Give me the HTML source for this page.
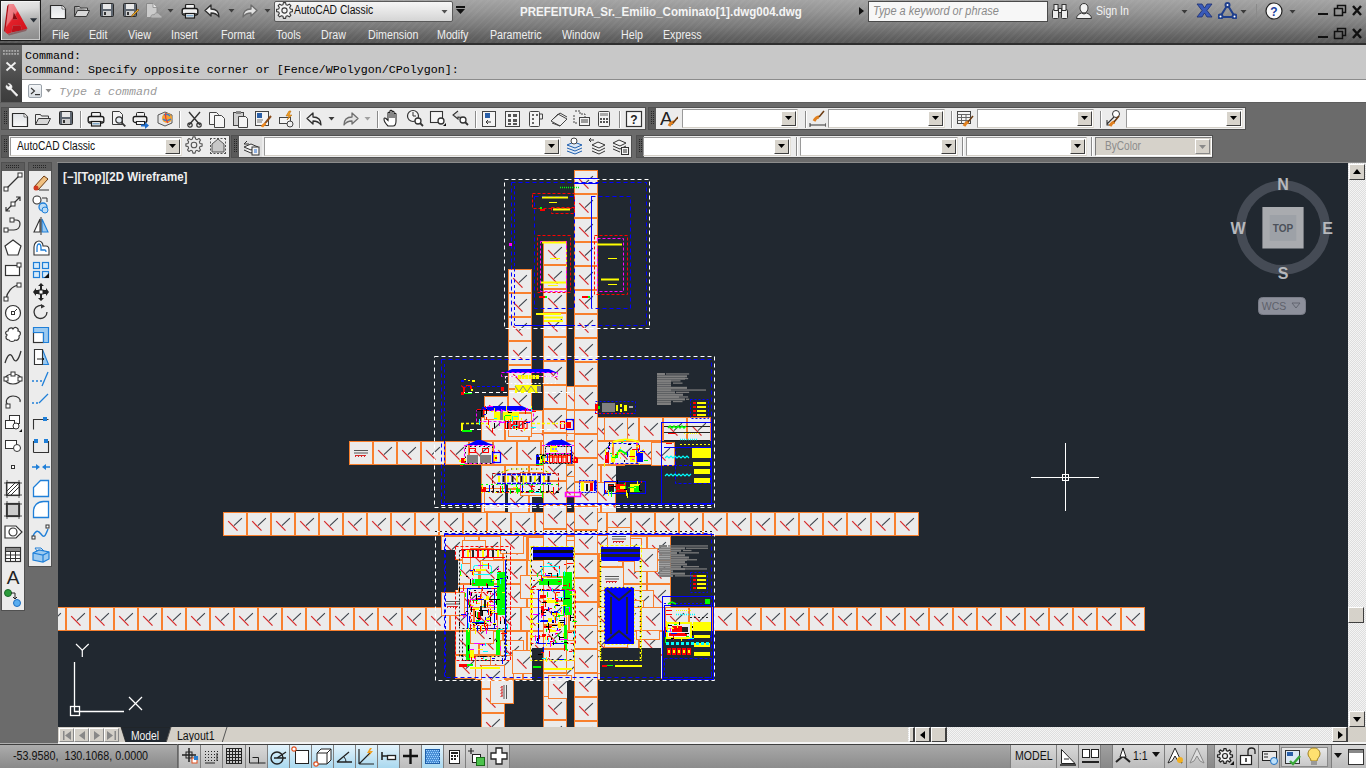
<!DOCTYPE html><html><head><meta charset="utf-8"><style>
*{margin:0;padding:0;box-sizing:border-box}
html,body{width:1366px;height:768px;overflow:hidden;background:#6b6b6b;font-family:"Liberation Sans",sans-serif;position:relative}
.a{position:absolute;display:block}
.t{position:absolute;white-space:nowrap;line-height:1}
</style></head><body>

<div class="a" style="left:0px;top:0px;width:1366px;height:45px;background:linear-gradient(#a4a4a4 0px,#939393 12px,#7a7a7a 26px,#606060 38px,#565656 44px);"></div>
<div class="a" style="left:0px;top:0px;width:1366px;height:45px;background:repeating-linear-gradient(135deg,rgba(255,255,255,0.035) 0 2px,rgba(0,0,0,0) 2px 5px);"></div>
<div class="a" style="left:0px;top:43px;width:1366px;height:2px;background:#2f2f2f;"></div>
<div class="a" style="left:0px;top:0px;width:41px;height:41px;background:linear-gradient(172deg,#ececec 0%,#dcdcdc 25%,#b4b4b4 50%,#9a9a9a 75%,#8a8a8a 100%);border:1px solid #1c1c1c;box-shadow:inset 1px 1px 0 #f4f4f4,inset -1px -1px 0 #c8c8c8"></div>
<svg class="a" style="left:0px;top:0px" width="41" height="41" viewBox="0 0 41 41"><defs><linearGradient id="ag" x1="0" y1="0" x2="1" y2="1"><stop offset="0" stop-color="#f39aa0"/><stop offset=".38" stop-color="#ee7078"/><stop offset=".42" stop-color="#e3202a"/><stop offset="1" stop-color="#d0101a"/></linearGradient></defs>
<path d="M8.8 4.1H13.8L27.5 28.4 22 30.3 20.5 25.2 12.9 25.5 11.5 32.6 7.6 34 5.3 32.2Z M12.8 19.5 17.6 19.3 13.6 12Z" fill="url(#ag)" fill-rule="evenodd"/>
<path d="M5.3 32.2L8.8 4.1 7.2 6 4 31z" fill="#b00c14"/>
<path d="M12.9 25.5L20.5 25.2 22 30.3 11.5 32.6z" fill="#c0101a"/>
<path d="M7.6 34L27.5 28.4 26 31 9 35.5z" fill="#7a2a30" opacity=".5"/>
<path d="M12.8 19.5 17.6 19.3 13.6 12Z" fill="#8a0a10"/><path d="M30 18.2h7.2l-3.6 4.4z" fill="#2a3038"/></svg>
<svg class="a" style="left:49px;top:3px" width="18" height="16" viewBox="0 0 18 16"><defs><linearGradient id="ng" x1="0" y1="0" x2="0" y2="1"><stop offset="0" stop-color="#dfe2e6"/><stop offset="1" stop-color="#f8f8f8"/></linearGradient></defs><path d="M1.5 2.5h11.5l3.5 3.5v9.5h-15z" fill="url(#ng)" stroke="#2a2a2a" stroke-width="1.2" stroke-linejoin="round"/><path d="M13 2.5v3.5h3.5" fill="#fff" stroke="#555" stroke-width=".8"/></svg>
<svg class="a" style="left:73px;top:3px" width="18" height="16" viewBox="0 0 18 16"><path d="M1.5 3.5h5l1 1.5h7v2" fill="#e8e8e8" stroke="#3a3a3a"/><path d="M1.5 13.5l3-6h12l-3 6z" fill="#d8d8d8" stroke="#3a3a3a"/><path d="M1.5 3.5v10" stroke="#3a3a3a"/></svg>
<svg class="a" style="left:99px;top:2px" width="18" height="17" viewBox="0 0 18 17"><rect x="1.5" y="1.5" width="13" height="13" rx="1" fill="#5e6670" stroke="#2a2a2a"/><rect x="4" y="2" width="8" height="5" fill="#e8e8e8"/><rect x="4" y="9" width="8" height="5" fill="#cfcfcf"/><rect x="5" y="10" width="2" height="3" fill="#333"/></svg>
<svg class="a" style="left:122px;top:2px" width="18" height="17" viewBox="0 0 18 17"><rect x="1.5" y="1.5" width="13" height="13" rx="1" fill="#5e6670" stroke="#2a2a2a"/><rect x="4" y="2" width="8" height="5" fill="#e8e8e8"/><rect x="4" y="9" width="8" height="5" fill="#cfcfcf"/><rect x="5" y="10" width="2" height="3" fill="#333"/><path d="M9 15l2-1 6-6-1-1-6 6z" fill="#f0b020" stroke="#704010" stroke-width=".6"/></svg>
<svg class="a" style="left:145px;top:2px" width="18" height="17" viewBox="0 0 18 17"><path d="M1.5 1.5h6.5l4 4v10h-10.5z" fill="#cbcbcb" stroke="#8a8a8a"/><path d="M8 1.5v4h4" fill="#e8e8e8" stroke="#8a8a8a" stroke-width=".8"/><path d="M6 16c-1-3 2-4 3-3 1-3 5-3 6 0 2 0 3 3 1 3z" fill="#b8b8b8" stroke="#8a8a8a" stroke-width=".8"/></svg>
<svg class="a" style="left:167px;top:9px" width="7" height="4" viewBox="0 0 7 4"><path d="M.5 0h6L3.5 3.5z" fill="#3e3e3e"/></svg>
<svg class="a" style="left:181px;top:3px" width="18" height="16" viewBox="0 0 18 16"><rect x="4.5" y="1.5" width="9" height="4" rx="1" fill="#f4f4f4" stroke="#222" stroke-width="1.2"/><rect x="1.2" y="5.5" width="15.6" height="6.5" rx="2" fill="#f0f0f0" stroke="#1a1a1a" stroke-width="1.4"/><path d="M1.5 10.5h15" stroke="#555"/><rect x="4.5" y="10.5" width="9" height="4.5" fill="#f6f6f6" stroke="#1a1a1a" stroke-width="1.2"/><rect x="5.5" y="12" width="7" height="1.5" fill="#80a8c8"/></svg>
<svg class="a" style="left:204px;top:4px" width="18" height="14" viewBox="0 0 18 14"><path d="M7 1L1 6.5 7 12V9c4 0 6 1 8 4 0-5-3-8-8-8z" fill="#f0f0f0" stroke="#2e2e2e" stroke-width="1.3" stroke-linejoin="round"/></svg>
<svg class="a" style="left:228px;top:9px" width="7" height="4" viewBox="0 0 7 4"><path d="M.5 0h6L3.5 3.5z" fill="#3e3e3e"/></svg>
<svg class="a" style="left:240px;top:4px" width="18" height="14" viewBox="0 0 18 14"><path d="M11 1l6 5.5-6 5.5V9c-4 0-6 1-8 4 0-5 3-8 8-8z" fill="#e2e2e2" stroke="#6e6e6e" stroke-width="1.3" stroke-linejoin="round"/></svg>
<svg class="a" style="left:264px;top:9px" width="7" height="4" viewBox="0 0 7 4"><path d="M.5 0h6L3.5 3.5z" fill="#3e3e3e"/></svg>
<div class="a" style="left:274px;top:1px;width:179px;height:21px;background:linear-gradient(#f6f6f6,#e2e2e2 60%,#d4d4d4);border:1px solid #5a5a5a;border-radius:2px"></div>
<svg class="a" style="left:276px;top:2px" width="17" height="17" viewBox="0 0 17 17"><path d="M14.31 6.99 L16.42 7.40 L16.42 9.60 L14.31 10.01 L13.68 11.53 L14.88 13.33 L13.33 14.88 L11.53 13.68 L10.01 14.31 L9.60 16.42 L7.40 16.42 L6.99 14.31 L5.47 13.68 L3.67 14.88 L2.12 13.33 L3.32 11.53 L2.69 10.01 L0.58 9.60 L0.58 7.40 L2.69 6.99 L3.32 5.47 L2.12 3.67 L3.67 2.12 L5.47 3.32 L6.99 2.69 L7.40 0.58 L9.60 0.58 L10.01 2.69 L11.53 3.32 L13.33 2.12 L14.88 3.67 L13.68 5.47Z" fill="#f4f4f4" stroke="#3a3a3a" stroke-width="1.1" stroke-linejoin="round"/><circle cx="8.5" cy="8.5" r="2.6" fill="#f4f4f4" stroke="#3a3a3a" stroke-width="1.1"/></svg>
<div class="t" style="left:294px;top:4px;font-size:12px;color:#101010;font-weight:normal;font-family:'Liberation Sans',sans-serif;font-style:normal;transform:scaleX(0.86);transform-origin:0 0;">AutoCAD Classic</div>
<svg class="a" style="left:441px;top:10px" width="7" height="4" viewBox="0 0 7 4"><path d="M.5 0h6L3.5 3.5z" fill="#505050"/></svg>
<svg class="a" style="left:456px;top:6px" width="9" height="8" viewBox="0 0 9 8"><rect x="0" y="0" width="9" height="2" fill="#111"/><path d="M0 3h9L4.5 8z" fill="#111"/></svg>
<div class="t" style="left:520px;top:6px;font-size:12px;color:#f4f4f4;font-weight:bold;font-family:'Liberation Sans',sans-serif;font-style:normal;transform:scaleX(0.963);transform-origin:0 0;">PREFEITURA_Sr._Emilio_Cominato[1].dwg004.dwg</div>
<svg class="a" style="left:859px;top:7px" width="5" height="8" viewBox="0 0 5 8"><path d="M0 0l5 4L0 8z" fill="#111"/></svg>
<div class="a" style="left:868px;top:1px;width:180px;height:21px;background:#f7f7f7;border:1px solid #4a4a4a"></div>
<div class="t" style="left:873px;top:5px;font-size:12px;color:#8a8a8a;font-weight:normal;font-family:'Liberation Sans',sans-serif;font-style:italic;transform:scaleX(0.913);transform-origin:0 0;">Type a keyword or phrase</div>
<svg class="a" style="left:1051px;top:3px" width="18" height="17" viewBox="0 0 18 17"><g fill="#eee" stroke="#333" stroke-width="1"><rect x="1.5" y="6.5" width="6" height="9" rx="1"/><rect x="10.5" y="6.5" width="6" height="9" rx="1"/><rect x="3" y="1.5" width="4" height="6"/><rect x="11" y="1.5" width="4" height="6"/><rect x="7.5" y="5.5" width="3" height="4"/></g></svg>
<svg class="a" style="left:1075px;top:2px" width="18" height="17" viewBox="0 0 18 17"><path d="M9 1.5c-2.6 0-4 2-4 4.5s1.5 5 4 5 4-2.5 4-5-1.4-4.5-4-4.5zM1.5 16.5c0-3 3-5 5-5.5l2.5 1 2.5-1c2 .5 5 2.5 5 5.5z" fill="#f2f2f2" stroke="#333"/></svg>
<div class="t" style="left:1096px;top:5px;font-size:12px;color:#f2f2f2;font-weight:normal;font-family:'Liberation Sans',sans-serif;font-style:normal;transform:scaleX(0.88);transform-origin:0 0;">Sign In</div>
<svg class="a" style="left:1181px;top:10px" width="7" height="4" viewBox="0 0 7 4"><path d="M.5 0h6L3.5 3.5z" fill="#3a3a3a"/></svg>
<svg class="a" style="left:1196px;top:3px" width="17" height="15" viewBox="0 0 17 15"><path d="M1 1h5l2.5 4L11 1h5l-5 6.5 5 6.5h-5L8.5 10 6 14H1l5-6.5z" fill="#3a5ab8" stroke="#1c2f70" stroke-width=".8"/></svg>
<svg class="a" style="left:1218px;top:2px" width="19" height="17" viewBox="0 0 19 17"><g fill="none" stroke="#1f3f8c" stroke-width="2"><path d="M9.5 3L2 15h15z"/><circle cx="9.5" cy="3" r="2" fill="#fff"/><circle cx="2.5" cy="14.5" r="2" fill="#fff"/><circle cx="16.5" cy="14.5" r="2" fill="#fff"/></g></svg>
<svg class="a" style="left:1240px;top:10px" width="7" height="4" viewBox="0 0 7 4"><path d="M.5 0h6L3.5 3.5z" fill="#3a3a3a"/></svg>
<div class="a" style="left:1256px;top:4px;width:1px;height:16px;background:#8a8a8a;"></div>
<svg class="a" style="left:1265px;top:2px" width="18" height="18" viewBox="0 0 18 18"><circle cx="9" cy="9" r="8" fill="#fafafa" stroke="#222" stroke-width="1.2"/><text x="9" y="13.5" font-size="12" font-weight="bold" text-anchor="middle" fill="#1a3fa0" font-family="Liberation Sans">?</text></svg>
<svg class="a" style="left:1289px;top:10px" width="7" height="4" viewBox="0 0 7 4"><path d="M.5 0h6L3.5 3.5z" fill="#3a3a3a"/></svg>
<svg class="a" style="left:1317px;top:4px" width="48" height="13" viewBox="0 0 48 13"><rect x="1" y="9" width="10" height="2" fill="#111"/><g fill="none" stroke="#111" stroke-width="1.5"><rect x="17.5" y="4.5" width="8" height="7"/><path d="M20.5 4.5v-3h8v7h-3"/></g><path d="M36 2l8 9M44 2l-8 9" stroke="#111" stroke-width="2.4"/></svg>
<svg class="a" style="left:1317px;top:27px" width="48" height="13" viewBox="0 0 48 13"><rect x="1" y="9" width="10" height="2" fill="#111"/><g fill="none" stroke="#111" stroke-width="1.5"><rect x="17.5" y="4.5" width="8" height="7"/><path d="M20.5 4.5v-3h8v7h-3"/></g><path d="M36 2l8 9M44 2l-8 9" stroke="#111" stroke-width="2.4"/></svg>
<div class="t" style="left:52px;top:29px;font-size:12px;color:#eeeeee;font-weight:normal;font-family:'Liberation Sans',sans-serif;font-style:normal;transform:scaleX(0.89);transform-origin:0 0;">File</div>
<div class="t" style="left:89px;top:29px;font-size:12px;color:#eeeeee;font-weight:normal;font-family:'Liberation Sans',sans-serif;font-style:normal;transform:scaleX(0.89);transform-origin:0 0;">Edit</div>
<div class="t" style="left:128px;top:29px;font-size:12px;color:#eeeeee;font-weight:normal;font-family:'Liberation Sans',sans-serif;font-style:normal;transform:scaleX(0.89);transform-origin:0 0;">View</div>
<div class="t" style="left:171px;top:29px;font-size:12px;color:#eeeeee;font-weight:normal;font-family:'Liberation Sans',sans-serif;font-style:normal;transform:scaleX(0.89);transform-origin:0 0;">Insert</div>
<div class="t" style="left:221px;top:29px;font-size:12px;color:#eeeeee;font-weight:normal;font-family:'Liberation Sans',sans-serif;font-style:normal;transform:scaleX(0.89);transform-origin:0 0;">Format</div>
<div class="t" style="left:276px;top:29px;font-size:12px;color:#eeeeee;font-weight:normal;font-family:'Liberation Sans',sans-serif;font-style:normal;transform:scaleX(0.89);transform-origin:0 0;">Tools</div>
<div class="t" style="left:321px;top:29px;font-size:12px;color:#eeeeee;font-weight:normal;font-family:'Liberation Sans',sans-serif;font-style:normal;transform:scaleX(0.89);transform-origin:0 0;">Draw</div>
<div class="t" style="left:368px;top:29px;font-size:12px;color:#eeeeee;font-weight:normal;font-family:'Liberation Sans',sans-serif;font-style:normal;transform:scaleX(0.89);transform-origin:0 0;">Dimension</div>
<div class="t" style="left:437px;top:29px;font-size:12px;color:#eeeeee;font-weight:normal;font-family:'Liberation Sans',sans-serif;font-style:normal;transform:scaleX(0.89);transform-origin:0 0;">Modify</div>
<div class="t" style="left:490px;top:29px;font-size:12px;color:#eeeeee;font-weight:normal;font-family:'Liberation Sans',sans-serif;font-style:normal;transform:scaleX(0.89);transform-origin:0 0;">Parametric</div>
<div class="t" style="left:562px;top:29px;font-size:12px;color:#eeeeee;font-weight:normal;font-family:'Liberation Sans',sans-serif;font-style:normal;transform:scaleX(0.89);transform-origin:0 0;">Window</div>
<div class="t" style="left:621px;top:29px;font-size:12px;color:#eeeeee;font-weight:normal;font-family:'Liberation Sans',sans-serif;font-style:normal;transform:scaleX(0.89);transform-origin:0 0;">Help</div>
<div class="t" style="left:663px;top:29px;font-size:12px;color:#eeeeee;font-weight:normal;font-family:'Liberation Sans',sans-serif;font-style:normal;transform:scaleX(0.89);transform-origin:0 0;">Express</div>
<div class="a" style="left:0px;top:45px;width:1366px;height:63px;background:#6b6b6b;"></div>
<div class="a" style="left:1px;top:45px;width:21px;height:57px;background:linear-gradient(#6a6a6a,#4a4a4a 60%,#3c3c3c);"></div>
<svg class="a" style="left:3px;top:50px" width="18" height="6" viewBox="0 0 18 6"><rect x="0.0" y="0" width="1.8" height="1.8" fill="#a8a8a8"/><rect x="0.0" y="3" width="1.8" height="1.8" fill="#a8a8a8"/><rect x="2.8" y="0" width="1.8" height="1.8" fill="#a8a8a8"/><rect x="2.8" y="3" width="1.8" height="1.8" fill="#a8a8a8"/><rect x="5.6" y="0" width="1.8" height="1.8" fill="#a8a8a8"/><rect x="5.6" y="3" width="1.8" height="1.8" fill="#a8a8a8"/><rect x="8.4" y="0" width="1.8" height="1.8" fill="#a8a8a8"/><rect x="8.4" y="3" width="1.8" height="1.8" fill="#a8a8a8"/><rect x="11.2" y="0" width="1.8" height="1.8" fill="#a8a8a8"/><rect x="11.2" y="3" width="1.8" height="1.8" fill="#a8a8a8"/><rect x="14.0" y="0" width="1.8" height="1.8" fill="#a8a8a8"/><rect x="14.0" y="3" width="1.8" height="1.8" fill="#a8a8a8"/></svg>
<svg class="a" style="left:5px;top:61px" width="12" height="11" viewBox="0 0 12 11"><path d="M1.5 1.5l9 8M10.5 1.5l-9 8" stroke="#f0f0f0" stroke-width="1.8"/></svg>
<svg class="a" style="left:4px;top:82px" width="15" height="15" viewBox="0 0 15 15"><path d="M2 4.5a3.5 3.5 0 0 0 4.6 3.3l6 6.5 1.3-1.3-6.3-6.3A3.5 3.5 0 0 0 4.2 1.5L6 3.5 4.5 5 2.5 3.2z" fill="#f4f4f4" stroke="#f4f4f4" stroke-width=".6"/></svg>
<div class="a" style="left:22px;top:45px;width:1344px;height:34px;background:#c8c8c8;"></div>
<div class="t" style="left:25px;top:50.5px;font-size:11.67px;color:#000;font-weight:normal;font-family:'Liberation Mono',monospace;font-style:normal;">Command:</div>
<div class="t" style="left:25px;top:65px;font-size:11.67px;color:#000;font-weight:normal;font-family:'Liberation Mono',monospace;font-style:normal;">Command: Specify opposite corner or [Fence/WPolygon/CPolygon]:</div>
<div class="a" style="left:22px;top:79px;width:1344px;height:23px;background:#ffffff;border-top:1px solid #8c8c8c"></div>
<div class="a" style="left:28px;top:84px;width:14px;height:14px;background:linear-gradient(#f4f6f8,#d8dde2);border:1px solid #9aa2aa;border-radius:2px"></div>
<svg class="a" style="left:30px;top:87px" width="11" height="9" viewBox="0 0 11 9"><path d="M1 1l3.5 3L1 7" fill="none" stroke="#333" stroke-width="1.1"/><rect x="5" y="7" width="5" height="1.2" fill="#333"/></svg>
<svg class="a" style="left:45px;top:89px" width="7" height="4" viewBox="0 0 7 4"><path d="M.5 0h6L3.5 3.5z" fill="#8a8a8a"/></svg>
<div class="t" style="left:59px;top:86.5px;font-size:11.67px;color:#9a9a9a;font-weight:normal;font-family:'Liberation Mono',monospace;font-style:italic;">Type a command</div>
<div class="a" style="left:0px;top:102px;width:1366px;height:1px;background:#5e5e5e;"></div>
<div class="a" style="left:1px;top:107px;width:645px;height:23px;background:#ececec;border:1px solid #505050"></div>
<div class="a" style="left:2px;top:108px;width:7px;height:21px;background:#5a5a5a;"></div>
<svg class="a" style="left:4px;top:111px" width="4" height="15" viewBox="0 0 4 15"><rect x="0" y="0" width="1" height="1" fill="#262626"/><rect x="0" y="2" width="1" height="1" fill="#262626"/><rect x="0" y="4" width="1" height="1" fill="#262626"/><rect x="0" y="6" width="1" height="1" fill="#262626"/><rect x="0" y="8" width="1" height="1" fill="#262626"/><rect x="0" y="10" width="1" height="1" fill="#262626"/><rect x="0" y="12" width="1" height="1" fill="#262626"/><rect x="2" y="0" width="1" height="1" fill="#262626"/><rect x="2" y="2" width="1" height="1" fill="#262626"/><rect x="2" y="4" width="1" height="1" fill="#262626"/><rect x="2" y="6" width="1" height="1" fill="#262626"/><rect x="2" y="8" width="1" height="1" fill="#262626"/><rect x="2" y="10" width="1" height="1" fill="#262626"/><rect x="2" y="12" width="1" height="1" fill="#262626"/></svg>
<svg class="a" style="left:11px;top:111px" width="18" height="16" viewBox="0 0 18 16"><defs><linearGradient id="ng" x1="0" y1="0" x2="0" y2="1"><stop offset="0" stop-color="#dfe2e6"/><stop offset="1" stop-color="#f8f8f8"/></linearGradient></defs><path d="M1.5 2.5h11.5l3.5 3.5v9.5h-15z" fill="url(#ng)" stroke="#2a2a2a" stroke-width="1.2" stroke-linejoin="round"/><path d="M13 2.5v3.5h3.5" fill="#fff" stroke="#555" stroke-width=".8"/></svg>
<svg class="a" style="left:34px;top:111px" width="18" height="16" viewBox="0 0 18 16"><path d="M1.5 3.5h5l1 1.5h7v2" fill="#e8e8e8" stroke="#3a3a3a"/><path d="M1.5 13.5l3-6h12l-3 6z" fill="#d8d8d8" stroke="#3a3a3a"/><path d="M1.5 3.5v10" stroke="#3a3a3a"/></svg>
<svg class="a" style="left:58px;top:110px" width="18" height="17" viewBox="0 0 18 17"><rect x="1.5" y="1.5" width="13" height="13" rx="1" fill="#5e6670" stroke="#2a2a2a"/><rect x="4" y="2" width="8" height="5" fill="#e8e8e8"/><rect x="4" y="9" width="8" height="5" fill="#cfcfcf"/><rect x="5" y="10" width="2" height="3" fill="#333"/></svg>
<div class="a" style="left:80px;top:111px;width:1px;height:17px;background:#8a8a8a;"></div>
<div class="a" style="left:81px;top:111px;width:1px;height:17px;background:#ffffff;"></div>
<svg class="a" style="left:87px;top:111px" width="18" height="16" viewBox="0 0 18 16"><rect x="4.5" y="1.5" width="9" height="4" rx="1" fill="#f4f4f4" stroke="#222" stroke-width="1.2"/><rect x="1.2" y="5.5" width="15.6" height="6.5" rx="2" fill="#f0f0f0" stroke="#1a1a1a" stroke-width="1.4"/><path d="M1.5 10.5h15" stroke="#555"/><rect x="4.5" y="10.5" width="9" height="4.5" fill="#f6f6f6" stroke="#1a1a1a" stroke-width="1.2"/><rect x="5.5" y="12" width="7" height="1.5" fill="#80a8c8"/></svg>
<svg class="a" style="left:110px;top:110px" width="18" height="18" viewBox="0 0 18 18"><path d="M2.5 1.5h7l3 3v10h-10z" fill="#f4f4f4" stroke="#3a3a3a"/><circle cx="9" cy="10" r="3.2" fill="#e8eef4" stroke="#333" stroke-width="1.2"/><path d="M11.3 12.3l4 4" stroke="#333" stroke-width="1.8"/></svg>
<svg class="a" style="left:132px;top:111px" width="18" height="18" viewBox="0 0 18 18"><rect x="4.5" y="1.5" width="8" height="4" rx="1" fill="#f4f4f4" stroke="#222"/><rect x="1.2" y="5.5" width="13.6" height="6" rx="2" fill="#f0f0f0" stroke="#1a1a1a" stroke-width="1.3"/><rect x="4.5" y="10.5" width="8" height="3" fill="#f6f6f6" stroke="#222"/><path d="M9 14.5h5" stroke="#1f6fd0" stroke-width="2"/><path d="M13 11l4 3.5-4 3.5z" fill="#1f6fd0"/></svg>
<svg class="a" style="left:156px;top:110px" width="18" height="18" viewBox="0 0 18 18"><path d="M2 5l7-3 7 3v8l-7 3-7-3z" fill="#e6e6e6" stroke="#555"/><circle cx="11" cy="8" r="5" fill="#f4a030"/><path d="M8 5a5 5 0 0 1 6 1M7 9c2 2 5 2 8 0" stroke="#2d7fd6" stroke-width="1.4" fill="none"/><path d="M10 3c-1 3 0 7 2 10" stroke="#e23a3a" stroke-width="1.2" fill="none"/></svg>
<div class="a" style="left:179px;top:111px;width:1px;height:17px;background:#8a8a8a;"></div>
<div class="a" style="left:180px;top:111px;width:1px;height:17px;background:#ffffff;"></div>
<svg class="a" style="left:186px;top:110px" width="18" height="18" viewBox="0 0 18 18"><path d="M3 2l11 13M14 2L3 15" stroke="#333" stroke-width="1.4"/><circle cx="4" cy="15" r="2.2" fill="none" stroke="#333" stroke-width="1.2"/><circle cx="13" cy="15" r="2.2" fill="none" stroke="#333" stroke-width="1.2"/></svg>
<svg class="a" style="left:208px;top:110px" width="18" height="18" viewBox="0 0 18 18"><path d="M1.5 2.5h7l2 2v10h-9z" fill="#f6f6f6" stroke="#444"/><path d="M6.5 5.5h7l3 3v9h-10z" fill="#f6f6f6" stroke="#444"/></svg>
<svg class="a" style="left:231px;top:110px" width="18" height="18" viewBox="0 0 18 18"><rect x="2.5" y="2.5" width="10" height="13" fill="#cfcfcf" stroke="#444"/><rect x="5" y="1" width="5" height="3" fill="#888"/><path d="M7.5 6.5h7l2 2v9h-9z" fill="#f4f4f4" stroke="#444"/></svg>
<svg class="a" style="left:254px;top:110px" width="18" height="18" viewBox="0 0 18 18"><rect x="1.5" y="1.5" width="13" height="14" fill="#f4f4f4" stroke="#444"/><rect x="3" y="3" width="5" height="5" fill="#2a5fa8"/><path d="M3 10h6M3 12h5" stroke="#777"/><path d="M9 16l3-4 5-6" stroke="#8a4b1a" stroke-width="2"/><path d="M8 17c1-2 2-3 4-3" stroke="#f08a20" stroke-width="2.5" fill="none"/></svg>
<svg class="a" style="left:277px;top:110px" width="18" height="18" viewBox="0 0 18 18"><rect x="2.5" y="7.5" width="11" height="6" fill="#f4f4f4" stroke="#444"/><circle cx="13" cy="14" r="3" fill="#f0f0f0" stroke="#444"/><path d="M12 1l-3 5h3l-2 4 5-5h-3l2-4z" fill="#f2a020" stroke="#b06000" stroke-width=".5"/></svg>
<div class="a" style="left:299px;top:111px;width:1px;height:17px;background:#8a8a8a;"></div>
<div class="a" style="left:300px;top:111px;width:1px;height:17px;background:#ffffff;"></div>
<svg class="a" style="left:306px;top:112px" width="18" height="14" viewBox="0 0 18 14"><path d="M7 1L1 6.5 7 12V9c4 0 6 1 8 4 0-5-3-8-8-8z" fill="#f0f0f0" stroke="#2e2e2e" stroke-width="1.3" stroke-linejoin="round"/></svg>
<svg class="a" style="left:328px;top:117px" width="7" height="4" viewBox="0 0 7 4"><path d="M.5 0h6L3.5 3.5z" fill="#3a3a3a"/></svg>
<svg class="a" style="left:341px;top:112px" width="18" height="14" viewBox="0 0 18 14"><path d="M11 1l6 5.5-6 5.5V9c-4 0-6 1-8 4 0-5 3-8 8-8z" fill="#e2e2e2" stroke="#6e6e6e" stroke-width="1.3" stroke-linejoin="round"/></svg>
<svg class="a" style="left:364px;top:117px" width="7" height="4" viewBox="0 0 7 4"><path d="M.5 0h6L3.5 3.5z" fill="#a0a0a0"/></svg>
<div class="a" style="left:377px;top:111px;width:1px;height:17px;background:#8a8a8a;"></div>
<div class="a" style="left:378px;top:111px;width:1px;height:17px;background:#ffffff;"></div>
<svg class="a" style="left:383px;top:109px" width="18" height="18" viewBox="0 0 18 18"><path d="M5 17c-2-2-4-5-4-7 0-1 1-1.5 2-.5l2 2V4c0-1 2-1 2 0v5V2c0-1 2-1 2 0v7V3c0-1 2-1 2 0v6V5c0-1 2-1 2 0v7c0 3-1 5-3 5z" fill="#fff" stroke="#222" stroke-width="1.1"/></svg>
<svg class="a" style="left:406px;top:109px" width="18" height="18" viewBox="0 0 18 18"><circle cx="7" cy="7" r="5.5" fill="#f4f4f4" stroke="#333" stroke-width="1.2"/><path d="M7 3v4h3" stroke="#333" fill="none"/><circle cx="12" cy="12" r="3" fill="#fff" stroke="#333" stroke-width="1.3"/><path d="M14 14l3 3" stroke="#333" stroke-width="1.8"/></svg>
<svg class="a" style="left:429px;top:109px" width="18" height="18" viewBox="0 0 18 18"><rect x="1.5" y="2.5" width="12" height="11" fill="#f4f4f4" stroke="#333" stroke-width="1.1"/><circle cx="12" cy="12" r="3" fill="#fff" stroke="#333" stroke-width="1.3"/><path d="M14 17h3v-3z" fill="#111"/></svg>
<svg class="a" style="left:452px;top:109px" width="18" height="18" viewBox="0 0 18 18"><path d="M6 2L1 6l5 4V8c3 0 5 1 6 2" fill="#ddd" stroke="#333" stroke-width="1.1"/><circle cx="11" cy="11" r="3" fill="#fff" stroke="#333" stroke-width="1.3"/><path d="M13 13l3 3" stroke="#333" stroke-width="1.8"/></svg>
<div class="a" style="left:475px;top:111px;width:1px;height:17px;background:#8a8a8a;"></div>
<div class="a" style="left:476px;top:111px;width:1px;height:17px;background:#ffffff;"></div>
<svg class="a" style="left:481px;top:110px" width="18" height="18" viewBox="0 0 18 18"><rect x="1.5" y="1.5" width="13" height="15" fill="#f4f4f4" stroke="#444"/><rect x="4" y="3" width="5" height="5" fill="#2a5fa8"/><path d="M10 12H5M7 10l-2 2 2 2" stroke="#333" fill="none"/></svg>
<svg class="a" style="left:504px;top:110px" width="18" height="18" viewBox="0 0 18 18"><rect x="1.5" y="1.5" width="14" height="15" fill="#f4f4f4" stroke="#444"/><g fill="#555"><rect x="4" y="4" width="3" height="3"/><rect x="9" y="4" width="4" height="3"/><rect x="4" y="9" width="3" height="3"/><rect x="9" y="9" width="4" height="3"/><rect x="4" y="13" width="3" height="2"/><rect x="9" y="13" width="4" height="2"/></g></svg>
<svg class="a" style="left:527px;top:110px" width="18" height="18" viewBox="0 0 18 18"><rect x="2.5" y="1.5" width="10" height="15" rx="1" fill="#f4f4f4" stroke="#444"/><g fill="#666"><rect x="5" y="4" width="2" height="2"/><rect x="5" y="8" width="2" height="2"/><rect x="5" y="12" width="2" height="2"/><rect x="9" y="4" width="2" height="2"/></g><path d="M12.5 4h3v5h-3" fill="none" stroke="#444"/></svg>
<svg class="a" style="left:550px;top:110px" width="18" height="18" viewBox="0 0 18 18"><path d="M1 11l7-7 9 5-7 7z" fill="#eee" stroke="#444"/><path d="M2 13l8 3M3 9l7-6 7 4" fill="none" stroke="#444"/></svg>
<svg class="a" style="left:573px;top:109px" width="18" height="18" viewBox="0 0 18 18"><path d="M2 2h5v3h5v3" fill="none" stroke="#444" stroke-dasharray="2 1"/><rect x="6.5" y="8.5" width="10" height="8" fill="#f4f4f4" stroke="#444"/><path d="M8 11h7M8 13h7" stroke="#444"/><path d="M1 6v8h4" fill="none" stroke="#444" stroke-dasharray="2 1"/></svg>
<svg class="a" style="left:596px;top:110px" width="18" height="18" viewBox="0 0 18 18"><rect x="2.5" y="1.5" width="11" height="15" rx="1" fill="#f4f4f4" stroke="#444"/><rect x="4" y="3" width="8" height="3" fill="#aaa"/><g fill="#555"><rect x="4" y="8" width="2" height="2"/><rect x="7" y="8" width="2" height="2"/><rect x="10" y="8" width="2" height="2"/><rect x="4" y="11" width="2" height="2"/><rect x="7" y="11" width="2" height="2"/><rect x="10" y="11" width="2" height="2"/></g></svg>
<div class="a" style="left:619px;top:111px;width:1px;height:17px;background:#8a8a8a;"></div>
<div class="a" style="left:620px;top:111px;width:1px;height:17px;background:#ffffff;"></div>
<svg class="a" style="left:625px;top:110px" width="18" height="18" viewBox="0 0 18 18"><rect x="1.5" y="1.5" width="15" height="15" fill="#f8f8f8" stroke="#333" stroke-width="1.2"/><text x="9" y="14" font-size="12" font-weight="bold" text-anchor="middle" fill="#222" font-family="Liberation Sans">?</text></svg>
<div class="a" style="left:648px;top:107px;width:598px;height:23px;background:#ececec;border:1px solid #505050"></div>
<div class="a" style="left:649px;top:108px;width:7px;height:21px;background:#5a5a5a;"></div>
<svg class="a" style="left:651px;top:111px" width="4" height="15" viewBox="0 0 4 15"><rect x="0" y="0" width="1" height="1" fill="#262626"/><rect x="0" y="2" width="1" height="1" fill="#262626"/><rect x="0" y="4" width="1" height="1" fill="#262626"/><rect x="0" y="6" width="1" height="1" fill="#262626"/><rect x="0" y="8" width="1" height="1" fill="#262626"/><rect x="0" y="10" width="1" height="1" fill="#262626"/><rect x="0" y="12" width="1" height="1" fill="#262626"/><rect x="2" y="0" width="1" height="1" fill="#262626"/><rect x="2" y="2" width="1" height="1" fill="#262626"/><rect x="2" y="4" width="1" height="1" fill="#262626"/><rect x="2" y="6" width="1" height="1" fill="#262626"/><rect x="2" y="8" width="1" height="1" fill="#262626"/><rect x="2" y="10" width="1" height="1" fill="#262626"/><rect x="2" y="12" width="1" height="1" fill="#262626"/></svg>
<svg class="a" style="left:660px;top:109px" width="18" height="18" viewBox="0 0 18 18"><text x="0" y="16" font-size="19" fill="#222" font-family="Liberation Sans">A</text><path d="M9 17c1-2 3-4 5-4" stroke="#e08020" stroke-width="3" fill="none"/><path d="M13 14l5-6" stroke="#6a3a10" stroke-width="1.5"/></svg>
<div class="a" style="left:682px;top:109px;width:116px;height:19px;background:#fff;border:1px solid #9a9a9a;border-right-color:#e4e0d8;border-bottom-color:#d4d0c8"></div>
<div class="a" style="left:781px;top:111px;width:15px;height:15px;background:#d8d4cc;border:1px solid #fff;border-right-color:#404040;border-bottom-color:#404040"></div>
<svg class="a" style="left:785px;top:116px" width="7" height="4" viewBox="0 0 7 4"><path d="M0 0h7L3.5 4z" fill="#000"/></svg>
<div class="a" style="left:805px;top:111px;width:1px;height:17px;background:#8a8a8a;"></div>
<div class="a" style="left:806px;top:111px;width:1px;height:17px;background:#ffffff;"></div>
<svg class="a" style="left:808px;top:109px" width="18" height="18" viewBox="0 0 18 18"><path d="M2 14v4M18 14v4M2 16h16" stroke="#333" fill="none"/><path d="M6 12c1-2 3-4 5-4" stroke="#e08020" stroke-width="3" fill="none"/><path d="M11 8l5-6" stroke="#6a3a10" stroke-width="1.5"/></svg>
<div class="a" style="left:828px;top:109px;width:117px;height:19px;background:#fff;border:1px solid #9a9a9a;border-right-color:#e4e0d8;border-bottom-color:#d4d0c8"></div>
<div class="a" style="left:928px;top:111px;width:15px;height:15px;background:#d8d4cc;border:1px solid #fff;border-right-color:#404040;border-bottom-color:#404040"></div>
<svg class="a" style="left:932px;top:116px" width="7" height="4" viewBox="0 0 7 4"><path d="M0 0h7L3.5 4z" fill="#000"/></svg>
<div class="a" style="left:951px;top:111px;width:1px;height:17px;background:#8a8a8a;"></div>
<div class="a" style="left:952px;top:111px;width:1px;height:17px;background:#ffffff;"></div>
<svg class="a" style="left:956px;top:109px" width="18" height="18" viewBox="0 0 18 18"><rect x="1.5" y="2.5" width="13" height="12" fill="#f4f4f4" stroke="#444"/><path d="M1.5 5.5h13M1.5 8.5h13M1.5 11.5h13M5.5 5.5v9M10 5.5v9" stroke="#666"/><path d="M8 17c1-2 3-4 5-4" stroke="#e08020" stroke-width="3" fill="none"/><path d="M12 13l5-6" stroke="#6a3a10" stroke-width="1.5"/></svg>
<div class="a" style="left:977px;top:109px;width:117px;height:19px;background:#fff;border:1px solid #9a9a9a;border-right-color:#e4e0d8;border-bottom-color:#d4d0c8"></div>
<div class="a" style="left:1077px;top:111px;width:15px;height:15px;background:#d8d4cc;border:1px solid #fff;border-right-color:#404040;border-bottom-color:#404040"></div>
<svg class="a" style="left:1081px;top:116px" width="7" height="4" viewBox="0 0 7 4"><path d="M0 0h7L3.5 4z" fill="#000"/></svg>
<div class="a" style="left:1100px;top:111px;width:1px;height:17px;background:#8a8a8a;"></div>
<div class="a" style="left:1101px;top:111px;width:1px;height:17px;background:#ffffff;"></div>
<svg class="a" style="left:1104px;top:109px" width="18" height="18" viewBox="0 0 18 18"><circle cx="12" cy="5" r="3.5" fill="#fff" stroke="#333"/><path d="M10 8L3 15M3 11v5h4" fill="none" stroke="#333" stroke-width="1.1"/><path d="M6 17c1-2 3-4 5-4" stroke="#e08020" stroke-width="3" fill="none"/><path d="M10 13l5-6" stroke="#6a3a10" stroke-width="1.5"/></svg>
<div class="a" style="left:1126px;top:109px;width:117px;height:19px;background:#fff;border:1px solid #9a9a9a;border-right-color:#e4e0d8;border-bottom-color:#d4d0c8"></div>
<div class="a" style="left:1226px;top:111px;width:15px;height:15px;background:#d8d4cc;border:1px solid #fff;border-right-color:#404040;border-bottom-color:#404040"></div>
<svg class="a" style="left:1230px;top:116px" width="7" height="4" viewBox="0 0 7 4"><path d="M0 0h7L3.5 4z" fill="#000"/></svg>
<div class="a" style="left:1px;top:135px;width:229px;height:23px;background:#ececec;border:1px solid #505050"></div>
<div class="a" style="left:2px;top:136px;width:7px;height:21px;background:#5a5a5a;"></div>
<svg class="a" style="left:4px;top:139px" width="4" height="15" viewBox="0 0 4 15"><rect x="0" y="0" width="1" height="1" fill="#262626"/><rect x="0" y="2" width="1" height="1" fill="#262626"/><rect x="0" y="4" width="1" height="1" fill="#262626"/><rect x="0" y="6" width="1" height="1" fill="#262626"/><rect x="0" y="8" width="1" height="1" fill="#262626"/><rect x="0" y="10" width="1" height="1" fill="#262626"/><rect x="0" y="12" width="1" height="1" fill="#262626"/><rect x="2" y="0" width="1" height="1" fill="#262626"/><rect x="2" y="2" width="1" height="1" fill="#262626"/><rect x="2" y="4" width="1" height="1" fill="#262626"/><rect x="2" y="6" width="1" height="1" fill="#262626"/><rect x="2" y="8" width="1" height="1" fill="#262626"/><rect x="2" y="10" width="1" height="1" fill="#262626"/><rect x="2" y="12" width="1" height="1" fill="#262626"/></svg>
<div class="a" style="left:10px;top:137px;width:172px;height:19px;background:#fff;border:1px solid #9a9a9a;border-right-color:#e4e0d8;border-bottom-color:#d4d0c8"></div>
<div class="a" style="left:165px;top:139px;width:15px;height:15px;background:#d8d4cc;border:1px solid #fff;border-right-color:#404040;border-bottom-color:#404040"></div>
<svg class="a" style="left:169px;top:144px" width="7" height="4" viewBox="0 0 7 4"><path d="M0 0h7L3.5 4z" fill="#000"/></svg>
<div class="t" style="left:17px;top:140px;font-size:12px;color:#111;font-weight:normal;font-family:'Liberation Sans',sans-serif;font-style:normal;transform:scaleX(0.85);transform-origin:0 0;">AutoCAD Classic</div>
<svg class="a" style="left:185px;top:136px" width="18" height="18" viewBox="0 0 18 18"><path d="M15.00 7.43 L17.12 7.88 L17.12 10.12 L15.00 10.57 L14.35 12.14 L15.54 13.95 L13.95 15.54 L12.14 14.35 L10.57 15.00 L10.12 17.12 L7.88 17.12 L7.43 15.00 L5.86 14.35 L4.05 15.54 L2.46 13.95 L3.65 12.14 L3.00 10.57 L0.88 10.12 L0.88 7.88 L3.00 7.43 L3.65 5.86 L2.46 4.05 L4.05 2.46 L5.86 3.65 L7.43 3.00 L7.88 0.88 L10.12 0.88 L10.57 3.00 L12.14 3.65 L13.95 2.46 L15.54 4.05 L14.35 5.86Z" fill="#ececec" stroke="#555" stroke-width="1.1" stroke-linejoin="round"/><circle cx="9" cy="9" r="2.8" fill="#ececec" stroke="#555" stroke-width="1.1"/></svg>
<svg class="a" style="left:209px;top:137px" width="18" height="18" viewBox="0 0 18 18"><path d="M3 7l6-5 6 5v8H3z" fill="#c8c8c8" stroke="#555"/><path d="M1 1.5h16M1 16.5h16M1.5 1v16M16.5 1v16" stroke="#555" stroke-dasharray="2 1.5"/></svg>
<div class="a" style="left:231px;top:135px;width:401px;height:23px;background:#ececec;border:1px solid #505050"></div>
<div class="a" style="left:232px;top:136px;width:7px;height:21px;background:#5a5a5a;"></div>
<svg class="a" style="left:234px;top:139px" width="4" height="15" viewBox="0 0 4 15"><rect x="0" y="0" width="1" height="1" fill="#262626"/><rect x="0" y="2" width="1" height="1" fill="#262626"/><rect x="0" y="4" width="1" height="1" fill="#262626"/><rect x="0" y="6" width="1" height="1" fill="#262626"/><rect x="0" y="8" width="1" height="1" fill="#262626"/><rect x="0" y="10" width="1" height="1" fill="#262626"/><rect x="0" y="12" width="1" height="1" fill="#262626"/><rect x="2" y="0" width="1" height="1" fill="#262626"/><rect x="2" y="2" width="1" height="1" fill="#262626"/><rect x="2" y="4" width="1" height="1" fill="#262626"/><rect x="2" y="6" width="1" height="1" fill="#262626"/><rect x="2" y="8" width="1" height="1" fill="#262626"/><rect x="2" y="10" width="1" height="1" fill="#262626"/><rect x="2" y="12" width="1" height="1" fill="#262626"/></svg>
<div class="a" style="left:240px;top:136px;width:22px;height:21px;background:#e0e0e0;"></div>
<svg class="a" style="left:242px;top:138px" width="18" height="18" viewBox="0 0 18 18"><path d="M5 3l-3 3h5" fill="none" stroke="#333"/><path d="M2 9l7-3 7 3-7 3zM2 12l7 3 7-3" fill="#f4f4f4" stroke="#333"/><rect x="10" y="9" width="7" height="8" fill="#f4f4f4" stroke="#333"/><path d="M12 12h3M12 14h3" stroke="#2a6fd0"/></svg>
<div class="a" style="left:264px;top:137px;width:297px;height:19px;background:#fff;border:1px solid #9a9a9a;border-right-color:#e4e0d8;border-bottom-color:#d4d0c8"></div>
<div class="a" style="left:544px;top:139px;width:15px;height:15px;background:#d8d4cc;border:1px solid #fff;border-right-color:#404040;border-bottom-color:#404040"></div>
<svg class="a" style="left:548px;top:144px" width="7" height="4" viewBox="0 0 7 4"><path d="M0 0h7L3.5 4z" fill="#000"/></svg>
<svg class="a" style="left:565px;top:137px" width="18" height="18" viewBox="0 0 18 18"><path d="M2 8l7-3 8 3-7 3zM2 11l8 3 7-3M2 14l8 3 7-3" fill="#dbe8f6" stroke="#2060b0"/><circle cx="9" cy="4" r="3" fill="#fff" stroke="#444"/></svg>
<svg class="a" style="left:588px;top:137px" width="18" height="18" viewBox="0 0 18 18"><path d="M6 3H1M3 1l-2 2 2 2" fill="none" stroke="#333"/><path d="M4 8l6-3 7 3-6 3zM4 11l7 3 6-3M4 14l7 3 6-3" fill="#f4f4f4" stroke="#333"/></svg>
<svg class="a" style="left:611px;top:137px" width="18" height="18" viewBox="0 0 18 18"><path d="M2 6l6-3 7 3-6 3zM2 9l7 3 6-3M2 12l7 3" fill="#f4f4f4" stroke="#333"/><rect x="10.5" y="10.5" width="7" height="7" fill="#f4f4f4" stroke="#333"/><path d="M12 13h4M12 15h4" stroke="#333"/></svg>
<div class="a" style="left:636px;top:135px;width:577px;height:23px;background:#ececec;border:1px solid #505050"></div>
<div class="a" style="left:637px;top:136px;width:7px;height:21px;background:#5a5a5a;"></div>
<svg class="a" style="left:639px;top:139px" width="4" height="15" viewBox="0 0 4 15"><rect x="0" y="0" width="1" height="1" fill="#262626"/><rect x="0" y="2" width="1" height="1" fill="#262626"/><rect x="0" y="4" width="1" height="1" fill="#262626"/><rect x="0" y="6" width="1" height="1" fill="#262626"/><rect x="0" y="8" width="1" height="1" fill="#262626"/><rect x="0" y="10" width="1" height="1" fill="#262626"/><rect x="0" y="12" width="1" height="1" fill="#262626"/><rect x="2" y="0" width="1" height="1" fill="#262626"/><rect x="2" y="2" width="1" height="1" fill="#262626"/><rect x="2" y="4" width="1" height="1" fill="#262626"/><rect x="2" y="6" width="1" height="1" fill="#262626"/><rect x="2" y="8" width="1" height="1" fill="#262626"/><rect x="2" y="10" width="1" height="1" fill="#262626"/><rect x="2" y="12" width="1" height="1" fill="#262626"/></svg>
<div class="a" style="left:643px;top:137px;width:148px;height:19px;background:#fff;border:1px solid #9a9a9a;border-right-color:#e4e0d8;border-bottom-color:#d4d0c8"></div>
<div class="a" style="left:774px;top:139px;width:15px;height:15px;background:#d8d4cc;border:1px solid #fff;border-right-color:#404040;border-bottom-color:#404040"></div>
<svg class="a" style="left:778px;top:144px" width="7" height="4" viewBox="0 0 7 4"><path d="M0 0h7L3.5 4z" fill="#000"/></svg>
<div class="a" style="left:796px;top:137px;width:1px;height:19px;background:#8a8a8a;"></div>
<div class="a" style="left:797px;top:137px;width:1px;height:19px;background:#ffffff;"></div>
<div class="a" style="left:800px;top:137px;width:158px;height:19px;background:#fff;border:1px solid #9a9a9a;border-right-color:#e4e0d8;border-bottom-color:#d4d0c8"></div>
<div class="a" style="left:941px;top:139px;width:15px;height:15px;background:#d8d4cc;border:1px solid #fff;border-right-color:#404040;border-bottom-color:#404040"></div>
<svg class="a" style="left:945px;top:144px" width="7" height="4" viewBox="0 0 7 4"><path d="M0 0h7L3.5 4z" fill="#000"/></svg>
<div class="a" style="left:962px;top:137px;width:1px;height:19px;background:#8a8a8a;"></div>
<div class="a" style="left:963px;top:137px;width:1px;height:19px;background:#ffffff;"></div>
<div class="a" style="left:966px;top:137px;width:121px;height:19px;background:#fff;border:1px solid #9a9a9a;border-right-color:#e4e0d8;border-bottom-color:#d4d0c8"></div>
<div class="a" style="left:1070px;top:139px;width:15px;height:15px;background:#d8d4cc;border:1px solid #fff;border-right-color:#404040;border-bottom-color:#404040"></div>
<svg class="a" style="left:1074px;top:144px" width="7" height="4" viewBox="0 0 7 4"><path d="M0 0h7L3.5 4z" fill="#000"/></svg>
<div class="a" style="left:1091px;top:137px;width:1px;height:19px;background:#8a8a8a;"></div>
<div class="a" style="left:1092px;top:137px;width:1px;height:19px;background:#ffffff;"></div>
<div class="a" style="left:1095px;top:137px;width:117px;height:19px;background:#d6d2ca;border:1px solid #7a7a7a;border-right-color:#fff;border-bottom-color:#fff"></div>
<div class="a" style="left:1195px;top:139px;width:15px;height:15px;background:#d6d2ca;border:1px solid #fff;border-right-color:#888;border-bottom-color:#888"></div>
<svg class="a" style="left:1199px;top:145px" width="7" height="4" viewBox="0 0 7 4"><path d="M0 0h7L3.5 4z" fill="#8a8a8a"/></svg>
<div class="t" style="left:1105px;top:140px;font-size:12px;color:#8c8c8c;font-weight:normal;font-family:'Liberation Sans',sans-serif;font-style:normal;transform:scaleX(0.84);transform-origin:0 0;">ByColor</div>
<div class="a" style="left:57px;top:162px;width:1309px;height:1px;background:#8c8c8c;"></div>
<div class="a" style="left:57px;top:162px;width:1px;height:565px;background:#8c8c8c;"></div>
<div class="a" style="left:58px;top:163px;width:1290px;height:564px;background:#212830;overflow:hidden">
<svg width="1290" height="564" viewBox="58 163 1290 564" style="display:block"><defs>
<g id="c"><rect x="0.5" y="0.5" width="23" height="23" fill="#ebebeb" stroke="#f8802e"/><path d="M5.2 9.2L14.5 18.7" stroke="#d62828" stroke-width="1.2"/><path d="M10.9 13.7L18.9 6.2" stroke="#3a4049" stroke-width="1.1"/></g>
<g id="g"><rect x="0.5" y="0.5" width="23" height="23" fill="#ebebeb" stroke="#f8802e"/><path d="M5 9.5h14M5 12h14" stroke="#555" stroke-width="1"/><path d="M6 16l2-2M9 16l2-2M12 16l2-2M15 16l2-2M6 14.5h11" stroke="#d42a2a" stroke-width="1"/></g>
<g id="v"><rect x="0.5" y="0.5" width="23" height="23" fill="#ebebeb" stroke="#f8802e"/><path d="M14 5v14M16.5 5v14" stroke="#555" stroke-width="1"/><path d="M12.5 6l-2 2M12.5 9l-2 2M12.5 12l-2 2M12.5 15l-2 2M12 6v11" stroke="#d42a2a" stroke-width="1"/></g>
<g id="e"><rect x="0.5" y="0.5" width="23" height="23" fill="#ebebeb" stroke="#f8802e"/></g>
</defs><use href="#c" x="481" y="417"/><use href="#c" x="505" y="417"/><use href="#c" x="529" y="417"/><use href="#c" x="553" y="417"/><use href="#c" x="577" y="417"/><use href="#c" x="484" y="396"/><use href="#c" x="563" y="386"/><use href="#c" x="566" y="410"/><use href="#c" x="519" y="410"/><use href="#c" x="481" y="465"/><use href="#c" x="505" y="465"/><use href="#c" x="529" y="465"/><use href="#c" x="553" y="465"/><use href="#c" x="577" y="465"/><use href="#c" x="601" y="465"/><use href="#c" x="481" y="489"/><use href="#c" x="505" y="489"/><use href="#c" x="529" y="489"/><use href="#c" x="553" y="489"/><use href="#c" x="577" y="489"/><use href="#c" x="601" y="489"/><use href="#c" x="484" y="488"/><use href="#c" x="520" y="472"/><use href="#c" x="556" y="476"/><use href="#c" x="592" y="482"/><use href="#g" x="607" y="527"/><use href="#g" x="600" y="567"/><use href="#c" x="455" y="536"/><use href="#c" x="479" y="536"/><use href="#c" x="503" y="536"/><use href="#c" x="527" y="536"/><use href="#c" x="551" y="536"/><use href="#c" x="575" y="536"/><use href="#c" x="599" y="536"/><use href="#c" x="623" y="536"/><use href="#c" x="647" y="536"/><use href="#c" x="455" y="560"/><use href="#c" x="479" y="560"/><use href="#c" x="503" y="560"/><use href="#c" x="527" y="560"/><use href="#c" x="551" y="560"/><use href="#c" x="575" y="560"/><use href="#c" x="599" y="560"/><use href="#c" x="623" y="560"/><use href="#c" x="647" y="560"/><use href="#c" x="455" y="584"/><use href="#c" x="479" y="584"/><use href="#c" x="503" y="584"/><use href="#c" x="527" y="584"/><use href="#c" x="551" y="584"/><use href="#c" x="575" y="584"/><use href="#c" x="599" y="584"/><use href="#c" x="623" y="584"/><use href="#c" x="647" y="584"/><use href="#c" x="441" y="536"/><use href="#c" x="443" y="592"/><use href="#c" x="455" y="631"/><use href="#c" x="479" y="631"/><use href="#c" x="503" y="631"/><use href="#c" x="527" y="631"/><use href="#c" x="455" y="655"/><use href="#c" x="479" y="655"/><use href="#c" x="503" y="655"/><use href="#c" x="527" y="655"/><use href="#c" x="475" y="656"/><use href="#c" x="499" y="656"/><use href="#c" x="523" y="656"/><use href="#c" x="543" y="631"/><use href="#c" x="567" y="631"/><use href="#c" x="591" y="631"/><use href="#c" x="615" y="631"/><use href="#c" x="639" y="631"/><use href="#c" x="543" y="655"/><use href="#c" x="567" y="655"/><use href="#c" x="591" y="655"/><use href="#c" x="615" y="655"/><use href="#c" x="639" y="655"/><use href="#c" x="543" y="656"/><use href="#c" x="567" y="656"/><use href="#c" x="591" y="656"/><use href="#c" x="462" y="540"/><use href="#c" x="470" y="548"/><use href="#c" x="500" y="530"/><use href="#c" x="528" y="537"/><use href="#c" x="560" y="540"/><use href="#c" x="590" y="530"/><use href="#c" x="618" y="538"/><use href="#c" x="634" y="548"/><use href="#c" x="480" y="560"/><use href="#c" x="520" y="575"/><use href="#c" x="556" y="580"/><use href="#c" x="600" y="566"/><use href="#c" x="630" y="590"/><use href="#c" x="470" y="620"/><use href="#c" x="500" y="640"/><use href="#c" x="530" y="636"/><use href="#c" x="566" y="640"/><use href="#c" x="580" y="650"/><use href="#c" x="490" y="655"/><use href="#c" x="512" y="650"/><use href="#c" x="556" y="660"/><use href="#c" x="548" y="675"/><use href="#c" x="620" y="600"/><use href="#c" x="604" y="624"/><use href="#c" x="636" y="616"/><use href="#c" x="458" y="588"/><use href="#c" x="42" y="607"/><use href="#c" x="66" y="607"/><use href="#c" x="90" y="607"/><use href="#c" x="114" y="607"/><use href="#c" x="138" y="607"/><use href="#c" x="162" y="607"/><use href="#c" x="186" y="607"/><use href="#c" x="210" y="607"/><use href="#c" x="234" y="607"/><use href="#c" x="258" y="607"/><use href="#c" x="282" y="607"/><use href="#c" x="306" y="607"/><use href="#c" x="330" y="607"/><use href="#c" x="354" y="607"/><use href="#c" x="378" y="607"/><use href="#c" x="402" y="607"/><use href="#c" x="426" y="607"/><use href="#c" x="450" y="607"/><use href="#c" x="474" y="607"/><use href="#c" x="497" y="607"/><use href="#c" x="521" y="607"/><use href="#c" x="545" y="607"/><use href="#c" x="569" y="607"/><use href="#c" x="593" y="607"/><use href="#c" x="617" y="607"/><use href="#c" x="641" y="607"/><use href="#c" x="665" y="607"/><use href="#c" x="689" y="607"/><use href="#c" x="713" y="607"/><use href="#c" x="737" y="607"/><use href="#c" x="761" y="607"/><use href="#c" x="785" y="607"/><use href="#c" x="809" y="607"/><use href="#c" x="833" y="607"/><use href="#c" x="857" y="607"/><use href="#c" x="881" y="607"/><use href="#c" x="905" y="607"/><use href="#c" x="929" y="607"/><use href="#c" x="953" y="607"/><use href="#c" x="977" y="607"/><use href="#c" x="1001" y="607"/><use href="#c" x="1025" y="607"/><use href="#c" x="1049" y="607"/><use href="#c" x="1073" y="607"/><use href="#c" x="1097" y="607"/><use href="#c" x="1121" y="607"/><use href="#g" x="441" y="592"/><use href="#c" x="223" y="512"/><use href="#c" x="247" y="512"/><use href="#c" x="271" y="512"/><use href="#c" x="295" y="512"/><use href="#c" x="319" y="512"/><use href="#c" x="343" y="512"/><use href="#c" x="367" y="512"/><use href="#c" x="391" y="512"/><use href="#c" x="415" y="512"/><use href="#c" x="439" y="512"/><use href="#c" x="463" y="512"/><use href="#c" x="487" y="512"/><use href="#c" x="511" y="512"/><use href="#c" x="535" y="512"/><use href="#c" x="559" y="512"/><use href="#c" x="583" y="512"/><use href="#c" x="607" y="512"/><use href="#c" x="631" y="512"/><use href="#c" x="655" y="512"/><use href="#c" x="679" y="512"/><use href="#c" x="703" y="512"/><use href="#c" x="727" y="512"/><use href="#c" x="751" y="512"/><use href="#c" x="775" y="512"/><use href="#c" x="799" y="512"/><use href="#c" x="823" y="512"/><use href="#c" x="847" y="512"/><use href="#c" x="871" y="512"/><use href="#c" x="895" y="512"/><use href="#c" x="349" y="441"/><use href="#c" x="373" y="441"/><use href="#c" x="397" y="441"/><use href="#c" x="421" y="441"/><use href="#c" x="445" y="441"/><use href="#c" x="469" y="441"/><use href="#c" x="493" y="441"/><use href="#c" x="517" y="441"/><use href="#c" x="541" y="441"/><use href="#c" x="565" y="441"/><use href="#c" x="589" y="441"/><use href="#c" x="613" y="441"/><use href="#c" x="637" y="441"/><use href="#g" x="349" y="441"/><use href="#c" x="591" y="417"/><use href="#c" x="615" y="417"/><use href="#c" x="639" y="417"/><use href="#c" x="663" y="417"/><use href="#c" x="687" y="417"/><use href="#c" x="604" y="417"/><use href="#c" x="651" y="442"/><use href="#c" x="574" y="170"/><use href="#c" x="574" y="194"/><use href="#c" x="574" y="218"/><use href="#c" x="574" y="242"/><use href="#c" x="574" y="266"/><use href="#c" x="574" y="290"/><use href="#c" x="574" y="314"/><use href="#c" x="574" y="338"/><use href="#c" x="574" y="362"/><use href="#c" x="574" y="386"/><use href="#c" x="574" y="410"/><use href="#c" x="574" y="434"/><use href="#c" x="574" y="458"/><use href="#c" x="574" y="482"/><use href="#c" x="574" y="506"/><use href="#c" x="574" y="530"/><use href="#c" x="574" y="554"/><use href="#c" x="574" y="578"/><use href="#c" x="574" y="602"/><use href="#c" x="574" y="625"/><use href="#c" x="574" y="649"/><use href="#c" x="574" y="673"/><use href="#c" x="574" y="697"/><use href="#c" x="574" y="721"/><use href="#c" x="543" y="241"/><use href="#c" x="543" y="265"/><use href="#c" x="543" y="289"/><use href="#c" x="543" y="313"/><use href="#c" x="543" y="337"/><use href="#c" x="543" y="361"/><use href="#c" x="543" y="385"/><use href="#c" x="543" y="409"/><use href="#c" x="543" y="433"/><use href="#c" x="543" y="457"/><use href="#c" x="543" y="481"/><use href="#c" x="543" y="505"/><use href="#c" x="543" y="529"/><use href="#c" x="543" y="553"/><use href="#c" x="543" y="577"/><use href="#c" x="543" y="601"/><use href="#c" x="543" y="625"/><use href="#c" x="543" y="649"/><use href="#c" x="543" y="673"/><use href="#c" x="543" y="696"/><use href="#c" x="543" y="720"/><use href="#c" x="508" y="269"/><use href="#c" x="508" y="293"/><use href="#c" x="508" y="317"/><use href="#c" x="508" y="341"/><use href="#c" x="508" y="365"/><use href="#c" x="508" y="389"/><use href="#c" x="508" y="413"/><use href="#c" x="481" y="665"/><use href="#c" x="481" y="689"/><use href="#c" x="481" y="713"/><use href="#v" x="490" y="680"/><use href="#c" x="548" y="675"/><use href="#g" x="607" y="527"/><use href="#g" x="600" y="567"/><rect x="532" y="497" width="11" height="15" fill="#212830" stroke="none" stroke-width="1" /><rect x="567" y="497" width="7" height="15" fill="#212830" stroke="none" stroke-width="1" /><rect x="505" y="484" width="3" height="28" fill="#212830" stroke="none" stroke-width="1" /><rect x="532" y="648" width="11" height="80" fill="#212830" stroke="none" stroke-width="1" /><rect x="567" y="680" width="7" height="48" fill="#212830" stroke="none" stroke-width="1" /><rect x="505" y="704" width="38" height="24" fill="#212830" stroke="none" stroke-width="1" /><rect x="514" y="680" width="18" height="24" fill="#212830" stroke="none" stroke-width="1" /><rect x="441" y="550" width="14" height="42" fill="#212830" stroke="none" stroke-width="1" /><rect x="600" y="648" width="61" height="32" fill="#212830" stroke="none" stroke-width="1" /><rect x="616" y="466" width="45" height="46" fill="#212830" stroke="none" stroke-width="1" /><rect x="504.5" y="179.5" width="145" height="149" fill="none" stroke="#ffffff" stroke-width="1" stroke-dasharray="4 3" /><rect x="511.5" y="182.5" width="135" height="143" fill="none" stroke="#0000ff" stroke-width="1" stroke-dasharray="4 3" /><polyline points="514.5,186 514.5,325" fill="none" stroke="#0000ff" stroke-width="1" stroke-dasharray="3 2.5"/><polyline points="515,325.5 575,325.5" fill="none" stroke="#0000ff" stroke-width="1"/><rect x="534.5" y="196.5" width="40" height="112" fill="none" stroke="#0000ff" stroke-width="1" stroke-dasharray="4 3" /><polyline points="591.5,196 591.5,308" fill="none" stroke="#0000ff" stroke-width="1"/><rect x="591.5" y="196.5" width="39" height="112" fill="none" stroke="#0000ff" stroke-width="1" stroke-dasharray="4 3" /><rect x="532.5" y="193.5" width="42" height="15" fill="none" stroke="#ff0000" stroke-width="1" stroke-dasharray="3 2" /><rect x="551.5" y="207.5" width="23" height="6" fill="none" stroke="#ff0000" stroke-width="1" stroke-dasharray="3 2" /><polyline points="542,197.5 568,197.5" fill="none" stroke="#ffff00" stroke-width="2"/><polyline points="549,202.5 557,202.5" fill="none" stroke="#ffff00" stroke-width="1"/><polyline points="553,209.5 570,209.5" fill="none" stroke="#ffff00" stroke-width="2"/><polyline points="560,187.5 580,187.5" fill="none" stroke="#00ff00" stroke-width="1.5" stroke-dasharray="1 1"/><rect x="540" y="209" width="5" height="2" fill="#ff0000" stroke="none" stroke-width="1" /><rect x="540" y="207" width="2" height="2" fill="#00ff00" stroke="none" stroke-width="1" /><rect x="537.5" y="235.5" width="33" height="57" fill="none" stroke="#ff0000" stroke-width="1" stroke-dasharray="3 2" /><rect x="540.5" y="241.5" width="26" height="50" fill="none" stroke="#ff00ff" stroke-width="1" stroke-dasharray="3 2" /><polyline points="542,242.5 566,242.5" fill="none" stroke="#ffff00" stroke-width="2"/><polyline points="550,258.5 560,258.5" fill="none" stroke="#ffff00" stroke-width="1"/><polyline points="541,282.5 566,282.5" fill="none" stroke="#ffff00" stroke-width="2"/><polyline points="548,285.5 558,285.5" fill="none" stroke="#ffff00" stroke-width="1"/><polyline points="566.5,250 566.5,270" fill="none" stroke="#ffff00" stroke-width="1" stroke-dasharray="2 3"/><rect x="594.5" y="235.5" width="33" height="59" fill="none" stroke="#ff0000" stroke-width="1" stroke-dasharray="3 2" /><rect x="597.5" y="238.5" width="26" height="53" fill="none" stroke="#ff00ff" stroke-width="1" stroke-dasharray="3 2" /><polyline points="597,244.5 622,244.5" fill="none" stroke="#ffff00" stroke-width="2"/><polyline points="608,258.5 617,258.5" fill="none" stroke="#ffff00" stroke-width="1"/><polyline points="601,279.5 619,279.5" fill="none" stroke="#ffff00" stroke-width="2"/><polyline points="608,284.5 617,284.5" fill="none" stroke="#ffff00" stroke-width="1"/><rect x="536" y="313" width="25" height="2" fill="#ffff00" stroke="none" stroke-width="1" /><rect x="544" y="316.5" width="19" height="2" fill="#ffff00" stroke="none" stroke-width="1" /><rect x="544" y="320" width="19" height="2" fill="#ffff00" stroke="none" stroke-width="1" /><rect x="509" y="243" width="3" height="3" fill="#ff00ff" stroke="none" stroke-width="1" /><rect x="539" y="296" width="6" height="2" fill="#ff0000" stroke="none" stroke-width="1" /><rect x="545" y="296" width="2" height="2" fill="#00ff00" stroke="none" stroke-width="1" /><rect x="582" y="296" width="6" height="2" fill="#ff0000" stroke="none" stroke-width="1" /><rect x="588" y="296" width="2" height="2" fill="#00ff00" stroke="none" stroke-width="1" /><rect x="574" y="178" width="24" height="1" fill="#0000ff" stroke="none" stroke-width="1" /><rect x="574" y="183" width="24" height="1" fill="#0000ff" stroke="none" stroke-width="1" /><rect x="434.5" y="356.5" width="280" height="151" fill="none" stroke="#ffffff" stroke-width="1" stroke-dasharray="4 3" /><rect x="441.5" y="359.5" width="270" height="145" fill="none" stroke="#0000ff" stroke-width="1" stroke-dasharray="4 3" /><polyline points="444.5,364 444.5,503" fill="none" stroke="#0000ff" stroke-width="1" stroke-dasharray="3 2.5"/><rect x="657" y="373.0" width="8" height="2.1" fill="#7e7e7e" stroke="none" stroke-width="1" /><rect x="666" y="373.3" width="23.15" height="1.3" fill="#7a7a7a" stroke="none" stroke-width="1" /><rect x="657" y="375.3" width="30" height="2.1" fill="#7e7e7e" stroke="none" stroke-width="1" /><rect x="688" y="375.6" width="-6.5" height="1.3" fill="#7a7a7a" stroke="none" stroke-width="1" /><rect x="657" y="377.6" width="28" height="2.1" fill="#7e7e7e" stroke="none" stroke-width="1" /><rect x="685" y="377.90000000000003" width="3.1499999999999986" height="1.3" fill="#7a7a7a" stroke="none" stroke-width="1" /><rect x="657" y="379.9" width="14" height="2.1" fill="#7e7e7e" stroke="none" stroke-width="1" /><rect x="671" y="380.2" width="9.5" height="1.3" fill="#7a7a7a" stroke="none" stroke-width="1" /><rect x="657" y="382.2" width="14" height="2.1" fill="#7e7e7e" stroke="none" stroke-width="1" /><rect x="673" y="382.5" width="9.5" height="1.3" fill="#7a7a7a" stroke="none" stroke-width="1" /><rect x="657" y="384.5" width="14" height="2.1" fill="#7e7e7e" stroke="none" stroke-width="1" /><rect x="657" y="386.8" width="30" height="2.1" fill="#7e7e7e" stroke="none" stroke-width="1" /><rect x="657" y="389.1" width="14" height="2.1" fill="#7e7e7e" stroke="none" stroke-width="1" /><rect x="671" y="389.40000000000003" width="35" height="1.3" fill="#7a7a7a" stroke="none" stroke-width="1" /><rect x="657" y="391.4" width="18" height="2.1" fill="#7e7e7e" stroke="none" stroke-width="1" /><rect x="676" y="391.7" width="13.149999999999999" height="1.3" fill="#7a7a7a" stroke="none" stroke-width="1" /><rect x="657" y="393.7" width="26" height="2.1" fill="#7e7e7e" stroke="none" stroke-width="1" /><rect x="685" y="394.0" width="-2.5" height="1.3" fill="#7a7a7a" stroke="none" stroke-width="1" /><rect x="657" y="396.0" width="22" height="2.1" fill="#7e7e7e" stroke="none" stroke-width="1" /><rect x="679" y="396.3" width="9.149999999999999" height="1.3" fill="#7a7a7a" stroke="none" stroke-width="1" /><rect x="657" y="398.3" width="28" height="2.1" fill="#7e7e7e" stroke="none" stroke-width="1" /><rect x="686" y="398.6" width="3.1499999999999986" height="1.3" fill="#7a7a7a" stroke="none" stroke-width="1" /><rect x="657" y="400.6" width="14" height="2.1" fill="#7e7e7e" stroke="none" stroke-width="1" /><rect x="673" y="400.90000000000003" width="9.5" height="1.3" fill="#7a7a7a" stroke="none" stroke-width="1" /><rect x="657" y="402.9" width="14" height="2.1" fill="#7e7e7e" stroke="none" stroke-width="1" /><rect x="690.5" y="399.5" width="18" height="19" fill="none" stroke="#0000ff" stroke-width="1" stroke-dasharray="2 2" /><rect x="693" y="402" width="3" height="2" fill="#ff0000" stroke="none" stroke-width="1" /><rect x="697" y="402" width="9" height="2" fill="#ffff00" stroke="none" stroke-width="1" /><rect x="693" y="406" width="3" height="2" fill="#ff0000" stroke="none" stroke-width="1" /><rect x="697" y="406" width="9" height="2" fill="#ffff00" stroke="none" stroke-width="1" /><rect x="693" y="410" width="3" height="2" fill="#ff0000" stroke="none" stroke-width="1" /><rect x="697" y="410" width="9" height="2" fill="#ffff00" stroke="none" stroke-width="1" /><rect x="693" y="414" width="3" height="2" fill="#ff0000" stroke="none" stroke-width="1" /><rect x="697" y="414" width="9" height="2" fill="#ffff00" stroke="none" stroke-width="1" /><polygon points="503,373 512,369 549,369 558,373" fill="#0000ff"/><rect x="501.5" y="372.5" width="56" height="4" fill="none" stroke="#ff00ff" stroke-width="1" stroke-dasharray="3 2" /><rect x="505.5" y="376.5" width="50" height="7" fill="none" stroke="#ffffff" stroke-width="1" stroke-dasharray="2 2" /><rect x="518.0" y="375" width="3" height="4" fill="#ffff00" stroke="none" stroke-width="1" /><rect x="521.6" y="375" width="3" height="4" fill="#ffff00" stroke="none" stroke-width="1" /><rect x="525.2" y="375" width="3" height="4" fill="#ffff00" stroke="none" stroke-width="1" /><rect x="528.8" y="375" width="3" height="4" fill="#ffff00" stroke="none" stroke-width="1" /><rect x="532.4" y="375" width="3" height="4" fill="#ffff00" stroke="none" stroke-width="1" /><rect x="536.0" y="375" width="3" height="4" fill="#ffff00" stroke="none" stroke-width="1" /><rect x="515" y="385" width="26" height="8" fill="#ffff00" stroke="none" stroke-width="1" /><rect x="537" y="386" width="4" height="6" fill="#808080" stroke="none" stroke-width="1" /><polyline points="515,386 519,392 523,386 527,392 531,386 535,392" fill="none" stroke="#888" stroke-width="1"/><rect x="501" y="387" width="3" height="4" fill="#ff0000" stroke="none" stroke-width="1" /><polyline points="477,386.5 501,386.5" fill="none" stroke="#0000ff" stroke-width="1" stroke-dasharray="3 2"/><polyline points="461,392.5 574,392.5" fill="none" stroke="#ffffff" stroke-width="1" stroke-dasharray="4 3"/><path d="M461 385l3 2 3-2v1l-2 2v4h-2v-4l-2-2z" fill="#ff0000"/><rect x="461" y="380" width="3" height="2" fill="#0000ff" stroke="none" stroke-width="1" /><rect x="464" y="379" width="2" height="1" fill="#ffff00" stroke="none" stroke-width="1" /><rect x="468" y="380" width="2" height="1" fill="#ffff00" stroke="none" stroke-width="1" /><rect x="472" y="380" width="3" height="2" fill="#ffff00" stroke="none" stroke-width="1" /><rect x="466" y="385" width="5" height="1" fill="#ff0000" stroke="none" stroke-width="1" /><rect x="470" y="386" width="2" height="3" fill="#ff0000" stroke="none" stroke-width="1" /><rect x="471" y="389" width="2" height="2" fill="#ffff00" stroke="none" stroke-width="1" /><rect x="461" y="392" width="3" height="3" fill="#ff0000" stroke="none" stroke-width="1" /><rect x="464" y="393" width="8" height="1" fill="#00ff00" stroke="none" stroke-width="1" /><polyline points="464,386.5 474,386.5" fill="none" stroke="#0000ff" stroke-width="1" stroke-dasharray="2 2"/><polygon points="477,411 489,406 522,406 533,411" fill="#0000ff"/><rect x="476.5" y="410.5" width="57" height="11" fill="none" stroke="#ff00ff" stroke-width="1" stroke-dasharray="3 2" /><rect x="494" y="412" width="6" height="8" fill="#ffff00" stroke="none" stroke-width="1" /><rect x="500" y="411" width="3" height="9" fill="#808080" stroke="none" stroke-width="1" /><rect x="503" y="412" width="16" height="8" fill="#ffff00" stroke="none" stroke-width="1" /><rect x="505.5" y="421.5" width="3.2" height="7" fill="none" stroke="#ff0000" stroke-width="1.1" /><rect x="510.1" y="421.5" width="3.2" height="7" fill="none" stroke="#ff0000" stroke-width="1.1" /><rect x="514.7" y="421.5" width="3.2" height="7" fill="none" stroke="#ff0000" stroke-width="1.1" /><rect x="519.3" y="421.5" width="3.2" height="7" fill="none" stroke="#ff0000" stroke-width="1.1" /><rect x="523.9" y="421.5" width="3.2" height="7" fill="none" stroke="#ff0000" stroke-width="1.1" /><polyline points="507.5,421 507.5,430" fill="none" stroke="#111" stroke-width="1"/><polyline points="516.5,421 516.5,430" fill="none" stroke="#111" stroke-width="1"/><rect x="511" y="424" width="3" height="3" fill="#ff0000" stroke="none" stroke-width="1" /><polyline points="470,429.5 575,429.5" fill="none" stroke="#ffffff" stroke-width="1" stroke-dasharray="4 3"/><polyline points="461,423.5 489,423.5" fill="none" stroke="#ffff00" stroke-width="1.5" stroke-dasharray="3 2"/><polyline points="532,423.5 558,423.5" fill="none" stroke="#ffff00" stroke-width="1.5" stroke-dasharray="3 2"/><rect x="461" y="423" width="2" height="8" fill="#ffff00" stroke="none" stroke-width="1" /><rect x="462" y="430" width="10" height="2" fill="#00ff00" stroke="none" stroke-width="1" /><rect x="566.5" y="419.5" width="7" height="10" fill="none" stroke="#0000ff" stroke-width="1.2" /><rect x="560.5" y="421.5" width="4" height="7" fill="none" stroke="#ff0000" stroke-width="1.1" /><rect x="566" y="422" width="5" height="6" fill="#ff0000" stroke="none" stroke-width="1" /><polyline points="556,423.5 566,423.5" fill="none" stroke="#ffff00" stroke-width="1" stroke-dasharray="2 2"/><polygon points="466,445 471,443 475,441 477,440 481,440 484,441 488,443 494,445" fill="#0000ff"/><rect x="464.5" y="445.5" width="30" height="18" fill="none" stroke="#ff00ff" stroke-width="1" stroke-dasharray="3 2" /><rect x="465.5" y="446.5" width="27" height="17" fill="none" stroke="#111" stroke-width="1" stroke-dasharray="1.5 3" /><rect x="469.5" y="448.5" width="6" height="4" fill="none" stroke="#ff0000" stroke-width="1" stroke-dasharray="none" /><rect x="482.5" y="448.5" width="6" height="4" fill="none" stroke="#ff0000" stroke-width="1" stroke-dasharray="none" /><rect x="467" y="455" width="11" height="8" fill="#808080" stroke="none" stroke-width="1" /><rect x="480" y="455" width="11" height="8" fill="#808080" stroke="none" stroke-width="1" /><rect x="492.5" y="452.5" width="8" height="10" fill="none" stroke="#0000ff" stroke-width="1.2" /><rect x="494" y="455" width="3" height="6" fill="#ffff00" stroke="none" stroke-width="1" /><rect x="495" y="457" width="2" height="2" fill="#ff0000" stroke="none" stroke-width="1" /><rect x="461" y="458" width="4" height="5" fill="#ff0000" stroke="none" stroke-width="1" /><rect x="459" y="460" width="2" height="2" fill="#ffff00" stroke="none" stroke-width="1" /><rect x="464" y="459" width="2" height="2" fill="#ffff00" stroke="none" stroke-width="1" /><rect x="460" y="464" width="5" height="1" fill="#00ff00" stroke="none" stroke-width="1" /><rect x="460" y="465" width="3" height="1" fill="#ff0000" stroke="none" stroke-width="1" /><polygon points="545,445 549,442 553,440 563,440 567,442 572,445" fill="#0000ff"/><polyline points="542,445.5 574,445.5" fill="none" stroke="#ff00ff" stroke-width="1.2" stroke-dasharray="3 2"/><rect x="545.5" y="446.5" width="26" height="7" fill="none" stroke="#111" stroke-width="1" stroke-dasharray="2 1" /><rect x="550" y="446" width="7" height="6" fill="#ffff00" stroke="none" stroke-width="1" /><rect x="552" y="448" width="2" height="2" fill="#8a8aff" stroke="none" stroke-width="1" /><rect x="555" y="448" width="2" height="2" fill="#8a8aff" stroke="none" stroke-width="1" /><polyline points="546,453.5 571,453.5" fill="none" stroke="#ff00ff" stroke-width="1.2" stroke-dasharray="3 2"/><rect x="536.5" y="454.5" width="36" height="9" fill="none" stroke="#111" stroke-width="1" stroke-dasharray="2 1" /><rect x="536" y="455" width="3" height="9" fill="#0000ff" stroke="none" stroke-width="1" /><rect x="537" y="457" width="3" height="3" fill="#111" stroke="none" stroke-width="1" /><rect x="540" y="455" width="2" height="8" fill="#ffff00" stroke="none" stroke-width="1" /><rect x="542" y="456" width="1" height="7" fill="#00ff00" stroke="none" stroke-width="1" /><rect x="544" y="456" width="1" height="6" fill="#00ffff" stroke="none" stroke-width="1" /><rect x="549.5" y="455.5" width="3" height="7" fill="none" stroke="#ff0000" stroke-width="1" /><rect x="554.0" y="455.5" width="3" height="7" fill="none" stroke="#ff0000" stroke-width="1" /><rect x="558.5" y="455.5" width="3" height="7" fill="none" stroke="#ff0000" stroke-width="1" /><rect x="563.0" y="455.5" width="3" height="7" fill="none" stroke="#ff0000" stroke-width="1" /><rect x="567.5" y="455.5" width="3" height="7" fill="none" stroke="#ff0000" stroke-width="1" /><polyline points="547.5,454 547.5,464" fill="none" stroke="#0000ff" stroke-width="1"/><polyline points="571.5,446 571.5,464" fill="none" stroke="#0000ff" stroke-width="1"/><polygon points="573,463 578,463 578,458 574,456" fill="#ff0000"/><rect x="575" y="459" width="1" height="2" fill="#ffff00" stroke="none" stroke-width="1" /><rect x="536" y="464" width="7" height="1" fill="#00ff00" stroke="none" stroke-width="1" /><rect x="536" y="465" width="3" height="1" fill="#ff0000" stroke="none" stroke-width="1" /><polyline points="497,474 511,469 541,469 551,473.5" fill="none" stroke="#ffff00" stroke-width="1.2" stroke-dasharray="3 2"/><polyline points="497,474 511,469 541,469 551,473.5" fill="none" stroke="#111" stroke-width="1" stroke-dasharray="1 4"/><rect x="492.5" y="473.5" width="66" height="19" fill="none" stroke="#ff0000" stroke-width="1" stroke-dasharray="3 2" /><rect x="492.5" y="473.5" width="66" height="19" fill="none" stroke="#111" stroke-width="1" stroke-dasharray="1 5" /><polyline points="497,474.5 552,474.5" fill="none" stroke="#0000ff" stroke-width="1.5" stroke-dasharray="4 1"/><polyline points="497,483.5 552,483.5" fill="none" stroke="#0000ff" stroke-width="1.5" stroke-dasharray="4 1"/><rect x="498.0" y="476" width="2" height="6" fill="#ffff00" stroke="none" stroke-width="1" /><rect x="502.5" y="476" width="2" height="6" fill="#111" stroke="none" stroke-width="1" /><rect x="507.0" y="476" width="2" height="6" fill="#ffff00" stroke="none" stroke-width="1" /><rect x="511.5" y="476" width="2" height="6" fill="#111" stroke="none" stroke-width="1" /><rect x="516.0" y="476" width="2" height="6" fill="#ffff00" stroke="none" stroke-width="1" /><rect x="520.5" y="476" width="2" height="6" fill="#111" stroke="none" stroke-width="1" /><rect x="525.0" y="476" width="2" height="6" fill="#ffff00" stroke="none" stroke-width="1" /><rect x="529.5" y="476" width="2" height="6" fill="#111" stroke="none" stroke-width="1" /><rect x="534.0" y="476" width="2" height="6" fill="#ffff00" stroke="none" stroke-width="1" /><rect x="538.5" y="476" width="2" height="6" fill="#111" stroke="none" stroke-width="1" /><rect x="543.0" y="476" width="2" height="6" fill="#ffff00" stroke="none" stroke-width="1" /><rect x="547.5" y="476" width="2" height="6" fill="#111" stroke="none" stroke-width="1" /><polyline points="523.5,475 523.5,484" fill="none" stroke="#ffff00" stroke-width="1.5"/><polyline points="540.5,475 540.5,484" fill="none" stroke="#0000ff" stroke-width="1"/><polyline points="481,484.5 558,484.5" fill="none" stroke="#00ff00" stroke-width="1" stroke-dasharray="2 3"/><polyline points="481,491.5 558,491.5" fill="none" stroke="#111" stroke-width="1" stroke-dasharray="3 2"/><polyline points="481,492.5 558,492.5" fill="none" stroke="#ffff00" stroke-width="1" stroke-dasharray="2 5"/><rect x="481" y="487" width="5" height="5" fill="#ff0000" stroke="none" stroke-width="1" /><rect x="489" y="485" width="1" height="7" fill="#0000ff" stroke="none" stroke-width="1" /><rect x="493" y="485" width="1" height="7" fill="#111" stroke="none" stroke-width="1" /><rect x="500" y="486" width="1" height="7" fill="#ff0000" stroke="none" stroke-width="1" /><rect x="505" y="485" width="1" height="7" fill="#0000ff" stroke="none" stroke-width="1" /><rect x="516" y="485" width="1" height="7" fill="#00ff00" stroke="none" stroke-width="1" /><rect x="517" y="487" width="1" height="7" fill="#00ff00" stroke="none" stroke-width="1" /><rect x="522" y="485" width="1" height="7" fill="#0000ff" stroke="none" stroke-width="1" /><rect x="531" y="486" width="1" height="7" fill="#ff0000" stroke="none" stroke-width="1" /><rect x="540" y="486" width="1" height="7" fill="#00ff00" stroke="none" stroke-width="1" /><rect x="548" y="485" width="1" height="7" fill="#111" stroke="none" stroke-width="1" /><rect x="553" y="487" width="1" height="7" fill="#ff0000" stroke="none" stroke-width="1" /><rect x="517" y="489" width="3" height="3" fill="#00ff00" stroke="none" stroke-width="1" /><rect x="529" y="490" width="4" height="2" fill="#00ff00" stroke="none" stroke-width="1" /><rect x="579.5" y="480.5" width="17" height="12" fill="none" stroke="#0000ff" stroke-width="1" stroke-dasharray="2 1" /><rect x="581" y="482" width="3" height="9" fill="#ffff00" stroke="none" stroke-width="1" /><rect x="586" y="484" width="2" height="7" fill="#111" stroke="none" stroke-width="1" /><rect x="590" y="483" width="3" height="8" fill="#ff0000" stroke="none" stroke-width="1" /><rect x="594" y="481" width="2" height="10" fill="#0000ff" stroke="none" stroke-width="1" /><rect x="565.5" y="492.5" width="15" height="4" fill="none" stroke="#ff00ff" stroke-width="1.5" /><polyline points="441,503.5 714,503.5" fill="none" stroke="#0000ff" stroke-width="1" stroke-dasharray="none"/><polyline points="441,505.5 714,505.5" fill="none" stroke="#ffffff" stroke-width="1" stroke-dasharray="4 3"/><path d="M613 442 Q626 437 639 442" stroke="#ffff00" stroke-width="2" fill="none"/><rect x="608.5" y="443.5" width="30" height="20" fill="none" stroke="#0000ff" stroke-width="1" stroke-dasharray="3 2" /><polyline points="612,462 620,450 628,455" fill="none" stroke="#00ff00" stroke-width="2"/><rect x="605" y="452" width="4" height="11" fill="#ff0000" stroke="none" stroke-width="1" /><rect x="630" y="450" width="5" height="12" fill="#ffff00" stroke="none" stroke-width="1" /><rect x="637" y="452" width="6" height="10" fill="#0000ff" stroke="none" stroke-width="1" /><rect x="611" y="455" width="4" height="7" fill="#ffff00" stroke="none" stroke-width="1" /><rect x="595.5" y="401.5" width="40" height="12" fill="none" stroke="#0000ff" stroke-width="1" stroke-dasharray="2 2" /><polyline points="595,413.5 635,413.5" fill="none" stroke="#ff0000" stroke-width="1" stroke-dasharray="2 2"/><rect x="602" y="403" width="13" height="9" fill="#808080" stroke="none" stroke-width="1" /><rect x="616" y="405" width="2" height="6" fill="#ffff00" stroke="none" stroke-width="1" /><rect x="620" y="404" width="2" height="3" fill="#ffff00" stroke="none" stroke-width="1" /><rect x="620" y="409" width="2" height="3" fill="#ffff00" stroke="none" stroke-width="1" /><rect x="624" y="405" width="3" height="6" fill="#ffff00" stroke="none" stroke-width="1" /><rect x="629" y="406" width="4" height="2" fill="#aaa" stroke="none" stroke-width="1" /><rect x="595" y="404" width="3" height="7" fill="#ff0000" stroke="none" stroke-width="1" /><rect x="598" y="406" width="2" height="3" fill="#00ff00" stroke="none" stroke-width="1" /><rect x="604.5" y="481.5" width="41" height="12" fill="none" stroke="#0000ff" stroke-width="1" stroke-dasharray="none" /><rect x="608" y="484" width="6" height="8" fill="#222" stroke="none" stroke-width="1" /><rect x="616" y="484" width="10" height="8" fill="#ff0000" stroke="none" stroke-width="1" /><rect x="620" y="486" width="6" height="4" fill="#ffff00" stroke="none" stroke-width="1" /><rect x="630" y="484" width="10" height="8" fill="#ffff00" stroke="none" stroke-width="1" /><rect x="634" y="486" width="6" height="6" fill="#00ff00" stroke="none" stroke-width="1" /><rect x="661.5" y="422.5" width="50" height="81" fill="none" stroke="#0000ff" stroke-width="1" /><polyline points="664,426.5 710,426.5" fill="none" stroke="#222" stroke-width="1"/><polyline points="664,432.5 710,432.5" fill="none" stroke="#222" stroke-width="1"/><polyline points="664,440.5 710,440.5" fill="none" stroke="#222" stroke-width="1"/><polyline points="664,447.5 710,447.5" fill="none" stroke="#0000ff" stroke-width="1"/><polyline points="668,428 670,426 672,428 674,426 676,428 678,426 680,428 682,426 684,428 686,426" fill="none" stroke="#00ff00" stroke-width="1.5"/><polyline points="668,433.5 675,433.5" fill="none" stroke="#ff0000" stroke-width="1"/><polyline points="684,433.5 700,433.5" fill="none" stroke="#ffff00" stroke-width="1" stroke-dasharray="1 1"/><polyline points="680,439.5 697,439.5" fill="none" stroke="#00ffff" stroke-width="1.5" stroke-dasharray="1 1"/><polyline points="666,443.5 672,443.5" fill="none" stroke="#ff0000" stroke-width="1"/><polyline points="680,444.5 710,444.5" fill="none" stroke="#ffff00" stroke-width="1" stroke-dasharray="2 2"/><rect x="675.5" y="447.5" width="35" height="36" fill="none" stroke="#0000ff" stroke-width="1" stroke-dasharray="3 2" /><polyline points="665,458 667,456 669,458 671,456 673,458 675,456 677,458 679,456 681,458 683,456 685,458 687,456 689,458" fill="none" stroke="#00ffff" stroke-width="1.2"/><polyline points="665,476 667,474 669,476 671,474 673,476 675,474 677,476 679,474 681,476 683,474 685,476 687,474 689,476 691,474" fill="none" stroke="#00ffff" stroke-width="1.2"/><polyline points="664,465.5 710,465.5" fill="none" stroke="#0000ff" stroke-width="1" stroke-dasharray="3 2"/><rect x="692" y="448" width="19" height="10" fill="#ffff00" stroke="none" stroke-width="1" /><rect x="693" y="462" width="17" height="4" fill="#ffff00" stroke="none" stroke-width="1" /><rect x="694" y="469" width="16" height="5" fill="#ffff00" stroke="none" stroke-width="1" /><rect x="694" y="478" width="16" height="5" fill="#ffff00" stroke="none" stroke-width="1" /><rect x="435.5" y="531.5" width="279" height="149" fill="none" stroke="#ffffff" stroke-width="1" stroke-dasharray="4 3" /><rect x="444.5" y="533.5" width="267" height="144" fill="none" stroke="#0000ff" stroke-width="1" stroke-dasharray="4 3" /><polyline points="444,534.5 714,534.5" fill="none" stroke="#0000ff" stroke-width="1"/><polyline points="435,531.5 714,531.5" fill="none" stroke="#111" stroke-width="1" stroke-dasharray="2 3"/><polyline points="445.5,538 445.5,677" fill="none" stroke="#0000ff" stroke-width="1" stroke-dasharray="3 2.5"/><rect x="455.5" y="546.5" width="55" height="114" fill="none" stroke="#ff0000" stroke-width="1" stroke-dasharray="3 2" /><rect x="459.5" y="550.5" width="47" height="106" fill="none" stroke="#222" stroke-width="1" stroke-dasharray="2 2" /><rect x="462" y="549" width="2" height="9" fill="#ff0000" stroke="none" stroke-width="1" /><rect x="467" y="549" width="2" height="9" fill="#ffff00" stroke="none" stroke-width="1" /><rect x="472" y="549" width="2" height="9" fill="#222" stroke="none" stroke-width="1" /><rect x="477" y="549" width="2" height="9" fill="#ff0000" stroke="none" stroke-width="1" /><rect x="482" y="549" width="2" height="9" fill="#ffff00" stroke="none" stroke-width="1" /><rect x="487" y="549" width="2" height="9" fill="#ff0000" stroke="none" stroke-width="1" /><rect x="492" y="549" width="2" height="9" fill="#222" stroke="none" stroke-width="1" /><rect x="497" y="549" width="2" height="9" fill="#ffff00" stroke="none" stroke-width="1" /><rect x="461" y="549" width="44" height="1" fill="#ff0000" stroke="none" stroke-width="1" /><rect x="461" y="557" width="44" height="1" fill="#ff0000" stroke="none" stroke-width="1" /><rect x="473.5" y="565.5" width="18" height="9" fill="none" stroke="#00ffff" stroke-width="1" rx="2"/><rect x="476" y="569" width="10" height="2" fill="#ffff00" stroke="none" stroke-width="1" /><rect x="472" y="579" width="22" height="7" fill="#00ff00" stroke="none" stroke-width="1" /><rect x="497" y="572" width="8" height="43" fill="#00ff00" stroke="none" stroke-width="1" /><polyline points="505.5,560 505.5,660" fill="none" stroke="#0000ff" stroke-width="1"/><rect x="467.5" y="588.5" width="27" height="40" fill="none" stroke="#0000ff" stroke-width="1" stroke-dasharray="none" /><rect x="470.5" y="592.5" width="20" height="33" fill="none" stroke="#ff0000" stroke-width="1" stroke-dasharray="2 2" /><rect x="475" y="598" width="6" height="2" fill="#ff0000" stroke="none" stroke-width="1" /><rect x="483" y="604" width="8" height="2" fill="#ffff00" stroke="none" stroke-width="1" /><rect x="478" y="612" width="3" height="8" fill="#ff0000" stroke="none" stroke-width="1" /><rect x="486" y="618" width="5" height="2" fill="#ffff00" stroke="none" stroke-width="1" /><rect x="472" y="622" width="14" height="2" fill="#0000ff" stroke="none" stroke-width="1" /><rect x="480" y="606" width="2" height="10" fill="#222" stroke="none" stroke-width="1" /><rect x="486" y="596" width="3" height="4" fill="#ffff00" stroke="none" stroke-width="1" /><rect x="490" y="610" width="2" height="6" fill="#ff0000" stroke="none" stroke-width="1" /><rect x="476" y="620" width="4" height="2" fill="#00ff00" stroke="none" stroke-width="1" /><rect x="473" y="608" width="6" height="2" fill="#ffff00" stroke="none" stroke-width="1" /><rect x="484" y="600" width="2" height="8" fill="#222" stroke="none" stroke-width="1" /><rect x="462.5" y="628.5" width="42" height="32" fill="none" stroke="#222" stroke-width="1" stroke-dasharray="2 2" /><rect x="466" y="630" width="4" height="30" fill="#00ff00" stroke="none" stroke-width="1" /><rect x="496" y="630" width="4" height="25" fill="#00ff00" stroke="none" stroke-width="1" /><rect x="470" y="650" width="4" height="8" fill="#ffff00" stroke="none" stroke-width="1" /><polyline points="510.5,547 510.5,660" fill="none" stroke="#ff0000" stroke-width="1" stroke-dasharray="3 2"/><rect x="459" y="664" width="8" height="3" fill="#ff0000" stroke="none" stroke-width="1" /><rect x="467" y="664" width="6" height="2" fill="#00ff00" stroke="none" stroke-width="1" /><rect x="470" y="667" width="30" height="2" fill="#ffff00" stroke="none" stroke-width="1" /><rect x="455" y="560" width="3" height="30" fill="#212830" stroke="none" stroke-width="1" /><rect x="530.5" y="546.5" width="44" height="114" fill="none" stroke="#ffff00" stroke-width="1" stroke-dasharray="3 2" /><rect x="531.5" y="547.5" width="42" height="112" fill="none" stroke="#111" stroke-width="1" stroke-dasharray="2 4" /><rect x="533" y="547" width="40" height="3" fill="#0000ff" stroke="none" stroke-width="1" /><rect x="533" y="550" width="40" height="3" fill="#111" stroke="none" stroke-width="1" /><rect x="533" y="553" width="40" height="4" fill="#0000ff" stroke="none" stroke-width="1" /><rect x="533" y="557" width="40" height="3" fill="#111" stroke="none" stroke-width="1" /><rect x="541.5" y="566.5" width="18" height="9" fill="none" stroke="#00ffff" stroke-width="1" rx="2"/><rect x="539" y="579" width="23" height="6" fill="#00ff00" stroke="none" stroke-width="1" /><rect x="563" y="572" width="9" height="43" fill="#00ff00" stroke="none" stroke-width="1" /><rect x="531.5" y="589.5" width="44" height="54" fill="none" stroke="#ff0000" stroke-width="1" stroke-dasharray="3 2" /><rect x="538.5" y="590.5" width="26" height="53" fill="none" stroke="#0000ff" stroke-width="1" stroke-dasharray="none" /><rect x="540" y="595" width="6" height="3" fill="#ff0000" stroke="none" stroke-width="1" /><rect x="546" y="600" width="10" height="3" fill="#ffff00" stroke="none" stroke-width="1" /><rect x="541" y="606" width="3" height="10" fill="#ff0000" stroke="none" stroke-width="1" /><rect x="552" y="612" width="6" height="3" fill="#ffff00" stroke="none" stroke-width="1" /><rect x="540" y="620" width="14" height="2" fill="#0000ff" stroke="none" stroke-width="1" /><rect x="556" y="598" width="2" height="8" fill="#ff0000" stroke="none" stroke-width="1" /><rect x="548" y="618" width="4" height="4" fill="#ffff00" stroke="none" stroke-width="1" /><rect x="544" y="626" width="8" height="2" fill="#ff0000" stroke="none" stroke-width="1" /><rect x="550" y="630" width="6" height="2" fill="#ffff00" stroke="none" stroke-width="1" /><rect x="542" y="634" width="4" height="3" fill="#ff0000" stroke="none" stroke-width="1" /><rect x="558" y="622" width="3" height="6" fill="#ffff00" stroke="none" stroke-width="1" /><rect x="530" y="590" width="3" height="3" fill="#ffff00" stroke="none" stroke-width="1" /><rect x="530" y="595" width="3" height="3" fill="#ffff00" stroke="none" stroke-width="1" /><rect x="530" y="600" width="3" height="3" fill="#ffff00" stroke="none" stroke-width="1" /><rect x="530" y="605" width="3" height="3" fill="#ffff00" stroke="none" stroke-width="1" /><rect x="530" y="610" width="3" height="3" fill="#ffff00" stroke="none" stroke-width="1" /><rect x="530" y="615" width="3" height="3" fill="#ffff00" stroke="none" stroke-width="1" /><rect x="530" y="620" width="3" height="3" fill="#ffff00" stroke="none" stroke-width="1" /><rect x="530" y="625" width="3" height="3" fill="#ffff00" stroke="none" stroke-width="1" /><rect x="530" y="630" width="3" height="3" fill="#ffff00" stroke="none" stroke-width="1" /><rect x="530" y="635" width="3" height="3" fill="#ffff00" stroke="none" stroke-width="1" /><rect x="564" y="625" width="3" height="25" fill="#00ff00" stroke="none" stroke-width="1" /><rect x="533" y="666" width="8" height="2" fill="#00ff00" stroke="none" stroke-width="1" /><rect x="544" y="668" width="28" height="2" fill="#ffff00" stroke="none" stroke-width="1" /><rect x="600.5" y="545.5" width="41" height="115" fill="none" stroke="#ffff00" stroke-width="1" stroke-dasharray="3 2" /><rect x="601" y="547" width="39" height="2" fill="#0000ff" stroke="none" stroke-width="1" /><rect x="601" y="549" width="39" height="3" fill="#222" stroke="none" stroke-width="1" /><rect x="601" y="552" width="39" height="2" fill="#0000ff" stroke="none" stroke-width="1" /><rect x="601" y="554" width="39" height="3" fill="#222" stroke="none" stroke-width="1" /><path d="M601 557h39v2c0 1-1 2-2 2h-35c-1 0-2-1-2-2z" fill="#0000ff"/><polyline points="600.5,561 600.5,660" fill="none" stroke="#ffff00" stroke-width="1.5" stroke-dasharray="3 2"/><polyline points="640.5,561 640.5,660" fill="none" stroke="#ffff00" stroke-width="1.5" stroke-dasharray="3 2"/><polyline points="600.5,561 600.5,660" fill="none" stroke="#111" stroke-width="1.5" stroke-dasharray="1 4"/><polyline points="640.5,561 640.5,660" fill="none" stroke="#111" stroke-width="1.5" stroke-dasharray="1 4"/><rect x="604" y="587" width="30" height="57" fill="#0000ff" stroke="none" stroke-width="1" /><path d="M607 590 L619 600 L631 590 M607 641 L619 631 L631 641 M611 597 V634 M627 597 V634" stroke="#222630" stroke-width="2" fill="none"/><rect x="604.5" y="587.5" width="30" height="57" fill="none" stroke="#ffff00" stroke-width="1" stroke-dasharray="2 2" /><polyline points="600,660.5 641,660.5" fill="none" stroke="#ffff00" stroke-width="1" stroke-dasharray="3 2"/><rect x="602" y="665" width="5" height="2" fill="#ff0000" stroke="none" stroke-width="1" /><rect x="607" y="665" width="6" height="1" fill="#00ff00" stroke="none" stroke-width="1" /><rect x="615" y="665" width="27" height="2" fill="#ffff00" stroke="none" stroke-width="1" /><rect x="659" y="545.0" width="8" height="2.1" fill="#7e7e7e" stroke="none" stroke-width="1" /><rect x="668" y="545.3" width="40" height="1.3" fill="#7a7a7a" stroke="none" stroke-width="1" /><rect x="659" y="547.3" width="26" height="2.1" fill="#7e7e7e" stroke="none" stroke-width="1" /><rect x="686" y="547.5999999999999" width="22" height="1.3" fill="#7a7a7a" stroke="none" stroke-width="1" /><rect x="659" y="549.6" width="22" height="2.1" fill="#7e7e7e" stroke="none" stroke-width="1" /><rect x="683" y="549.9" width="8.5" height="1.3" fill="#7a7a7a" stroke="none" stroke-width="1" /><rect x="659" y="551.9" width="18" height="2.1" fill="#7e7e7e" stroke="none" stroke-width="1" /><rect x="679" y="552.1999999999999" width="20.0" height="1.3" fill="#7a7a7a" stroke="none" stroke-width="1" /><rect x="659" y="554.2" width="26" height="2.1" fill="#7e7e7e" stroke="none" stroke-width="1" /><rect x="659" y="556.5" width="30" height="2.1" fill="#7e7e7e" stroke="none" stroke-width="1" /><rect x="689" y="556.8" width="-7.0" height="1.3" fill="#7a7a7a" stroke="none" stroke-width="1" /><rect x="659" y="558.8" width="28" height="2.1" fill="#7e7e7e" stroke="none" stroke-width="1" /><rect x="687" y="559.0999999999999" width="10.0" height="1.3" fill="#7a7a7a" stroke="none" stroke-width="1" /><rect x="659" y="561.1" width="26" height="2.1" fill="#7e7e7e" stroke="none" stroke-width="1" /><rect x="687" y="561.4" width="-3.0" height="1.3" fill="#7a7a7a" stroke="none" stroke-width="1" /><rect x="659" y="563.4" width="28" height="2.1" fill="#7e7e7e" stroke="none" stroke-width="1" /><rect x="659" y="565.7" width="22" height="2.1" fill="#7e7e7e" stroke="none" stroke-width="1" /><rect x="683" y="566.0" width="16.0" height="1.3" fill="#7a7a7a" stroke="none" stroke-width="1" /><rect x="659" y="568.0" width="26" height="2.1" fill="#7e7e7e" stroke="none" stroke-width="1" /><rect x="685" y="568.3" width="22" height="1.3" fill="#7a7a7a" stroke="none" stroke-width="1" /><rect x="659" y="570.3" width="14" height="2.1" fill="#7e7e7e" stroke="none" stroke-width="1" /><rect x="659" y="572.6" width="26" height="2.1" fill="#7e7e7e" stroke="none" stroke-width="1" /><rect x="659" y="574.9" width="14" height="2.1" fill="#7e7e7e" stroke="none" stroke-width="1" /><rect x="675" y="575.1999999999999" width="24.0" height="1.3" fill="#7a7a7a" stroke="none" stroke-width="1" /><rect x="690.5" y="572.5" width="17" height="20" fill="none" stroke="#0000ff" stroke-width="1" stroke-dasharray="2 2" /><rect x="693" y="575" width="3" height="2" fill="#ff0000" stroke="none" stroke-width="1" /><rect x="697" y="575" width="9" height="2" fill="#ffff00" stroke="none" stroke-width="1" /><rect x="693" y="579" width="3" height="2" fill="#ff0000" stroke="none" stroke-width="1" /><rect x="697" y="579" width="9" height="2" fill="#ffff00" stroke="none" stroke-width="1" /><rect x="693" y="583" width="3" height="2" fill="#ff0000" stroke="none" stroke-width="1" /><rect x="697" y="583" width="9" height="2" fill="#ffff00" stroke="none" stroke-width="1" /><rect x="693" y="587" width="3" height="2" fill="#ff0000" stroke="none" stroke-width="1" /><rect x="697" y="587" width="9" height="2" fill="#ffff00" stroke="none" stroke-width="1" /><rect x="662.5" y="596.5" width="51" height="83" fill="none" stroke="#0000ff" stroke-width="1" /><polyline points="664,603.5 712,603.5" fill="none" stroke="#0000ff" stroke-width="1" stroke-dasharray="2 2"/><polyline points="668,604 672,602 676,604" fill="none" stroke="#00ff00" stroke-width="1.5"/><rect x="705" y="599" width="5" height="5" fill="#00ff00" stroke="none" stroke-width="1" /><rect x="664.5" y="605.5" width="47" height="31" fill="none" stroke="#0000ff" stroke-width="1" stroke-dasharray="none" /><polyline points="666,610.5 672,610.5" fill="none" stroke="#ff0000" stroke-width="1"/><polyline points="676,610.5 692,610.5" fill="none" stroke="#ffff00" stroke-width="1.2" stroke-dasharray="1 1"/><polyline points="666,614.5 672,614.5" fill="none" stroke="#ff0000" stroke-width="1"/><polyline points="676,614.5 695,614.5" fill="none" stroke="#00ffff" stroke-width="1.5" stroke-dasharray="1 1"/><polyline points="690,617.5 710,617.5" fill="none" stroke="#222" stroke-width="1" stroke-dasharray="2 2"/><rect x="666" y="622" width="26" height="17" fill="#ffff00" stroke="none" stroke-width="1" /><rect x="668" y="624" width="22" height="13" fill="#ebebeb" stroke="none" stroke-width="1" /><rect x="672" y="626" width="10" height="6" fill="#ff0000" stroke="none" stroke-width="1" /><rect x="682" y="627" width="6" height="5" fill="#222" stroke="none" stroke-width="1" /><rect x="669" y="633" width="18" height="3" fill="#ff0000" stroke="none" stroke-width="1" /><rect x="693" y="622" width="18" height="9" fill="#ffff00" stroke="none" stroke-width="1" /><rect x="694" y="635" width="16" height="3" fill="#ffff00" stroke="none" stroke-width="1" /><rect x="694" y="643" width="16" height="4" fill="#ffff00" stroke="none" stroke-width="1" /><rect x="694" y="652" width="16" height="4" fill="#ffff00" stroke="none" stroke-width="1" /><rect x="666" y="642" width="3" height="3" fill="#00ffff" stroke="none" stroke-width="1" /><rect x="671" y="642" width="3" height="3" fill="#00ffff" stroke="none" stroke-width="1" /><rect x="676" y="642" width="3" height="3" fill="#00ffff" stroke="none" stroke-width="1" /><rect x="681" y="642" width="3" height="3" fill="#00ffff" stroke="none" stroke-width="1" /><rect x="686" y="642" width="3" height="3" fill="#00ffff" stroke="none" stroke-width="1" /><rect x="691" y="642" width="3" height="3" fill="#00ffff" stroke="none" stroke-width="1" /><rect x="696" y="642" width="3" height="3" fill="#00ffff" stroke="none" stroke-width="1" /><rect x="701" y="642" width="3" height="3" fill="#00ffff" stroke="none" stroke-width="1" /><rect x="706" y="642" width="3" height="3" fill="#00ffff" stroke="none" stroke-width="1" /><rect x="667" y="648" width="4" height="7" fill="#ff0000" stroke="none" stroke-width="1" /><rect x="668" y="650" width="2" height="3" fill="#ffff00" stroke="none" stroke-width="1" /><rect x="672" y="648" width="4" height="7" fill="#ff0000" stroke="none" stroke-width="1" /><rect x="673" y="650" width="2" height="3" fill="#ffff00" stroke="none" stroke-width="1" /><rect x="677" y="648" width="4" height="7" fill="#ff0000" stroke="none" stroke-width="1" /><rect x="678" y="650" width="2" height="3" fill="#ffff00" stroke="none" stroke-width="1" /><rect x="682" y="648" width="4" height="7" fill="#ff0000" stroke="none" stroke-width="1" /><rect x="683" y="650" width="2" height="3" fill="#ffff00" stroke="none" stroke-width="1" /><rect x="687" y="648" width="4" height="7" fill="#ff0000" stroke="none" stroke-width="1" /><rect x="688" y="650" width="2" height="3" fill="#ffff00" stroke="none" stroke-width="1" /><rect x="664.5" y="658.5" width="47" height="19" fill="none" stroke="#0000ff" stroke-width="1" stroke-dasharray="3 2" /><rect x="500" y="646" width="1" height="5" fill="#ff00ff" stroke="none" stroke-width="1" /><rect x="500" y="579" width="1" height="5" fill="#00ffff" stroke="none" stroke-width="1" /><rect x="497" y="569" width="2" height="1" fill="#000000" stroke="none" stroke-width="1" /><rect x="498" y="629" width="5" height="1" fill="#00ffff" stroke="none" stroke-width="1" /><rect x="490" y="622" width="2" height="1" fill="#ff00ff" stroke="none" stroke-width="1" /><rect x="461" y="564" width="1" height="6" fill="#00ffff" stroke="none" stroke-width="1" /><rect x="496" y="593" width="1" height="3" fill="#ff0000" stroke="none" stroke-width="1" /><rect x="469" y="589" width="2" height="1" fill="#00ffff" stroke="none" stroke-width="1" /><rect x="490" y="601" width="1" height="2" fill="#ff00ff" stroke="none" stroke-width="1" /><rect x="473" y="583" width="2" height="1" fill="#ff0000" stroke="none" stroke-width="1" /><rect x="496" y="600" width="1" height="5" fill="#000000" stroke="none" stroke-width="1" /><rect x="505" y="645" width="3" height="1" fill="#ffff00" stroke="none" stroke-width="1" /><rect x="481" y="658" width="2" height="1" fill="#ff0000" stroke="none" stroke-width="1" /><rect x="489" y="638" width="2" height="1" fill="#000000" stroke="none" stroke-width="1" /><rect x="474" y="656" width="1" height="2" fill="#ff0000" stroke="none" stroke-width="1" /><rect x="470" y="570" width="5" height="1" fill="#0000ff" stroke="none" stroke-width="1" /><rect x="491" y="579" width="1" height="3" fill="#0000ff" stroke="none" stroke-width="1" /><rect x="490" y="572" width="3" height="1" fill="#00ff00" stroke="none" stroke-width="1" /><rect x="471" y="657" width="1" height="4" fill="#ff0000" stroke="none" stroke-width="1" /><rect x="468" y="599" width="1" height="6" fill="#ff0000" stroke="none" stroke-width="1" /><rect x="460" y="575" width="2" height="1" fill="#ffff00" stroke="none" stroke-width="1" /><rect x="474" y="590" width="2" height="1" fill="#000000" stroke="none" stroke-width="1" /><rect x="487" y="584" width="1" height="4" fill="#000000" stroke="none" stroke-width="1" /><rect x="480" y="656" width="6" height="1" fill="#000000" stroke="none" stroke-width="1" /><rect x="500" y="578" width="3" height="1" fill="#0000ff" stroke="none" stroke-width="1" /><rect x="470" y="579" width="1" height="6" fill="#000000" stroke="none" stroke-width="1" /><rect x="492" y="599" width="2" height="1" fill="#000000" stroke="none" stroke-width="1" /><rect x="460" y="571" width="1" height="4" fill="#00ff00" stroke="none" stroke-width="1" /><rect x="494" y="599" width="6" height="1" fill="#000000" stroke="none" stroke-width="1" /><rect x="472" y="578" width="1" height="2" fill="#ff00ff" stroke="none" stroke-width="1" /><rect x="469" y="616" width="1" height="6" fill="#0000ff" stroke="none" stroke-width="1" /><rect x="472" y="652" width="2" height="1" fill="#ffff00" stroke="none" stroke-width="1" /><rect x="471" y="605" width="3" height="1" fill="#ffff00" stroke="none" stroke-width="1" /><rect x="476" y="617" width="4" height="1" fill="#ff0000" stroke="none" stroke-width="1" /><rect x="502" y="658" width="1" height="6" fill="#0000ff" stroke="none" stroke-width="1" /><rect x="504" y="619" width="1" height="5" fill="#000000" stroke="none" stroke-width="1" /><rect x="492" y="656" width="2" height="1" fill="#ffff00" stroke="none" stroke-width="1" /><rect x="461" y="591" width="2" height="1" fill="#ff00ff" stroke="none" stroke-width="1" /><rect x="480" y="597" width="3" height="1" fill="#ffff00" stroke="none" stroke-width="1" /><rect x="475" y="629" width="1" height="5" fill="#ffff00" stroke="none" stroke-width="1" /><rect x="500" y="617" width="1" height="5" fill="#ff0000" stroke="none" stroke-width="1" /><rect x="487" y="621" width="2" height="1" fill="#00ff00" stroke="none" stroke-width="1" /><rect x="501" y="633" width="6" height="1" fill="#ff0000" stroke="none" stroke-width="1" /><rect x="480" y="644" width="6" height="1" fill="#ff00ff" stroke="none" stroke-width="1" /><rect x="473" y="569" width="2" height="1" fill="#ff0000" stroke="none" stroke-width="1" /><rect x="496" y="626" width="2" height="1" fill="#ff00ff" stroke="none" stroke-width="1" /><rect x="473" y="628" width="3" height="1" fill="#ffff00" stroke="none" stroke-width="1" /><rect x="490" y="604" width="1" height="4" fill="#ffff00" stroke="none" stroke-width="1" /><rect x="491" y="580" width="3" height="1" fill="#00ff00" stroke="none" stroke-width="1" /><rect x="477" y="618" width="3" height="1" fill="#000000" stroke="none" stroke-width="1" /><rect x="482" y="644" width="1" height="2" fill="#0000ff" stroke="none" stroke-width="1" /><rect x="498" y="571" width="3" height="1" fill="#ff0000" stroke="none" stroke-width="1" /><rect x="477" y="612" width="1" height="6" fill="#00ff00" stroke="none" stroke-width="1" /><rect x="474" y="643" width="6" height="1" fill="#ff00ff" stroke="none" stroke-width="1" /><rect x="491" y="588" width="6" height="1" fill="#ff0000" stroke="none" stroke-width="1" /><rect x="489" y="601" width="4" height="1" fill="#ff0000" stroke="none" stroke-width="1" /><rect x="496" y="640" width="1" height="2" fill="#000000" stroke="none" stroke-width="1" /><rect x="463" y="614" width="1" height="4" fill="#ff00ff" stroke="none" stroke-width="1" /><rect x="492" y="580" width="3" height="1" fill="#ffff00" stroke="none" stroke-width="1" /><rect x="495" y="613" width="3" height="1" fill="#ff0000" stroke="none" stroke-width="1" /><rect x="496" y="614" width="1" height="6" fill="#ff0000" stroke="none" stroke-width="1" /><rect x="507" y="576" width="1" height="3" fill="#000000" stroke="none" stroke-width="1" /><rect x="478" y="649" width="5" height="1" fill="#ffff00" stroke="none" stroke-width="1" /><rect x="468" y="649" width="6" height="1" fill="#ff00ff" stroke="none" stroke-width="1" /><rect x="490" y="610" width="1" height="4" fill="#000000" stroke="none" stroke-width="1" /><rect x="474" y="658" width="2" height="1" fill="#ff00ff" stroke="none" stroke-width="1" /><rect x="470" y="599" width="4" height="1" fill="#000000" stroke="none" stroke-width="1" /><rect x="506" y="653" width="2" height="1" fill="#00ffff" stroke="none" stroke-width="1" /><rect x="483" y="564" width="5" height="1" fill="#ffff00" stroke="none" stroke-width="1" /><rect x="482" y="563" width="1" height="2" fill="#ff0000" stroke="none" stroke-width="1" /><rect x="497" y="577" width="3" height="1" fill="#00ff00" stroke="none" stroke-width="1" /><rect x="465" y="612" width="1" height="5" fill="#ff00ff" stroke="none" stroke-width="1" /><rect x="486" y="629" width="1" height="5" fill="#ff00ff" stroke="none" stroke-width="1" /><rect x="485" y="643" width="1" height="3" fill="#00ffff" stroke="none" stroke-width="1" /><rect x="483" y="651" width="5" height="1" fill="#00ffff" stroke="none" stroke-width="1" /><rect x="468" y="645" width="1" height="6" fill="#000000" stroke="none" stroke-width="1" /><rect x="486" y="580" width="1" height="6" fill="#ff0000" stroke="none" stroke-width="1" /><rect x="488" y="563" width="1" height="6" fill="#ff0000" stroke="none" stroke-width="1" /><rect x="485" y="659" width="2" height="1" fill="#00ff00" stroke="none" stroke-width="1" /><rect x="461" y="614" width="5" height="1" fill="#0000ff" stroke="none" stroke-width="1" /><rect x="470" y="609" width="5" height="1" fill="#ff0000" stroke="none" stroke-width="1" /><rect x="474" y="579" width="1" height="4" fill="#00ffff" stroke="none" stroke-width="1" /><rect x="492" y="658" width="3" height="1" fill="#0000ff" stroke="none" stroke-width="1" /><rect x="459" y="588" width="1" height="3" fill="#000000" stroke="none" stroke-width="1" /><rect x="482" y="610" width="1" height="6" fill="#000000" stroke="none" stroke-width="1" /><rect x="470" y="580" width="1" height="5" fill="#000000" stroke="none" stroke-width="1" /><rect x="476" y="601" width="1" height="3" fill="#ff0000" stroke="none" stroke-width="1" /><rect x="468" y="623" width="1" height="6" fill="#00ffff" stroke="none" stroke-width="1" /><rect x="500" y="621" width="1" height="3" fill="#000000" stroke="none" stroke-width="1" /><rect x="502" y="592" width="3" height="1" fill="#ffff00" stroke="none" stroke-width="1" /><rect x="496" y="579" width="3" height="1" fill="#000000" stroke="none" stroke-width="1" /><rect x="494" y="586" width="5" height="1" fill="#0000ff" stroke="none" stroke-width="1" /><rect x="497" y="573" width="2" height="1" fill="#00ffff" stroke="none" stroke-width="1" /><rect x="468" y="628" width="1" height="4" fill="#ffff00" stroke="none" stroke-width="1" /><rect x="493" y="623" width="3" height="1" fill="#ffff00" stroke="none" stroke-width="1" /><rect x="482" y="562" width="1" height="6" fill="#ffff00" stroke="none" stroke-width="1" /><rect x="502" y="608" width="2" height="1" fill="#00ffff" stroke="none" stroke-width="1" /><rect x="466" y="576" width="2" height="1" fill="#000000" stroke="none" stroke-width="1" /><rect x="461" y="655" width="2" height="1" fill="#000000" stroke="none" stroke-width="1" /><rect x="477" y="603" width="3" height="1" fill="#ffff00" stroke="none" stroke-width="1" /><rect x="476" y="623" width="3" height="1" fill="#000000" stroke="none" stroke-width="1" /><rect x="478" y="596" width="3" height="1" fill="#0000ff" stroke="none" stroke-width="1" /><rect x="466" y="611" width="2" height="1" fill="#000000" stroke="none" stroke-width="1" /><rect x="486" y="579" width="1" height="4" fill="#00ff00" stroke="none" stroke-width="1" /><rect x="472" y="572" width="1" height="3" fill="#ff0000" stroke="none" stroke-width="1" /><rect x="465" y="593" width="1" height="4" fill="#00ff00" stroke="none" stroke-width="1" /><rect x="495" y="601" width="1" height="2" fill="#00ff00" stroke="none" stroke-width="1" /><rect x="473" y="570" width="1" height="6" fill="#ffff00" stroke="none" stroke-width="1" /><rect x="469" y="654" width="1" height="4" fill="#ff0000" stroke="none" stroke-width="1" /><rect x="490" y="617" width="1" height="5" fill="#000000" stroke="none" stroke-width="1" /><rect x="507" y="624" width="1" height="5" fill="#00ffff" stroke="none" stroke-width="1" /><rect x="459" y="622" width="1" height="4" fill="#000000" stroke="none" stroke-width="1" /><rect x="478" y="565" width="5" height="1" fill="#ff00ff" stroke="none" stroke-width="1" /><rect x="463" y="585" width="1" height="6" fill="#ff0000" stroke="none" stroke-width="1" /><rect x="483" y="657" width="1" height="2" fill="#00ffff" stroke="none" stroke-width="1" /><rect x="498" y="568" width="1" height="2" fill="#ff00ff" stroke="none" stroke-width="1" /><rect x="504" y="576" width="3" height="1" fill="#00ff00" stroke="none" stroke-width="1" /><rect x="485" y="620" width="5" height="1" fill="#ff00ff" stroke="none" stroke-width="1" /><rect x="472" y="600" width="6" height="1" fill="#00ff00" stroke="none" stroke-width="1" /><rect x="482" y="587" width="1" height="4" fill="#ff0000" stroke="none" stroke-width="1" /><rect x="533" y="586" width="3" height="1" fill="#ff0000" stroke="none" stroke-width="1" /><rect x="564" y="600" width="1" height="5" fill="#00ff00" stroke="none" stroke-width="1" /><rect x="556" y="633" width="3" height="1" fill="#ff0000" stroke="none" stroke-width="1" /><rect x="562" y="587" width="1" height="2" fill="#00ff00" stroke="none" stroke-width="1" /><rect x="536" y="641" width="1" height="3" fill="#00ffff" stroke="none" stroke-width="1" /><rect x="557" y="573" width="1" height="5" fill="#000000" stroke="none" stroke-width="1" /><rect x="541" y="567" width="1" height="2" fill="#ffff00" stroke="none" stroke-width="1" /><rect x="551" y="627" width="4" height="1" fill="#ffff00" stroke="none" stroke-width="1" /><rect x="561" y="598" width="1" height="3" fill="#000000" stroke="none" stroke-width="1" /><rect x="563" y="585" width="4" height="1" fill="#ff0000" stroke="none" stroke-width="1" /><rect x="558" y="597" width="6" height="1" fill="#00ffff" stroke="none" stroke-width="1" /><rect x="540" y="589" width="3" height="1" fill="#000000" stroke="none" stroke-width="1" /><rect x="573" y="652" width="1" height="2" fill="#00ffff" stroke="none" stroke-width="1" /><rect x="532" y="587" width="2" height="1" fill="#ff0000" stroke="none" stroke-width="1" /><rect x="541" y="589" width="1" height="3" fill="#ffff00" stroke="none" stroke-width="1" /><rect x="542" y="658" width="4" height="1" fill="#00ffff" stroke="none" stroke-width="1" /><rect x="546" y="610" width="2" height="1" fill="#000000" stroke="none" stroke-width="1" /><rect x="551" y="643" width="1" height="3" fill="#ffff00" stroke="none" stroke-width="1" /><rect x="550" y="587" width="1" height="4" fill="#ff00ff" stroke="none" stroke-width="1" /><rect x="559" y="659" width="6" height="1" fill="#0000ff" stroke="none" stroke-width="1" /><rect x="550" y="598" width="4" height="1" fill="#0000ff" stroke="none" stroke-width="1" /><rect x="555" y="604" width="1" height="5" fill="#ffff00" stroke="none" stroke-width="1" /><rect x="567" y="563" width="6" height="1" fill="#ff0000" stroke="none" stroke-width="1" /><rect x="561" y="610" width="1" height="4" fill="#ffff00" stroke="none" stroke-width="1" /><rect x="569" y="583" width="1" height="4" fill="#ff0000" stroke="none" stroke-width="1" /><rect x="570" y="594" width="6" height="1" fill="#ffff00" stroke="none" stroke-width="1" /><rect x="550" y="641" width="4" height="1" fill="#ff0000" stroke="none" stroke-width="1" /><rect x="549" y="654" width="1" height="3" fill="#000000" stroke="none" stroke-width="1" /><rect x="547" y="598" width="5" height="1" fill="#ffff00" stroke="none" stroke-width="1" /><rect x="548" y="581" width="1" height="5" fill="#000000" stroke="none" stroke-width="1" /><rect x="539" y="620" width="2" height="1" fill="#00ffff" stroke="none" stroke-width="1" /><rect x="569" y="590" width="6" height="1" fill="#ff00ff" stroke="none" stroke-width="1" /><rect x="555" y="618" width="1" height="5" fill="#ff0000" stroke="none" stroke-width="1" /><rect x="556" y="592" width="1" height="4" fill="#ffff00" stroke="none" stroke-width="1" /><rect x="543" y="572" width="2" height="1" fill="#ffff00" stroke="none" stroke-width="1" /><rect x="536" y="642" width="3" height="1" fill="#0000ff" stroke="none" stroke-width="1" /><rect x="564" y="613" width="1" height="5" fill="#ff00ff" stroke="none" stroke-width="1" /><rect x="546" y="657" width="1" height="5" fill="#ffff00" stroke="none" stroke-width="1" /><rect x="555" y="633" width="1" height="2" fill="#ff00ff" stroke="none" stroke-width="1" /><rect x="564" y="659" width="2" height="1" fill="#00ff00" stroke="none" stroke-width="1" /><rect x="567" y="649" width="1" height="2" fill="#00ff00" stroke="none" stroke-width="1" /><rect x="547" y="563" width="5" height="1" fill="#00ffff" stroke="none" stroke-width="1" /><rect x="542" y="578" width="1" height="3" fill="#0000ff" stroke="none" stroke-width="1" /><rect x="541" y="604" width="2" height="1" fill="#ffff00" stroke="none" stroke-width="1" /><rect x="545" y="573" width="1" height="3" fill="#ff00ff" stroke="none" stroke-width="1" /><rect x="564" y="564" width="2" height="1" fill="#ff0000" stroke="none" stroke-width="1" /><rect x="537" y="580" width="3" height="1" fill="#ffff00" stroke="none" stroke-width="1" /><rect x="562" y="620" width="3" height="1" fill="#000000" stroke="none" stroke-width="1" /><rect x="549" y="651" width="1" height="6" fill="#ff0000" stroke="none" stroke-width="1" /><rect x="552" y="588" width="1" height="4" fill="#00ffff" stroke="none" stroke-width="1" /><rect x="564" y="571" width="1" height="5" fill="#00ffff" stroke="none" stroke-width="1" /><rect x="541" y="575" width="1" height="6" fill="#ff0000" stroke="none" stroke-width="1" /><rect x="565" y="639" width="3" height="1" fill="#00ffff" stroke="none" stroke-width="1" /><rect x="569" y="651" width="3" height="1" fill="#ff0000" stroke="none" stroke-width="1" /><rect x="557" y="577" width="4" height="1" fill="#00ff00" stroke="none" stroke-width="1" /><rect x="543" y="647" width="1" height="6" fill="#0000ff" stroke="none" stroke-width="1" /><rect x="554" y="567" width="1" height="3" fill="#ff0000" stroke="none" stroke-width="1" /><rect x="541" y="652" width="3" height="1" fill="#ff0000" stroke="none" stroke-width="1" /><rect x="547" y="622" width="1" height="5" fill="#ffff00" stroke="none" stroke-width="1" /><rect x="535" y="635" width="1" height="6" fill="#ff00ff" stroke="none" stroke-width="1" /><rect x="533" y="580" width="2" height="1" fill="#ff0000" stroke="none" stroke-width="1" /><rect x="541" y="615" width="1" height="3" fill="#ff00ff" stroke="none" stroke-width="1" /><rect x="545" y="602" width="1" height="5" fill="#ff0000" stroke="none" stroke-width="1" /><rect x="547" y="629" width="5" height="1" fill="#ffff00" stroke="none" stroke-width="1" /><rect x="563" y="639" width="5" height="1" fill="#ff00ff" stroke="none" stroke-width="1" /><rect x="568" y="632" width="4" height="1" fill="#ff0000" stroke="none" stroke-width="1" /><rect x="537" y="638" width="1" height="3" fill="#000000" stroke="none" stroke-width="1" /><rect x="538" y="624" width="1" height="4" fill="#000000" stroke="none" stroke-width="1" /><rect x="564" y="616" width="3" height="1" fill="#ffff00" stroke="none" stroke-width="1" /><rect x="548" y="573" width="4" height="1" fill="#000000" stroke="none" stroke-width="1" /><rect x="552" y="625" width="5" height="1" fill="#000000" stroke="none" stroke-width="1" /><rect x="536" y="623" width="3" height="1" fill="#ffff00" stroke="none" stroke-width="1" /><rect x="540" y="566" width="2" height="1" fill="#0000ff" stroke="none" stroke-width="1" /><rect x="542" y="577" width="5" height="1" fill="#ffff00" stroke="none" stroke-width="1" /><rect x="546" y="643" width="1" height="3" fill="#ffff00" stroke="none" stroke-width="1" /><rect x="564" y="642" width="4" height="1" fill="#000000" stroke="none" stroke-width="1" /><rect x="558" y="633" width="1" height="4" fill="#00ff00" stroke="none" stroke-width="1" /><rect x="560" y="622" width="4" height="1" fill="#000000" stroke="none" stroke-width="1" /><rect x="546" y="626" width="5" height="1" fill="#000000" stroke="none" stroke-width="1" /><rect x="553" y="639" width="1" height="6" fill="#000000" stroke="none" stroke-width="1" /><rect x="543" y="615" width="3" height="1" fill="#0000ff" stroke="none" stroke-width="1" /><rect x="558" y="612" width="1" height="3" fill="#ffff00" stroke="none" stroke-width="1" /><rect x="574" y="631" width="1" height="6" fill="#00ffff" stroke="none" stroke-width="1" /><rect x="558" y="581" width="3" height="1" fill="#ff0000" stroke="none" stroke-width="1" /><rect x="556" y="630" width="4" height="1" fill="#ff00ff" stroke="none" stroke-width="1" /><rect x="551" y="574" width="1" height="3" fill="#ff0000" stroke="none" stroke-width="1" /><rect x="570" y="615" width="1" height="6" fill="#000000" stroke="none" stroke-width="1" /><rect x="539" y="635" width="1" height="4" fill="#ff0000" stroke="none" stroke-width="1" /><rect x="538" y="654" width="4" height="1" fill="#000000" stroke="none" stroke-width="1" /><rect x="564" y="598" width="6" height="1" fill="#000000" stroke="none" stroke-width="1" /><rect x="566" y="607" width="3" height="1" fill="#00ffff" stroke="none" stroke-width="1" /><rect x="564" y="645" width="1" height="6" fill="#ff0000" stroke="none" stroke-width="1" /><rect x="559" y="637" width="5" height="1" fill="#000000" stroke="none" stroke-width="1" /><rect x="533" y="614" width="5" height="1" fill="#ff00ff" stroke="none" stroke-width="1" /><rect x="546" y="575" width="4" height="1" fill="#0000ff" stroke="none" stroke-width="1" /><rect x="559" y="566" width="1" height="3" fill="#ff0000" stroke="none" stroke-width="1" /><rect x="572" y="621" width="5" height="1" fill="#00ff00" stroke="none" stroke-width="1" /><rect x="570" y="617" width="4" height="1" fill="#000000" stroke="none" stroke-width="1" /><rect x="569" y="607" width="1" height="5" fill="#ff00ff" stroke="none" stroke-width="1" /><rect x="537" y="573" width="1" height="4" fill="#00ff00" stroke="none" stroke-width="1" /><rect x="482" y="606" width="2" height="1" fill="#00ffff" stroke="none" stroke-width="1" /><rect x="487" y="624" width="1" height="6" fill="#ff0000" stroke="none" stroke-width="1" /><rect x="488" y="602" width="1" height="2" fill="#ffff00" stroke="none" stroke-width="1" /><rect x="471" y="607" width="1" height="5" fill="#000000" stroke="none" stroke-width="1" /><rect x="480" y="594" width="1" height="6" fill="#ff0000" stroke="none" stroke-width="1" /><rect x="485" y="626" width="1" height="4" fill="#ff0000" stroke="none" stroke-width="1" /><rect x="479" y="621" width="5" height="1" fill="#00ffff" stroke="none" stroke-width="1" /><rect x="471" y="593" width="1" height="3" fill="#000000" stroke="none" stroke-width="1" /><rect x="491" y="612" width="4" height="1" fill="#ffff00" stroke="none" stroke-width="1" /><rect x="487" y="591" width="5" height="1" fill="#000000" stroke="none" stroke-width="1" /><rect x="489" y="605" width="6" height="1" fill="#ff00ff" stroke="none" stroke-width="1" /><rect x="469" y="591" width="1" height="4" fill="#000000" stroke="none" stroke-width="1" /><rect x="481" y="625" width="1" height="5" fill="#ffff00" stroke="none" stroke-width="1" /><rect x="473" y="623" width="1" height="2" fill="#000000" stroke="none" stroke-width="1" /><rect x="476" y="623" width="1" height="2" fill="#000000" stroke="none" stroke-width="1" /><rect x="485" y="617" width="1" height="6" fill="#0000ff" stroke="none" stroke-width="1" /><rect x="473" y="623" width="2" height="1" fill="#000000" stroke="none" stroke-width="1" /><rect x="487" y="602" width="1" height="5" fill="#ff0000" stroke="none" stroke-width="1" /><rect x="477" y="626" width="1" height="5" fill="#0000ff" stroke="none" stroke-width="1" /><rect x="472" y="623" width="3" height="1" fill="#ffff00" stroke="none" stroke-width="1" /><rect x="473" y="599" width="1" height="4" fill="#ff0000" stroke="none" stroke-width="1" /><rect x="489" y="610" width="6" height="1" fill="#ffff00" stroke="none" stroke-width="1" /><rect x="493" y="624" width="3" height="1" fill="#000000" stroke="none" stroke-width="1" /><rect x="471" y="615" width="2" height="1" fill="#ff0000" stroke="none" stroke-width="1" /><rect x="492" y="593" width="1" height="2" fill="#ff00ff" stroke="none" stroke-width="1" /><rect x="483" y="610" width="6" height="1" fill="#000000" stroke="none" stroke-width="1" /><rect x="472" y="628" width="3" height="1" fill="#ffff00" stroke="none" stroke-width="1" /><rect x="487" y="591" width="1" height="3" fill="#ff0000" stroke="none" stroke-width="1" /><rect x="484" y="625" width="1" height="2" fill="#ff0000" stroke="none" stroke-width="1" /><rect x="470" y="592" width="1" height="4" fill="#ff00ff" stroke="none" stroke-width="1" /><rect x="485" y="620" width="1" height="6" fill="#ffff00" stroke="none" stroke-width="1" /><rect x="487" y="610" width="1" height="3" fill="#00ffff" stroke="none" stroke-width="1" /><rect x="484" y="599" width="4" height="1" fill="#ffff00" stroke="none" stroke-width="1" /><rect x="475" y="611" width="1" height="6" fill="#000000" stroke="none" stroke-width="1" /><rect x="475" y="598" width="1" height="2" fill="#ff00ff" stroke="none" stroke-width="1" /><rect x="480" y="623" width="6" height="1" fill="#000000" stroke="none" stroke-width="1" /><rect x="484" y="621" width="1" height="4" fill="#ff0000" stroke="none" stroke-width="1" /><rect x="470" y="624" width="1" height="6" fill="#ff0000" stroke="none" stroke-width="1" /><rect x="489" y="599" width="4" height="1" fill="#000000" stroke="none" stroke-width="1" /><rect x="469" y="602" width="1" height="6" fill="#00ff00" stroke="none" stroke-width="1" /><rect x="488" y="609" width="1" height="6" fill="#ff0000" stroke="none" stroke-width="1" /><rect x="478" y="599" width="6" height="1" fill="#0000ff" stroke="none" stroke-width="1" /><rect x="470" y="606" width="3" height="1" fill="#ff00ff" stroke="none" stroke-width="1" /><rect x="471" y="619" width="1" height="3" fill="#ff0000" stroke="none" stroke-width="1" /><rect x="487" y="610" width="1" height="2" fill="#0000ff" stroke="none" stroke-width="1" /><rect x="479" y="610" width="6" height="1" fill="#000000" stroke="none" stroke-width="1" /><rect x="480" y="626" width="1" height="6" fill="#ff0000" stroke="none" stroke-width="1" /><rect x="476" y="595" width="1" height="5" fill="#000000" stroke="none" stroke-width="1" /><rect x="470" y="599" width="6" height="1" fill="#ff00ff" stroke="none" stroke-width="1" /><rect x="469" y="605" width="1" height="2" fill="#000000" stroke="none" stroke-width="1" /><rect x="553" y="638" width="1" height="3" fill="#ffff00" stroke="none" stroke-width="1" /><rect x="560" y="639" width="5" height="1" fill="#ff00ff" stroke="none" stroke-width="1" /><rect x="544" y="609" width="6" height="1" fill="#ff0000" stroke="none" stroke-width="1" /><rect x="551" y="611" width="1" height="4" fill="#0000ff" stroke="none" stroke-width="1" /><rect x="550" y="642" width="1" height="5" fill="#ff00ff" stroke="none" stroke-width="1" /><rect x="552" y="612" width="4" height="1" fill="#000000" stroke="none" stroke-width="1" /><rect x="562" y="623" width="1" height="4" fill="#ffff00" stroke="none" stroke-width="1" /><rect x="548" y="638" width="1" height="4" fill="#00ffff" stroke="none" stroke-width="1" /><rect x="548" y="599" width="1" height="4" fill="#ffff00" stroke="none" stroke-width="1" /><rect x="557" y="628" width="1" height="2" fill="#0000ff" stroke="none" stroke-width="1" /><rect x="559" y="614" width="1" height="5" fill="#ffff00" stroke="none" stroke-width="1" /><rect x="545" y="636" width="1" height="4" fill="#ffff00" stroke="none" stroke-width="1" /><rect x="554" y="616" width="6" height="1" fill="#00ff00" stroke="none" stroke-width="1" /><rect x="542" y="602" width="5" height="1" fill="#000000" stroke="none" stroke-width="1" /><rect x="556" y="617" width="1" height="4" fill="#00ffff" stroke="none" stroke-width="1" /><rect x="555" y="599" width="4" height="1" fill="#ff00ff" stroke="none" stroke-width="1" /><rect x="556" y="612" width="4" height="1" fill="#00ffff" stroke="none" stroke-width="1" /><rect x="541" y="610" width="1" height="3" fill="#000000" stroke="none" stroke-width="1" /><rect x="559" y="629" width="2" height="1" fill="#ff0000" stroke="none" stroke-width="1" /><rect x="555" y="594" width="1" height="6" fill="#ff0000" stroke="none" stroke-width="1" /><rect x="555" y="640" width="1" height="3" fill="#ffff00" stroke="none" stroke-width="1" /><rect x="541" y="613" width="2" height="1" fill="#ff0000" stroke="none" stroke-width="1" /><rect x="548" y="608" width="4" height="1" fill="#ff00ff" stroke="none" stroke-width="1" /><rect x="543" y="612" width="3" height="1" fill="#000000" stroke="none" stroke-width="1" /><rect x="555" y="603" width="4" height="1" fill="#ffff00" stroke="none" stroke-width="1" /><rect x="558" y="615" width="6" height="1" fill="#00ff00" stroke="none" stroke-width="1" /><rect x="556" y="592" width="4" height="1" fill="#ff0000" stroke="none" stroke-width="1" /><rect x="561" y="605" width="6" height="1" fill="#ffff00" stroke="none" stroke-width="1" /><rect x="550" y="608" width="2" height="1" fill="#ff0000" stroke="none" stroke-width="1" /><rect x="547" y="636" width="1" height="4" fill="#ff0000" stroke="none" stroke-width="1" /><rect x="554" y="611" width="4" height="1" fill="#0000ff" stroke="none" stroke-width="1" /><rect x="553" y="639" width="1" height="2" fill="#ff0000" stroke="none" stroke-width="1" /><rect x="552" y="622" width="2" height="1" fill="#000000" stroke="none" stroke-width="1" /><rect x="560" y="610" width="1" height="2" fill="#ff00ff" stroke="none" stroke-width="1" /><rect x="555" y="605" width="5" height="1" fill="#0000ff" stroke="none" stroke-width="1" /><rect x="543" y="601" width="3" height="1" fill="#ff0000" stroke="none" stroke-width="1" /><rect x="551" y="638" width="1" height="2" fill="#000000" stroke="none" stroke-width="1" /><rect x="552" y="634" width="1" height="2" fill="#000000" stroke="none" stroke-width="1" /><rect x="559" y="636" width="1" height="4" fill="#000000" stroke="none" stroke-width="1" /><rect x="547" y="636" width="3" height="1" fill="#ff0000" stroke="none" stroke-width="1" /><rect x="555" y="640" width="1" height="3" fill="#00ff00" stroke="none" stroke-width="1" /><rect x="554" y="616" width="1" height="4" fill="#ffff00" stroke="none" stroke-width="1" /><rect x="546" y="629" width="1" height="3" fill="#00ff00" stroke="none" stroke-width="1" /><rect x="548" y="627" width="1" height="3" fill="#000000" stroke="none" stroke-width="1" /><rect x="563" y="633" width="1" height="4" fill="#ffff00" stroke="none" stroke-width="1" /><rect x="559" y="617" width="1" height="2" fill="#ffff00" stroke="none" stroke-width="1" /><rect x="554" y="612" width="4" height="1" fill="#0000ff" stroke="none" stroke-width="1" /><rect x="549" y="629" width="1" height="4" fill="#ff0000" stroke="none" stroke-width="1" /><rect x="548" y="626" width="3" height="1" fill="#ff0000" stroke="none" stroke-width="1" /><rect x="559" y="620" width="3" height="1" fill="#000000" stroke="none" stroke-width="1" /><rect x="557" y="605" width="3" height="1" fill="#000000" stroke="none" stroke-width="1" /><rect x="554" y="606" width="1" height="2" fill="#00ff00" stroke="none" stroke-width="1" /><rect x="553" y="639" width="1" height="3" fill="#ff00ff" stroke="none" stroke-width="1" /><rect x="556" y="612" width="1" height="5" fill="#ff0000" stroke="none" stroke-width="1" /><rect x="561" y="641" width="2" height="1" fill="#00ff00" stroke="none" stroke-width="1" /><rect x="544" y="609" width="1" height="2" fill="#ff0000" stroke="none" stroke-width="1" /><rect x="547" y="592" width="1" height="5" fill="#00ff00" stroke="none" stroke-width="1" /><rect x="548" y="607" width="1" height="4" fill="#0000ff" stroke="none" stroke-width="1" /><rect x="548" y="623" width="1" height="6" fill="#000000" stroke="none" stroke-width="1" /><rect x="555" y="602" width="3" height="1" fill="#00ff00" stroke="none" stroke-width="1" /><rect x="486" y="408" width="1" height="4" fill="#ff00ff" stroke="none" stroke-width="1" /><rect x="501" y="409" width="1" height="4" fill="#ff00ff" stroke="none" stroke-width="1" /><rect x="508" y="412" width="4" height="1" fill="#000000" stroke="none" stroke-width="1" /><rect x="481" y="411" width="1" height="6" fill="#000000" stroke="none" stroke-width="1" /><rect x="485" y="406" width="1" height="2" fill="#ff0000" stroke="none" stroke-width="1" /><rect x="486" y="417" width="1" height="3" fill="#ff0000" stroke="none" stroke-width="1" /><rect x="504" y="416" width="1" height="5" fill="#00ff00" stroke="none" stroke-width="1" /><rect x="479" y="419" width="1" height="6" fill="#00ffff" stroke="none" stroke-width="1" /><rect x="492" y="428" width="1" height="5" fill="#ff0000" stroke="none" stroke-width="1" /><rect x="524" y="423" width="2" height="1" fill="#000000" stroke="none" stroke-width="1" /><rect x="507" y="422" width="2" height="1" fill="#0000ff" stroke="none" stroke-width="1" /><rect x="494" y="418" width="3" height="1" fill="#00ffff" stroke="none" stroke-width="1" /><rect x="531" y="406" width="1" height="3" fill="#ffff00" stroke="none" stroke-width="1" /><rect x="499" y="424" width="1" height="2" fill="#ff00ff" stroke="none" stroke-width="1" /><rect x="499" y="422" width="6" height="1" fill="#ff00ff" stroke="none" stroke-width="1" /><rect x="477" y="409" width="4" height="1" fill="#ff0000" stroke="none" stroke-width="1" /><rect x="513" y="425" width="5" height="1" fill="#00ffff" stroke="none" stroke-width="1" /><rect x="494" y="408" width="1" height="6" fill="#ffff00" stroke="none" stroke-width="1" /><rect x="491" y="411" width="2" height="1" fill="#ffff00" stroke="none" stroke-width="1" /><rect x="507" y="422" width="2" height="1" fill="#0000ff" stroke="none" stroke-width="1" /><rect x="484" y="414" width="2" height="1" fill="#0000ff" stroke="none" stroke-width="1" /><rect x="505" y="415" width="6" height="1" fill="#00ff00" stroke="none" stroke-width="1" /><rect x="477" y="410" width="6" height="1" fill="#000000" stroke="none" stroke-width="1" /><rect x="509" y="413" width="3" height="1" fill="#ffff00" stroke="none" stroke-width="1" /><rect x="499" y="422" width="4" height="1" fill="#ff00ff" stroke="none" stroke-width="1" /><rect x="515" y="428" width="3" height="1" fill="#ffff00" stroke="none" stroke-width="1" /><rect x="506" y="406" width="1" height="5" fill="#ffff00" stroke="none" stroke-width="1" /><rect x="488" y="420" width="1" height="5" fill="#ff0000" stroke="none" stroke-width="1" /><rect x="531" y="427" width="5" height="1" fill="#00ffff" stroke="none" stroke-width="1" /><rect x="514" y="416" width="3" height="1" fill="#00ff00" stroke="none" stroke-width="1" /><rect x="510" y="419" width="1" height="2" fill="#00ff00" stroke="none" stroke-width="1" /><rect x="512" y="416" width="1" height="6" fill="#00ffff" stroke="none" stroke-width="1" /><rect x="529" y="409" width="4" height="1" fill="#ff0000" stroke="none" stroke-width="1" /><rect x="494" y="423" width="1" height="5" fill="#000000" stroke="none" stroke-width="1" /><rect x="525" y="409" width="1" height="5" fill="#ff0000" stroke="none" stroke-width="1" /><rect x="489" y="425" width="1" height="3" fill="#ffff00" stroke="none" stroke-width="1" /><rect x="521" y="418" width="1" height="2" fill="#ffff00" stroke="none" stroke-width="1" /><rect x="526" y="422" width="4" height="1" fill="#0000ff" stroke="none" stroke-width="1" /><rect x="488" y="406" width="5" height="1" fill="#ff00ff" stroke="none" stroke-width="1" /><rect x="531" y="411" width="5" height="1" fill="#ff0000" stroke="none" stroke-width="1" /><rect x="526" y="408" width="2" height="1" fill="#ff00ff" stroke="none" stroke-width="1" /><rect x="531" y="408" width="1" height="4" fill="#00ffff" stroke="none" stroke-width="1" /><rect x="482" y="407" width="3" height="1" fill="#0000ff" stroke="none" stroke-width="1" /><rect x="483" y="410" width="6" height="1" fill="#ff0000" stroke="none" stroke-width="1" /><rect x="527" y="408" width="1" height="3" fill="#ff00ff" stroke="none" stroke-width="1" /><rect x="512" y="426" width="1" height="3" fill="#00ffff" stroke="none" stroke-width="1" /><rect x="514" y="416" width="4" height="1" fill="#00ffff" stroke="none" stroke-width="1" /><rect x="524" y="428" width="1" height="3" fill="#ffff00" stroke="none" stroke-width="1" /><rect x="486" y="409" width="1" height="5" fill="#000000" stroke="none" stroke-width="1" /><rect x="483" y="409" width="1" height="6" fill="#ff0000" stroke="none" stroke-width="1" /><rect x="541" y="456" width="1" height="3" fill="#000000" stroke="none" stroke-width="1" /><rect x="547" y="461" width="2" height="1" fill="#ffff00" stroke="none" stroke-width="1" /><rect x="542" y="461" width="5" height="1" fill="#ff0000" stroke="none" stroke-width="1" /><rect x="543" y="462" width="5" height="1" fill="#0000ff" stroke="none" stroke-width="1" /><rect x="542" y="455" width="4" height="1" fill="#000000" stroke="none" stroke-width="1" /><rect x="544" y="458" width="1" height="5" fill="#ffff00" stroke="none" stroke-width="1" /><rect x="538" y="489" width="2" height="1" fill="#000000" stroke="none" stroke-width="1" /><rect x="513" y="487" width="4" height="1" fill="#ffff00" stroke="none" stroke-width="1" /><rect x="532" y="485" width="1" height="2" fill="#ff0000" stroke="none" stroke-width="1" /><rect x="510" y="489" width="1" height="5" fill="#00ff00" stroke="none" stroke-width="1" /><rect x="502" y="486" width="1" height="6" fill="#00ff00" stroke="none" stroke-width="1" /><rect x="523" y="486" width="1" height="2" fill="#ffff00" stroke="none" stroke-width="1" /><rect x="482" y="485" width="1" height="4" fill="#ffff00" stroke="none" stroke-width="1" /><rect x="532" y="486" width="3" height="1" fill="#ff0000" stroke="none" stroke-width="1" /><rect x="520" y="488" width="1" height="2" fill="#ff00ff" stroke="none" stroke-width="1" /><rect x="556" y="492" width="3" height="1" fill="#000000" stroke="none" stroke-width="1" /><rect x="535" y="492" width="5" height="1" fill="#00ffff" stroke="none" stroke-width="1" /><rect x="542" y="492" width="1" height="6" fill="#00ff00" stroke="none" stroke-width="1" /><rect x="624" y="460" width="1" height="2" fill="#000000" stroke="none" stroke-width="1" /><rect x="604" y="463" width="1" height="4" fill="#ffff00" stroke="none" stroke-width="1" /><rect x="636" y="443" width="2" height="1" fill="#ff00ff" stroke="none" stroke-width="1" /><rect x="639" y="463" width="1" height="2" fill="#ffff00" stroke="none" stroke-width="1" /><rect x="618" y="453" width="1" height="2" fill="#ffff00" stroke="none" stroke-width="1" /><rect x="616" y="452" width="6" height="1" fill="#ffff00" stroke="none" stroke-width="1" /><rect x="609" y="442" width="1" height="4" fill="#000000" stroke="none" stroke-width="1" /><rect x="636" y="446" width="2" height="1" fill="#ffff00" stroke="none" stroke-width="1" /><rect x="628" y="444" width="3" height="1" fill="#000000" stroke="none" stroke-width="1" /><rect x="637" y="452" width="6" height="1" fill="#ffff00" stroke="none" stroke-width="1" /><rect x="611" y="455" width="1" height="2" fill="#00ffff" stroke="none" stroke-width="1" /><rect x="638" y="445" width="1" height="2" fill="#00ff00" stroke="none" stroke-width="1" /><rect x="610" y="453" width="2" height="1" fill="#00ff00" stroke="none" stroke-width="1" /><rect x="616" y="463" width="1" height="2" fill="#ff00ff" stroke="none" stroke-width="1" /><rect x="621" y="442" width="2" height="1" fill="#00ff00" stroke="none" stroke-width="1" /><rect x="617" y="452" width="1" height="6" fill="#00ff00" stroke="none" stroke-width="1" /><rect x="627" y="452" width="1" height="5" fill="#0000ff" stroke="none" stroke-width="1" /><rect x="615" y="454" width="2" height="1" fill="#ff0000" stroke="none" stroke-width="1" /><rect x="636" y="449" width="1" height="4" fill="#00ff00" stroke="none" stroke-width="1" /><rect x="609" y="447" width="1" height="3" fill="#ff00ff" stroke="none" stroke-width="1" /><rect x="620" y="448" width="1" height="2" fill="#00ffff" stroke="none" stroke-width="1" /><rect x="605" y="449" width="1" height="6" fill="#ffff00" stroke="none" stroke-width="1" /><rect x="624" y="440" width="2" height="1" fill="#00ffff" stroke="none" stroke-width="1" /><rect x="632" y="449" width="6" height="1" fill="#ff0000" stroke="none" stroke-width="1" /><rect x="638" y="445" width="1" height="2" fill="#ffff00" stroke="none" stroke-width="1" /><rect x="612" y="443" width="1" height="4" fill="#ffff00" stroke="none" stroke-width="1" /><rect x="639" y="445" width="1" height="5" fill="#ff0000" stroke="none" stroke-width="1" /><rect x="620" y="447" width="1" height="2" fill="#ffff00" stroke="none" stroke-width="1" /><rect x="644" y="460" width="4" height="1" fill="#00ff00" stroke="none" stroke-width="1" /><rect x="638" y="459" width="1" height="2" fill="#0000ff" stroke="none" stroke-width="1" /><rect x="606" y="455" width="1" height="4" fill="#ff00ff" stroke="none" stroke-width="1" /><rect x="629" y="456" width="6" height="1" fill="#ff0000" stroke="none" stroke-width="1" /><rect x="638" y="452" width="2" height="1" fill="#ff0000" stroke="none" stroke-width="1" /><rect x="636" y="451" width="1" height="5" fill="#0000ff" stroke="none" stroke-width="1" /><rect x="632" y="459" width="2" height="1" fill="#ff00ff" stroke="none" stroke-width="1" /><rect x="643" y="449" width="1" height="2" fill="#ffff00" stroke="none" stroke-width="1" /><rect x="620" y="457" width="1" height="2" fill="#ffff00" stroke="none" stroke-width="1" /><rect x="608" y="448" width="2" height="1" fill="#000000" stroke="none" stroke-width="1" /><rect x="640" y="451" width="5" height="1" fill="#0000ff" stroke="none" stroke-width="1" /><rect x="612" y="457" width="5" height="1" fill="#00ff00" stroke="none" stroke-width="1" /><rect x="625" y="486" width="1" height="3" fill="#00ff00" stroke="none" stroke-width="1" /><rect x="617" y="480" width="1" height="4" fill="#000000" stroke="none" stroke-width="1" /><rect x="628" y="487" width="6" height="1" fill="#00ff00" stroke="none" stroke-width="1" /><rect x="639" y="485" width="1" height="5" fill="#000000" stroke="none" stroke-width="1" /><rect x="617" y="489" width="4" height="1" fill="#00ff00" stroke="none" stroke-width="1" /><rect x="634" y="487" width="2" height="1" fill="#ffff00" stroke="none" stroke-width="1" /><rect x="619" y="489" width="6" height="1" fill="#ff0000" stroke="none" stroke-width="1" /><rect x="627" y="493" width="1" height="5" fill="#ffff00" stroke="none" stroke-width="1" /><rect x="624" y="483" width="1" height="2" fill="#00ff00" stroke="none" stroke-width="1" /><rect x="625" y="482" width="1" height="4" fill="#ff0000" stroke="none" stroke-width="1" /><rect x="611" y="486" width="5" height="1" fill="#000000" stroke="none" stroke-width="1" /><rect x="637" y="481" width="1" height="3" fill="#ffff00" stroke="none" stroke-width="1" /><rect x="639" y="490" width="3" height="1" fill="#000000" stroke="none" stroke-width="1" /><rect x="628" y="492" width="1" height="4" fill="#000000" stroke="none" stroke-width="1" /><rect x="608" y="490" width="1" height="6" fill="#ffff00" stroke="none" stroke-width="1" /><rect x="609" y="485" width="4" height="1" fill="#ff0000" stroke="none" stroke-width="1" /><rect x="616" y="487" width="2" height="1" fill="#ff0000" stroke="none" stroke-width="1" /><rect x="605" y="490" width="1" height="3" fill="#ff0000" stroke="none" stroke-width="1" /><rect x="611" y="491" width="1" height="6" fill="#00ff00" stroke="none" stroke-width="1" /><rect x="626" y="490" width="1" height="6" fill="#ffff00" stroke="none" stroke-width="1" /><rect x="617" y="486" width="1" height="6" fill="#ff0000" stroke="none" stroke-width="1" /><rect x="624" y="489" width="3" height="1" fill="#000000" stroke="none" stroke-width="1" /><rect x="615" y="489" width="1" height="2" fill="#00ffff" stroke="none" stroke-width="1" /><rect x="609" y="492" width="1" height="2" fill="#00ffff" stroke="none" stroke-width="1" /><rect x="641" y="481" width="1" height="2" fill="#ff0000" stroke="none" stroke-width="1" /><rect x="692" y="626" width="1" height="2" fill="#000000" stroke="none" stroke-width="1" /><rect x="668" y="628" width="6" height="1" fill="#ffff00" stroke="none" stroke-width="1" /><rect x="666" y="631" width="6" height="1" fill="#00ffff" stroke="none" stroke-width="1" /><rect x="681" y="639" width="1" height="2" fill="#ffff00" stroke="none" stroke-width="1" /><rect x="668" y="624" width="1" height="2" fill="#00ff00" stroke="none" stroke-width="1" /><rect x="690" y="638" width="4" height="1" fill="#00ffff" stroke="none" stroke-width="1" /><rect x="673" y="634" width="1" height="6" fill="#ff0000" stroke="none" stroke-width="1" /><rect x="688" y="639" width="5" height="1" fill="#0000ff" stroke="none" stroke-width="1" /><rect x="692" y="631" width="1" height="4" fill="#000000" stroke="none" stroke-width="1" /><rect x="666" y="630" width="1" height="2" fill="#0000ff" stroke="none" stroke-width="1" /><rect x="667" y="637" width="1" height="2" fill="#ffff00" stroke="none" stroke-width="1" /><rect x="665" y="637" width="1" height="6" fill="#00ff00" stroke="none" stroke-width="1" /><rect x="685" y="633" width="4" height="1" fill="#000000" stroke="none" stroke-width="1" /><rect x="691" y="624" width="3" height="1" fill="#ffff00" stroke="none" stroke-width="1" /><rect x="674" y="624" width="3" height="1" fill="#00ff00" stroke="none" stroke-width="1" /><rect x="665" y="627" width="1" height="6" fill="#ff0000" stroke="none" stroke-width="1" /><rect x="677" y="625" width="1" height="3" fill="#ffff00" stroke="none" stroke-width="1" /><rect x="668" y="625" width="4" height="1" fill="#000000" stroke="none" stroke-width="1" /><rect x="671" y="633" width="6" height="1" fill="#0000ff" stroke="none" stroke-width="1" /><rect x="671" y="638" width="3" height="1" fill="#000000" stroke="none" stroke-width="1" /><rect x="672" y="627" width="1" height="2" fill="#ffff00" stroke="none" stroke-width="1" /><rect x="679" y="622" width="1" height="3" fill="#000000" stroke="none" stroke-width="1" /><rect x="670" y="628" width="1" height="4" fill="#ff00ff" stroke="none" stroke-width="1" /><rect x="666" y="621" width="1" height="3" fill="#ffff00" stroke="none" stroke-width="1" /><rect x="686" y="636" width="3" height="1" fill="#00ff00" stroke="none" stroke-width="1" /><polyline points="1031,477.5 1099,477.5" fill="none" stroke="#ffffff" stroke-width="1"/><polyline points="1065.5,443 1065.5,511" fill="none" stroke="#ffffff" stroke-width="1"/><rect x="1062.5" y="474.5" width="6" height="6" fill="none" stroke="#ffffff" stroke-width="1" /><polyline points="74.5,662 74.5,712" fill="none" stroke="#ffffff" stroke-width="1.3"/><polyline points="74,711.5 124,711.5" fill="none" stroke="#ffffff" stroke-width="1.3"/><rect x="70.5" y="706.5" width="9" height="9" fill="none" stroke="#ffffff" stroke-width="1.3" /><polyline points="129,697 142,710" fill="none" stroke="#ffffff" stroke-width="1.3"/><polyline points="142,697 129,710" fill="none" stroke="#ffffff" stroke-width="1.3"/><polyline points="76,644 82.3,650.2 88.7,644" fill="none" stroke="#ffffff" stroke-width="1.2"/><polyline points="82.3,650 82.3,657" fill="none" stroke="#ffffff" stroke-width="1.2"/></svg>
</div>
<div class="t" style="left:63px;top:171px;font-size:12px;color:#f0f0f0;font-weight:bold;font-family:'Liberation Sans',sans-serif;font-style:normal;transform:scaleX(0.962);transform-origin:0 0;">[&minus;][Top][2D Wireframe]</div>
<svg class="a" style="left:1230px;top:174px" width="108" height="148" viewBox="0 0 108 148">
<circle cx="53" cy="53.5" r="42.3" fill="none" stroke="#454b55" stroke-width="9.4"/>
<rect x="32.4" y="33" width="41.2" height="41.5" fill="#a9abaf"/>
<rect x="39.7" y="41" width="26.6" height="25.8" fill="#9da1a7"/>
<text x="53" y="58" font-size="10" font-weight="bold" text-anchor="middle" fill="#4c515a" font-family="Liberation Sans" transform="scale(1 1)">TOP</text>
<g font-family="Liberation Sans" font-weight="bold" font-size="16" fill="#b6b8bc" text-anchor="middle">
<text x="53" y="16">N</text><text x="53" y="105">S</text><text x="8" y="60">W</text><text x="97.5" y="60">E</text></g>
<rect x="28.5" y="123.5" width="47" height="17" rx="4" fill="#8d909b" stroke="#7a7d88"/>
<text x="44" y="136" font-size="10.5" fill="#5e616b" font-family="Liberation Sans" text-anchor="middle">WCS</text>
<path d="M62 129h8l-4 5z" fill="none" stroke="#5e616b" stroke-width=".9"/>
</svg>
<div class="a" style="left:0px;top:163px;width:58px;height:580px;background:#6b6b6b;"></div>
<div class="a" style="left:1px;top:162px;width:24px;height:449px;background:#ececec;border:1px solid #505050"></div>
<div class="a" style="left:2px;top:163px;width:22px;height:8px;background:#5c5c5c;"></div>
<svg class="a" style="left:6px;top:165px" width="13" height="4" viewBox="0 0 13 4"><rect x="0" y="0" width="1" height="1" fill="#262626"/><rect x="0" y="2" width="1" height="1" fill="#262626"/><rect x="2" y="0" width="1" height="1" fill="#262626"/><rect x="2" y="2" width="1" height="1" fill="#262626"/><rect x="4" y="0" width="1" height="1" fill="#262626"/><rect x="4" y="2" width="1" height="1" fill="#262626"/><rect x="6" y="0" width="1" height="1" fill="#262626"/><rect x="6" y="2" width="1" height="1" fill="#262626"/><rect x="8" y="0" width="1" height="1" fill="#262626"/><rect x="8" y="2" width="1" height="1" fill="#262626"/><rect x="10" y="0" width="1" height="1" fill="#262626"/><rect x="10" y="2" width="1" height="1" fill="#262626"/><rect x="12" y="0" width="1" height="1" fill="#262626"/><rect x="12" y="2" width="1" height="1" fill="#262626"/></svg>
<div class="a" style="left:28px;top:162px;width:24px;height:405px;background:#ececec;border:1px solid #505050"></div>
<div class="a" style="left:29px;top:163px;width:22px;height:8px;background:#5c5c5c;"></div>
<svg class="a" style="left:33px;top:165px" width="13" height="4" viewBox="0 0 13 4"><rect x="0" y="0" width="1" height="1" fill="#262626"/><rect x="0" y="2" width="1" height="1" fill="#262626"/><rect x="2" y="0" width="1" height="1" fill="#262626"/><rect x="2" y="2" width="1" height="1" fill="#262626"/><rect x="4" y="0" width="1" height="1" fill="#262626"/><rect x="4" y="2" width="1" height="1" fill="#262626"/><rect x="6" y="0" width="1" height="1" fill="#262626"/><rect x="6" y="2" width="1" height="1" fill="#262626"/><rect x="8" y="0" width="1" height="1" fill="#262626"/><rect x="8" y="2" width="1" height="1" fill="#262626"/><rect x="10" y="0" width="1" height="1" fill="#262626"/><rect x="10" y="2" width="1" height="1" fill="#262626"/><rect x="12" y="0" width="1" height="1" fill="#262626"/><rect x="12" y="2" width="1" height="1" fill="#262626"/></svg>
<svg class="a" style="left:2.5px;top:172px" width="20" height="20" viewBox="0 0 20 20"><path d="M3 17L17 3" stroke="#333" stroke-width="1.2"/><rect x="1" y="15" width="4" height="4" fill="#fff" stroke="#333"/><rect x="15" y="1" width="4" height="4" fill="#fff" stroke="#333"/></svg>
<svg class="a" style="left:2.5px;top:194px" width="20" height="20" viewBox="0 0 20 20"><path d="M3 17L17 3M13 3h4v4M3 13v4h4" stroke="#333" stroke-width="1.2" fill="none"/><rect x="8" y="8" width="4" height="4" fill="#fff" stroke="#333"/></svg>
<svg class="a" style="left:2.5px;top:216px" width="20" height="20" viewBox="0 0 20 20"><path d="M3 14h8c4 0 6-3 6-6s-2-4-4-4H9" stroke="#333" stroke-width="1.2" fill="none"/><rect x="1" y="12" width="4" height="4" fill="#fff" stroke="#333"/><rect x="7" y="2" width="4" height="4" fill="#fff" stroke="#333"/></svg>
<svg class="a" style="left:2.5px;top:238px" width="20" height="20" viewBox="0 0 20 20"><path d="M10 2l8 6-3 9H5L2 8z" fill="#fff" stroke="#333" stroke-width="1.2"/></svg>
<svg class="a" style="left:2.5px;top:260px" width="20" height="20" viewBox="0 0 20 20"><rect x="2.5" y="5.5" width="14" height="10" fill="#fff" stroke="#333" stroke-width="1.2"/><rect x="14" y="3" width="4" height="4" fill="#fff" stroke="#333"/></svg>
<svg class="a" style="left:2.5px;top:282px" width="20" height="20" viewBox="0 0 20 20"><path d="M3 17C4 10 9 4 16 3" stroke="#333" stroke-width="1.2" fill="none"/><rect x="1" y="15" width="4" height="4" fill="#fff" stroke="#333"/><rect x="14" y="1" width="4" height="4" fill="#fff" stroke="#333"/></svg>
<svg class="a" style="left:2.5px;top:303px" width="20" height="20" viewBox="0 0 20 20"><circle cx="10" cy="10" r="7.5" fill="#fff" stroke="#333" stroke-width="1.2"/><path d="M10 10l4-4" stroke="#333"/><rect x="8.5" y="8.5" width="3" height="3" fill="#fff" stroke="#333"/></svg>
<svg class="a" style="left:2.5px;top:325px" width="20" height="20" viewBox="0 0 20 20"><path d="M5 6c0-3 4-4 5-2 2-3 6-1 5 2 3 0 3 4 1 5 1 3-2 5-4 4-1 2-5 2-6 0-3 0-4-3-2-5-2-1-2-4 1-4z" fill="#fff" stroke="#333" stroke-width="1.2"/></svg>
<svg class="a" style="left:2.5px;top:347px" width="20" height="20" viewBox="0 0 20 20"><path d="M2 16c3-10 6-10 8-5s5 4 8-7" stroke="#333" stroke-width="1.3" fill="none"/></svg>
<svg class="a" style="left:2.5px;top:369px" width="20" height="20" viewBox="0 0 20 20"><ellipse cx="10" cy="10" rx="8" ry="5" fill="#fff" stroke="#333" stroke-width="1.2"/><rect x="8" y="3" width="4" height="4" fill="#fff" stroke="#333"/><rect x="1" y="8" width="4" height="4" fill="#fff" stroke="#333"/><rect x="15" y="8" width="4" height="4" fill="#fff" stroke="#333"/></svg>
<svg class="a" style="left:2.5px;top:391px" width="20" height="20" viewBox="0 0 20 20"><path d="M5 14C1 10 5 5 10 5s8 3 7 6" stroke="#333" stroke-width="1.2" fill="none"/><rect x="3" y="13" width="4" height="4" fill="#fff" stroke="#333"/></svg>
<svg class="a" style="left:2.5px;top:413px" width="20" height="20" viewBox="0 0 20 20"><rect x="6.5" y="2.5" width="10" height="8" fill="#fff" stroke="#333"/><rect x="2.5" y="7.5" width="9" height="8" fill="#fff" stroke="#333"/><circle cx="13" cy="13" r="3" fill="#fff" stroke="#333"/><path d="M16 19h3v-3z" fill="#111"/></svg>
<svg class="a" style="left:2.5px;top:435px" width="20" height="20" viewBox="0 0 20 20"><rect x="2.5" y="5.5" width="11" height="8" fill="#fff" stroke="#333"/><circle cx="14" cy="13" r="3.5" fill="#fff" stroke="#333"/></svg>
<svg class="a" style="left:2.5px;top:457px" width="20" height="20" viewBox="0 0 20 20"><rect x="8.5" y="8.5" width="3" height="3" fill="#fff" stroke="#333"/></svg>
<svg class="a" style="left:2.5px;top:479px" width="20" height="20" viewBox="0 0 20 20"><rect x="3.5" y="3.5" width="13" height="13" fill="#fff" stroke="#333" stroke-width="1.2"/><path d="M4 12l8-8M4 16l12-12M8 16l8-8" stroke="#333"/><path d="M1 4h18M1 16h18M4 1v18M16 1v18" stroke="#333" stroke-width=".8"/></svg>
<svg class="a" style="left:2.5px;top:500px" width="20" height="20" viewBox="0 0 20 20"><rect x="3.5" y="3.5" width="13" height="13" fill="#555" stroke="#333" stroke-width="1.2"/><rect x="5" y="5" width="10" height="10" fill="#ccc"/><path d="M1 4h18M1 16h18M4 1v18M16 1v18" stroke="#333" stroke-width=".8"/></svg>
<svg class="a" style="left:2.5px;top:522px" width="20" height="20" viewBox="0 0 20 20"><path d="M2 4h11l6 6-6 6H2z" fill="#fff" stroke="#333" stroke-width="1.2"/><circle cx="10" cy="10" r="4" fill="#fff" stroke="#333" stroke-width="1.2"/></svg>
<svg class="a" style="left:2.5px;top:544px" width="20" height="20" viewBox="0 0 20 20"><rect x="2.5" y="3.5" width="15" height="14" fill="#fff" stroke="#333" stroke-width="1.2"/><path d="M2.5 7.5h15M2.5 11h15M2.5 14.5h15M7.5 7.5v10M12.5 7.5v10" stroke="#333"/><rect x="3" y="4" width="14" height="3" fill="#888"/></svg>
<svg class="a" style="left:2.5px;top:566px" width="20" height="20" viewBox="0 0 20 20"><text x="10" y="18" font-size="19" text-anchor="middle" fill="#222" font-family="Liberation Sans">A</text></svg>
<svg class="a" style="left:2.5px;top:588px" width="20" height="20" viewBox="0 0 20 20"><circle cx="5" cy="5" r="3.5" fill="#2c9c3c" stroke="#1a6a2a"/><circle cx="14" cy="15" r="3.5" fill="#5aaef0" stroke="#1f6fc0"/><path d="M8 5h4v6M10 9l2 2 2-2" stroke="#222" fill="none"/></svg>
<svg class="a" style="left:30.5px;top:172px" width="20" height="20" viewBox="0 0 20 20"><path d="M3 15l10-11 4 3-10 11z" fill="#f0c080" stroke="#6a3a10"/><path d="M3 15l3 3" stroke="#d43"/><circle cx="5" cy="16" r="2.5" fill="#d03a20"/><path d="M8 18h10" stroke="#333"/></svg>
<svg class="a" style="left:30.5px;top:194px" width="20" height="20" viewBox="0 0 20 20"><circle cx="6" cy="6" r="4" fill="#fff" stroke="#333" stroke-width="1.1"/><circle cx="12" cy="13" r="4" fill="#bcdcf6" stroke="#1f7fd8" stroke-width="1.3"/><circle cx="14" cy="16" r="3" fill="#bcdcf6" stroke="#1f7fd8"/><path d="M11 4h5v4" stroke="#333" fill="none"/></svg>
<svg class="a" style="left:30.5px;top:216px" width="20" height="20" viewBox="0 0 20 20"><path d="M9 3L3 16h6z" fill="#fff" stroke="#333" stroke-width="1.1"/><path d="M11 3l6 13h-6z" fill="#9ccaf0" stroke="#1f7fd8" stroke-width="1.1"/><path d="M10 1v18" stroke="#333"/></svg>
<svg class="a" style="left:30.5px;top:238px" width="20" height="20" viewBox="0 0 20 20"><path d="M3 17V9c0-4 3-6 5-6s4 2 4 5h3c2 0 3 2 3 4v5z" fill="#fff" stroke="#333" stroke-width="1.1"/><path d="M6 14V10c0-3 1-4 2-4s2 1 2 4v2h4c1 0 1 1 1 2" stroke="#1f7fd8" stroke-width="1.3" fill="none"/></svg>
<svg class="a" style="left:30.5px;top:260px" width="20" height="20" viewBox="0 0 20 20"><rect x="2.5" y="2.5" width="6" height="6" fill="#d6ebfb" stroke="#1f7fd8" stroke-width="1.2"/><rect x="11.5" y="2.5" width="6" height="6" fill="#d6ebfb" stroke="#1f7fd8" stroke-width="1.2"/><rect x="2.5" y="11.5" width="6" height="6" fill="#d6ebfb" stroke="#1f7fd8" stroke-width="1.2"/><rect x="11.5" y="11.5" width="6" height="6" fill="#d6ebfb" stroke="#1f7fd8" stroke-width="1.2"/><path d="M13 18h5v-5z" fill="#111"/></svg>
<svg class="a" style="left:30.5px;top:282px" width="20" height="20" viewBox="0 0 20 20"><path d="M10 1l3 3h-2v4h4V6l3 4-3 4v-2h-4v4h2l-3 3-3-3h2v-4H5v2L2 10l3-4v2h4V4H7z" fill="#222"/><rect x="8" y="8" width="4" height="4" fill="#fff" stroke="#222"/></svg>
<svg class="a" style="left:30.5px;top:303px" width="20" height="20" viewBox="0 0 20 20"><path d="M16 9a6.5 6.5 0 1 1-3-5.5" stroke="#333" stroke-width="1.3" fill="none"/><path d="M10 1l4 2.5-4 2z" fill="#333"/></svg>
<svg class="a" style="left:30.5px;top:325px" width="20" height="20" viewBox="0 0 20 20"><rect x="2.5" y="7.5" width="10" height="10" fill="#fff" stroke="#333" stroke-width="1.2"/><path d="M2.5 2.5h15v15h-5v-10h-10z" fill="#9ccaf0" stroke="#1f7fd8" stroke-width="1.2"/></svg>
<svg class="a" style="left:30.5px;top:347px" width="20" height="20" viewBox="0 0 20 20"><path d="M3.5 2.5h8l6 15h-14z" fill="#9ccaf0" stroke="#1f7fd8" stroke-width="1.1"/><path d="M3.5 2.5h8v15h-8z" fill="#fff" stroke="#333" stroke-width="1.1"/><path d="M6 12h7M11 10l2 2-2 2" stroke="#222" fill="none"/></svg>
<svg class="a" style="left:30.5px;top:369px" width="20" height="20" viewBox="0 0 20 20"><path d="M1 12h2M5 12h2M9 12h2" stroke="#1f7fd8" stroke-width="1.3"/><path d="M11 17L17 3" stroke="#1f7fd8" stroke-width="1.3"/></svg>
<svg class="a" style="left:30.5px;top:391px" width="20" height="20" viewBox="0 0 20 20"><path d="M1 12h2M5 12h2" stroke="#1f7fd8" stroke-width="1.3"/><path d="M8 12L17 3" stroke="#1f7fd8" stroke-width="1.3"/></svg>
<svg class="a" style="left:30.5px;top:413px" width="20" height="20" viewBox="0 0 20 20"><path d="M2.5 16.5v-10h15" stroke="#333" fill="none" stroke-width="1.1"/><rect x="12" y="4" width="4" height="4" fill="#1f7fd8"/><path d="M2.5 6.5h9" stroke="#333"/></svg>
<svg class="a" style="left:30.5px;top:435px" width="20" height="20" viewBox="0 0 20 20"><path d="M2.5 17.5v-11h4M13.5 6.5h4v11h-15" stroke="#333" fill="none" stroke-width="1.1"/><rect x="3" y="4" width="4" height="4" fill="#1f7fd8"/><rect x="13" y="4" width="4" height="4" fill="#1f7fd8"/></svg>
<svg class="a" style="left:30.5px;top:457px" width="20" height="20" viewBox="0 0 20 20"><path d="M1 10h6M13 10h6" stroke="#1f7fd8" stroke-width="1.3"/><path d="M5 7l4 3-4 3zM15 7l-4 3 4 3z" fill="#1f7fd8"/></svg>
<svg class="a" style="left:30.5px;top:479px" width="20" height="20" viewBox="0 0 20 20"><path d="M2.5 17.5v-9l7-7h8v16z" fill="#fff" stroke="#1f7fd8" stroke-width="1.3"/></svg>
<svg class="a" style="left:30.5px;top:500px" width="20" height="20" viewBox="0 0 20 20"><path d="M2.5 17.5v-6c0-6 4-10 10-10h5v16z" fill="#fff" stroke="#1f7fd8" stroke-width="1.3"/></svg>
<svg class="a" style="left:30.5px;top:522px" width="20" height="20" viewBox="0 0 20 20"><path d="M2 14c3-6 5-6 8-2s4 3 7-5" stroke="#1f7fd8" stroke-width="1.4" fill="none"/><rect x="1" y="14" width="3" height="3" fill="#fff" stroke="#333"/><rect x="15" y="3" width="3" height="3" fill="#fff" stroke="#333"/></svg>
<svg class="a" style="left:30.5px;top:544px" width="20" height="20" viewBox="0 0 20 20"><path d="M2 9l6-3 10 2v7l-6 3-10-2z" fill="#9ccaf0" stroke="#1f7fd8" stroke-width="1.2"/><path d="M2 9l10 2 6-3M12 11v7" stroke="#1f7fd8" stroke-width="1.2" fill="none"/><path d="M6 7l-2-3h6l3 3" stroke="#1f7fd8" fill="none"/></svg>
<div class="a" style="left:1348px;top:163px;width:18px;height:564px;background:repeating-conic-gradient(#f4f4f4 0 25%,#dedede 0 50%) 0 0/2px 2px;"></div>
<div class="a" style="left:1349px;top:164px;width:16px;height:16px;background:#d6d2ca;border:1px solid #fff;border-right-color:#404040;border-bottom-color:#404040"></div>
<svg class="a" style="left:1353px;top:169px" width="8" height="5" viewBox="0 0 8 5"><path d="M0 5h8L4 0z" fill="#000"/></svg>
<div class="a" style="left:1349px;top:711px;width:16px;height:16px;background:#d6d2ca;border:1px solid #fff;border-right-color:#404040;border-bottom-color:#404040"></div>
<svg class="a" style="left:1353px;top:717px" width="8" height="5" viewBox="0 0 8 5"><path d="M0 0h8L4 5z" fill="#000"/></svg>
<div class="a" style="left:1348px;top:607px;width:16px;height:16px;background:#d6d2ca;border:1px solid #fff;border-right-color:#404040;border-bottom-color:#404040"></div>
<div class="a" style="left:58px;top:727px;width:1308px;height:16px;background:#d4d0c8;"></div>
<div class="a" style="left:58px;top:742px;width:1308px;height:1px;background:#fafafa;"></div>
<div class="a" style="left:59px;top:728px;width:15px;height:14px;background:#d4d0c8;border:1px solid #fff;border-right-color:#8a8a8a;border-bottom-color:#8a8a8a"></div>
<div class="a" style="left:74px;top:728px;width:15px;height:14px;background:#d4d0c8;border:1px solid #fff;border-right-color:#8a8a8a;border-bottom-color:#8a8a8a"></div>
<div class="a" style="left:89px;top:728px;width:15px;height:14px;background:#d4d0c8;border:1px solid #fff;border-right-color:#8a8a8a;border-bottom-color:#8a8a8a"></div>
<div class="a" style="left:104px;top:728px;width:15px;height:14px;background:#d4d0c8;border:1px solid #fff;border-right-color:#8a8a8a;border-bottom-color:#8a8a8a"></div>
<svg class="a" style="left:63px;top:731px" width="9" height="9" viewBox="0 0 9 9"><rect x="0" y="0" width="1.5" height="9" fill="#888"/><path d="M8 0v9L2 4.5z" fill="#888"/></svg>
<svg class="a" style="left:79px;top:731px" width="7" height="9" viewBox="0 0 7 9"><path d="M6 0v9L0 4.5z" fill="#888"/></svg>
<svg class="a" style="left:94px;top:731px" width="7" height="9" viewBox="0 0 7 9"><path d="M0 0v9l6-4.5z" fill="#888"/></svg>
<svg class="a" style="left:107px;top:731px" width="9" height="9" viewBox="0 0 9 9"><rect x="7.5" y="0" width="1.5" height="9" fill="#888"/><path d="M0 0v9l6-4.5z" fill="#888"/></svg>
<svg class="a" style="left:119px;top:727px" width="110" height="16" viewBox="0 0 110 16"><path d="M2 0h50l-5 16H7z" fill="#212830" stroke="#222" stroke-width=".8"/><path d="M52 0l-5 16h56l5-16" fill="#d4d0c8" stroke="#555" stroke-width="1"/></svg>
<div class="t" style="left:131px;top:729.5px;font-size:12px;color:#f4f4f4;font-weight:normal;font-family:'Liberation Sans',sans-serif;font-style:normal;transform:scaleX(0.86);transform-origin:0 0;">Model</div>
<div class="t" style="left:176.5px;top:729.5px;font-size:12px;color:#111;font-weight:normal;font-family:'Liberation Sans',sans-serif;font-style:normal;transform:scaleX(0.88);transform-origin:0 0;">Layout1</div>
<div class="a" style="left:908px;top:727px;width:440px;height:16px;background:repeating-conic-gradient(#f4f4f4 0 25%,#dedede 0 50%) 0 0/2px 2px;"></div>
<div class="a" style="left:909px;top:727px;width:6px;height:16px;background:#d6d2ca;border:1px solid #fff;border-right:2px solid #404040;border-bottom:2px solid #404040"></div>
<div class="a" style="left:915px;top:727px;width:16px;height:16px;background:#d6d2ca;border:1px solid #fff;border-right:2px solid #404040;border-bottom:2px solid #404040"></div>
<svg class="a" style="left:920px;top:731px" width="5" height="8" viewBox="0 0 5 8"><path d="M5 0v8L0 4z" fill="#000"/></svg>
<div class="a" style="left:931px;top:727px;width:16px;height:16px;background:#d6d2ca;border:1px solid #fff;border-right:2px solid #404040;border-bottom:2px solid #404040"></div>
<div class="a" style="left:1332px;top:727px;width:16px;height:16px;background:#d6d2ca;border:1px solid #fff;border-right:2px solid #404040;border-bottom:2px solid #404040"></div>
<svg class="a" style="left:1338px;top:731px" width="5" height="8" viewBox="0 0 5 8"><path d="M0 0v8l5-4z" fill="#000"/></svg>
<div class="a" style="left:1348px;top:727px;width:18px;height:16px;background:#d4d0c8;"></div>
<div class="a" style="left:0px;top:743px;width:1366px;height:25px;background:linear-gradient(#b0b0b0,#9c9c9c 50%,#8a8a8a);"></div>
<div class="a" style="left:58px;top:742px;width:1308px;height:2px;background:#f4f4f4;"></div>
<div class="a" style="left:0px;top:744px;width:1366px;height:1px;background:#404040;"></div>
<div class="t" style="left:13px;top:750px;font-size:12.5px;color:#111;font-weight:normal;font-family:'Liberation Sans',sans-serif;font-style:normal;transform:scaleX(0.86);transform-origin:0 0;">-53.9580,&nbsp; 130.1068, 0.0000</div>
<div class="a" style="left:177px;top:744px;width:1px;height:24px;background:#666;"></div>
<div class="a" style="left:178px;top:745px;width:22px;height:23px;background:linear-gradient(#d8d8d8,#bcbcbc);border-left:1px solid #7e7e7e"></div>
<svg class="a" style="left:179px;top:745px" width="21" height="23" viewBox="0 0 21 23"><path d="M3 10h14M10 3v14" stroke="#222" stroke-width="1.5"/><rect x="7" y="7" width="6" height="6" fill="none" stroke="#222"/><rect x="13" y="13" width="5" height="5" fill="#fff" stroke="#e05020"/><rect x="15" y="11" width="4" height="4" fill="#2a7fd0"/></svg>
<div class="a" style="left:200px;top:745px;width:22px;height:23px;background:linear-gradient(#d8d8d8,#bcbcbc);border-left:1px solid #7e7e7e"></div>
<svg class="a" style="left:201px;top:745px" width="21" height="23" viewBox="0 0 21 23"><g fill="#222"><rect x="4" y="6" width="1" height="1"/><rect x="4" y="9" width="1" height="1"/><rect x="4" y="12" width="1" height="1"/><rect x="4" y="15" width="1" height="1"/><rect x="7" y="6" width="1" height="1"/><rect x="7" y="9" width="1" height="1"/><rect x="7" y="12" width="1" height="1"/><rect x="7" y="15" width="1" height="1"/><rect x="10" y="6" width="1" height="1"/><rect x="10" y="9" width="1" height="1"/><rect x="10" y="12" width="1" height="1"/><rect x="10" y="15" width="1" height="1"/><rect x="13" y="6" width="1" height="1"/><rect x="13" y="9" width="1" height="1"/><rect x="13" y="12" width="1" height="1"/><rect x="13" y="15" width="1" height="1"/><rect x="16" y="6" width="1" height="1"/><rect x="16" y="9" width="1" height="1"/><rect x="16" y="12" width="1" height="1"/><rect x="16" y="15" width="1" height="1"/></g><path d="M4 18h10M16 8v8" stroke="#222"/></svg>
<div class="a" style="left:222px;top:745px;width:23px;height:23px;background:linear-gradient(#d8d8d8,#bcbcbc);border-left:1px solid #7e7e7e"></div>
<svg class="a" style="left:223px;top:745px" width="22" height="23" viewBox="0 0 22 23"><g stroke="#222" stroke-width="1"><path d="M3.5 3v16M3 3.5h16"/><path d="M6.5 3v16M3 6.5h16"/><path d="M9.5 3v16M3 9.5h16"/><path d="M12.5 3v16M3 12.5h16"/><path d="M15.5 3v16M3 15.5h16"/><path d="M18.5 3v16M3 18.5h16"/></g></svg>
<div class="a" style="left:245px;top:745px;width:22px;height:23px;background:linear-gradient(#d8d8d8,#bcbcbc);border-left:1px solid #7e7e7e"></div>
<svg class="a" style="left:246px;top:745px" width="21" height="23" viewBox="0 0 21 23"><path d="M3.5 2v16h16M6.5 12.5h6v6" stroke="#222" fill="none"/></svg>
<div class="a" style="left:267px;top:745px;width:22px;height:23px;background:linear-gradient(#e4f3fb,#a9d8ef);border-left:1px solid #7e7e7e"></div>
<svg class="a" style="left:268px;top:745px" width="21" height="23" viewBox="0 0 21 23"><circle cx="9" cy="13" r="6" fill="none" stroke="#222" stroke-width="1.4"/><path d="M9 13l9-6M6 13h12" stroke="#222" stroke-width="1.4"/></svg>
<div class="a" style="left:289px;top:745px;width:22px;height:23px;background:linear-gradient(#e4f3fb,#a9d8ef);border-left:1px solid #7e7e7e"></div>
<svg class="a" style="left:290px;top:745px" width="21" height="23" viewBox="0 0 21 23"><rect x="5.5" y="5.5" width="13" height="13" fill="#fff" stroke="#222"/><circle cx="4" cy="4" r="2.2" fill="#fff" stroke="#e05020" stroke-width="1.2"/></svg>
<div class="a" style="left:311px;top:745px;width:22px;height:23px;background:linear-gradient(#e4f3fb,#a9d8ef);border-left:1px solid #7e7e7e"></div>
<svg class="a" style="left:312px;top:745px" width="21" height="23" viewBox="0 0 21 23"><path d="M5 8l4-4h10v11l-4 4H5z" fill="#fff" stroke="#222"/><path d="M5 8h10v11M15 8l4-4" stroke="#222" fill="none"/><circle cx="4" cy="19" r="2.2" fill="#fff" stroke="#e05020" stroke-width="1.2"/></svg>
<div class="a" style="left:333px;top:745px;width:22px;height:23px;background:linear-gradient(#e4f3fb,#a9d8ef);border-left:1px solid #7e7e7e"></div>
<svg class="a" style="left:334px;top:745px" width="21" height="23" viewBox="0 0 21 23"><path d="M3 17h15M3 17l12-10" stroke="#222" stroke-width="1.3" fill="none"/><path d="M12 17a7 7 0 0 0-2-5" stroke="#222" fill="none"/></svg>
<div class="a" style="left:355px;top:745px;width:22px;height:23px;background:linear-gradient(#e4f3fb,#a9d8ef);border-left:1px solid #7e7e7e"></div>
<svg class="a" style="left:356px;top:745px" width="21" height="23" viewBox="0 0 21 23"><path d="M3 19V4M3 19h15M3 19l12-12" stroke="#222" stroke-width="1.2" fill="none"/><path d="M14 3l-3 5h3l-2 4 5-6h-3l2-3z" fill="#f2a020"/></svg>
<div class="a" style="left:377px;top:745px;width:22px;height:23px;background:linear-gradient(#e4f3fb,#a9d8ef);border-left:1px solid #7e7e7e"></div>
<svg class="a" style="left:378px;top:745px" width="21" height="23" viewBox="0 0 21 23"><path d="M4 7v8M4 11h6" stroke="#222" stroke-width="1.6"/><rect x="9.5" y="10.5" width="8" height="4" fill="#fff" stroke="#222" stroke-width="1.3"/></svg>
<div class="a" style="left:399px;top:745px;width:22px;height:23px;background:linear-gradient(#d8d8d8,#bcbcbc);border-left:1px solid #7e7e7e"></div>
<svg class="a" style="left:400px;top:745px" width="21" height="23" viewBox="0 0 21 23"><path d="M3 11h15M10.5 4v15" stroke="#111" stroke-width="2.4"/></svg>
<div class="a" style="left:421px;top:745px;width:22px;height:23px;background:linear-gradient(#e4f3fb,#a9d8ef);border-left:1px solid #7e7e7e"></div>
<svg class="a" style="left:422px;top:745px" width="21" height="23" viewBox="0 0 21 23"><rect x="3.5" y="4.5" width="14" height="14" fill="#4a8fd6" stroke="#1f5fa8"/><g fill="#9cd0ff"><rect x="4" y="5" width="1" height="1"/><rect x="5" y="7" width="1" height="1"/><rect x="4" y="9" width="1" height="1"/><rect x="5" y="11" width="1" height="1"/><rect x="4" y="13" width="1" height="1"/><rect x="5" y="15" width="1" height="1"/><rect x="4" y="17" width="1" height="1"/><rect x="6" y="5" width="1" height="1"/><rect x="7" y="7" width="1" height="1"/><rect x="6" y="9" width="1" height="1"/><rect x="7" y="11" width="1" height="1"/><rect x="6" y="13" width="1" height="1"/><rect x="7" y="15" width="1" height="1"/><rect x="6" y="17" width="1" height="1"/><rect x="8" y="5" width="1" height="1"/><rect x="9" y="7" width="1" height="1"/><rect x="8" y="9" width="1" height="1"/><rect x="9" y="11" width="1" height="1"/><rect x="8" y="13" width="1" height="1"/><rect x="9" y="15" width="1" height="1"/><rect x="8" y="17" width="1" height="1"/><rect x="10" y="5" width="1" height="1"/><rect x="11" y="7" width="1" height="1"/><rect x="10" y="9" width="1" height="1"/><rect x="11" y="11" width="1" height="1"/><rect x="10" y="13" width="1" height="1"/><rect x="11" y="15" width="1" height="1"/><rect x="10" y="17" width="1" height="1"/><rect x="12" y="5" width="1" height="1"/><rect x="13" y="7" width="1" height="1"/><rect x="12" y="9" width="1" height="1"/><rect x="13" y="11" width="1" height="1"/><rect x="12" y="13" width="1" height="1"/><rect x="13" y="15" width="1" height="1"/><rect x="12" y="17" width="1" height="1"/><rect x="14" y="5" width="1" height="1"/><rect x="15" y="7" width="1" height="1"/><rect x="14" y="9" width="1" height="1"/><rect x="15" y="11" width="1" height="1"/><rect x="14" y="13" width="1" height="1"/><rect x="15" y="15" width="1" height="1"/><rect x="14" y="17" width="1" height="1"/><rect x="16" y="5" width="1" height="1"/><rect x="17" y="7" width="1" height="1"/><rect x="16" y="9" width="1" height="1"/><rect x="17" y="11" width="1" height="1"/><rect x="16" y="13" width="1" height="1"/><rect x="17" y="15" width="1" height="1"/><rect x="16" y="17" width="1" height="1"/></g></svg>
<div class="a" style="left:443px;top:745px;width:22px;height:23px;background:linear-gradient(#d8d8d8,#bcbcbc);border-left:1px solid #7e7e7e"></div>
<svg class="a" style="left:444px;top:745px" width="21" height="23" viewBox="0 0 21 23"><rect x="5.5" y="5.5" width="10" height="13" fill="#fff" stroke="#222"/><g fill="#222"><rect x="7" y="7" width="7" height="2"/><rect x="7" y="10" width="2" height="2"/><rect x="10" y="10" width="2" height="2"/><rect x="13" y="10" width="1" height="2"/><rect x="7" y="13" width="2" height="2"/><rect x="10" y="13" width="2" height="2"/></g></svg>
<div class="a" style="left:465px;top:745px;width:22px;height:23px;background:linear-gradient(#d8d8d8,#bcbcbc);border-left:1px solid #7e7e7e"></div>
<svg class="a" style="left:466px;top:745px" width="21" height="23" viewBox="0 0 21 23"><path d="M2 6h6M5 3v6" stroke="#222" stroke-width="1.2"/><rect x="6.5" y="9.5" width="8" height="8" fill="#fff" stroke="#222"/><rect x="10.5" y="12.5" width="8" height="8" fill="#4cc24c" stroke="#1a6a1a"/></svg>
<div class="a" style="left:487px;top:745px;width:22px;height:23px;background:linear-gradient(#d8d8d8,#bcbcbc);border-left:1px solid #7e7e7e"></div>
<svg class="a" style="left:488px;top:745px" width="21" height="23" viewBox="0 0 21 23"><path d="M8 3h6v5h5v6h-5v5H8v-5H3V8h5z" fill="#fff" stroke="#222" stroke-width="1.3"/></svg>
<div class="a" style="left:509px;top:745px;width:500px;height:23px;background:linear-gradient(#a8a8a8,#8c8c8c);border-left:1px solid #7e7e7e"></div>
<div class="a" style="left:1010px;top:745px;width:46px;height:23px;background:linear-gradient(#d8d8d8,#bcbcbc);border-left:1px solid #7e7e7e"></div>
<div class="t" style="left:1015px;top:750px;font-size:12.5px;color:#111;font-weight:normal;font-family:'Liberation Sans',sans-serif;font-style:normal;transform:scaleX(0.845);transform-origin:0 0;">MODEL</div>
<div class="a" style="left:1056px;top:745px;width:22px;height:23px;background:linear-gradient(#d8d8d8,#bcbcbc);border-left:1px solid #7e7e7e"></div>
<svg class="a" style="left:1057px;top:745px" width="21" height="23" viewBox="0 0 21 23"><path d="M4.5 18.5V4.5L18 18.5z" fill="#fff" stroke="#222"/><path d="M3 20h16" stroke="#222" stroke-width="1.5"/><path d="M7 14h5" stroke="#222"/></svg>
<div class="a" style="left:1078px;top:745px;width:22px;height:23px;background:linear-gradient(#d8d8d8,#bcbcbc);border-left:1px solid #7e7e7e"></div>
<svg class="a" style="left:1079px;top:745px" width="21" height="23" viewBox="0 0 21 23"><rect x="3.5" y="4.5" width="7" height="8" fill="#fff" stroke="#222"/><rect x="12.5" y="4.5" width="7" height="8" fill="#fff" stroke="#222"/><path d="M3 17h17" stroke="#222" stroke-width="2"/></svg>
<div class="a" style="left:1100px;top:745px;width:12px;height:23px;background:linear-gradient(#a0a0a0,#888);border-left:1px solid #7e7e7e"></div>
<div class="a" style="left:1112px;top:745px;width:55px;height:23px;background:linear-gradient(#d8d8d8,#bcbcbc);border-left:1px solid #7e7e7e"></div>
<svg class="a" style="left:1113px;top:745px" width="20" height="23" viewBox="0 0 20 23"><path d="M10 3v8M10 11l-7 6M10 11l7 6" stroke="#222" stroke-width="2"/><path d="M10 3l-3 9h6z" fill="#fff" stroke="#222"/></svg>
<div class="t" style="left:1133px;top:750px;font-size:12.5px;color:#111;font-weight:normal;font-family:'Liberation Sans',sans-serif;font-style:normal;transform:scaleX(0.84);transform-origin:0 0;">1:1</div>
<svg class="a" style="left:1152px;top:752px" width="8" height="5" viewBox="0 0 8 5"><path d="M0 0h8L4 5z" fill="#111"/></svg>
<div class="a" style="left:1164px;top:745px;width:22px;height:23px;background:linear-gradient(#d8d8d8,#bcbcbc);border-left:1px solid #7e7e7e"></div>
<svg class="a" style="left:1165px;top:745px" width="21" height="23" viewBox="0 0 21 23"><path d="M10 3L3 18l4-2 3-5 3 5 4 2z" fill="#fff" stroke="#222"/><circle cx="15" cy="15" r="3" fill="#f2b020"/></svg>
<div class="a" style="left:1186px;top:745px;width:21px;height:23px;background:linear-gradient(#d8d8d8,#bcbcbc);border-left:1px solid #7e7e7e"></div>
<svg class="a" style="left:1187px;top:745px" width="20" height="23" viewBox="0 0 20 23"><path d="M10 3L3 18l4-2 3-5 3 5 4 2z" fill="#ddd" stroke="#888"/></svg>
<div class="a" style="left:1207px;top:745px;width:7px;height:23px;background:linear-gradient(#a0a0a0,#888);border-left:1px solid #7e7e7e"></div>
<div class="a" style="left:1214px;top:745px;width:22px;height:23px;background:linear-gradient(#d8d8d8,#bcbcbc);border-left:1px solid #7e7e7e"></div>
<svg class="a" style="left:1215px;top:745px" width="21" height="23" viewBox="0 0 21 23"><path d="M15.32 9.61 L17.43 9.97 L17.43 12.03 L15.32 12.39 L14.75 13.78 L15.98 15.53 L14.53 16.98 L12.78 15.75 L11.39 16.32 L11.03 18.43 L8.97 18.43 L8.61 16.32 L7.22 15.75 L5.47 16.98 L4.02 15.53 L5.25 13.78 L4.68 12.39 L2.57 12.03 L2.57 9.97 L4.68 9.61 L5.25 8.22 L4.02 6.47 L5.47 5.02 L7.22 6.25 L8.61 5.68 L8.97 3.57 L11.03 3.57 L11.39 5.68 L12.78 6.25 L14.53 5.02 L15.98 6.47 L14.75 8.22Z" fill="#f0f0f0" stroke="#222" stroke-width="1.3" stroke-linejoin="round"/><circle cx="10" cy="11" r="2.5" fill="#f0f0f0" stroke="#222" stroke-width="1.2"/><path d="M15 20h4v-4z" fill="#111"/></svg>
<div class="a" style="left:1236px;top:745px;width:22px;height:23px;background:linear-gradient(#d8d8d8,#bcbcbc);border-left:1px solid #7e7e7e"></div>
<svg class="a" style="left:1237px;top:745px" width="21" height="23" viewBox="0 0 21 23"><rect x="3.5" y="10.5" width="11" height="9" fill="#fff" stroke="#222" stroke-width="1.2"/><path d="M11 10V6c0-4 7-4 7 0v3" stroke="#222" stroke-width="1.3" fill="none"/><path d="M9 13v4" stroke="#222" stroke-width="1.5"/></svg>
<div class="a" style="left:1258px;top:745px;width:21px;height:23px;background:linear-gradient(#d8d8d8,#bcbcbc);border-left:1px solid #7e7e7e"></div>
<svg class="a" style="left:1259px;top:745px" width="20" height="23" viewBox="0 0 20 23"><rect x="3.5" y="6.5" width="14" height="9" fill="#e8e8e8" stroke="#222"/><path d="M5 9h4M5 12h4" stroke="#222"/><circle cx="15" cy="16" r="3.5" fill="#bde0fa" stroke="#1f6fc0"/></svg>
<div class="a" style="left:1279px;top:745px;width:52px;height:23px;background:linear-gradient(#bcbcbc,#a8a8a8);border-left:1px solid #7e7e7e"></div>
<div class="a" style="left:1281px;top:747px;width:47px;height:20px;background:linear-gradient(#e8e8e8,#c8c8c8);border:1px solid #8a8a8a"></div>
<svg class="a" style="left:1282px;top:746px" width="22" height="22" viewBox="0 0 22 22"><rect x="3.5" y="4.5" width="14" height="13" fill="#dce8f4" stroke="#333"/><rect x="5" y="6" width="6" height="4" fill="#2a5fa8"/><path d="M8 15l3 3 7-8" stroke="#3aa83a" stroke-width="2.4" fill="none"/></svg>
<svg class="a" style="left:1303px;top:746px" width="22" height="22" viewBox="0 0 22 22"><path d="M11 2c-4 0-6 3-6 6 0 3 3 4 3 7h6c0-3 3-4 3-7 0-3-2-6-6-6z" fill="#ffe070" stroke="#a08020"/><rect x="8" y="15" width="6" height="4" fill="#999"/></svg>
<div class="a" style="left:1331px;top:745px;width:35px;height:23px;background:linear-gradient(#d8d8d8,#bcbcbc);border-left:1px solid #7e7e7e"></div>
<svg class="a" style="left:1334px;top:753px" width="8" height="5" viewBox="0 0 8 5"><path d="M0 0h8L4 5z" fill="#111"/></svg>
<svg class="a" style="left:1346px;top:746px" width="19" height="22" viewBox="0 0 19 22"><rect x="2.5" y="3.5" width="15" height="15" fill="#fff" stroke="#333"/><rect x="3" y="4" width="14" height="3" fill="#888"/></svg>
</body></html>
